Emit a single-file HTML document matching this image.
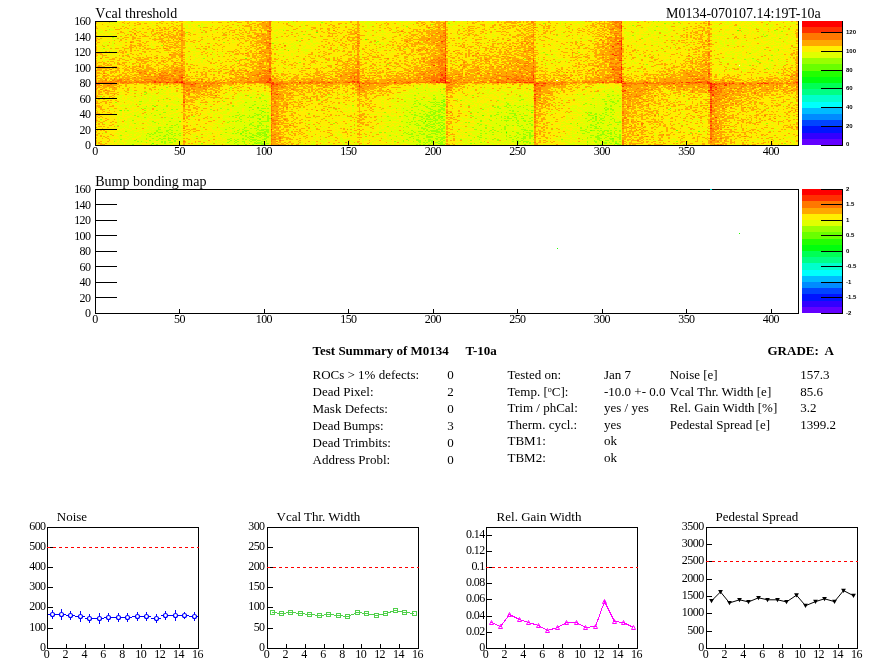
<!DOCTYPE html>
<html><head><meta charset="utf-8"><title>Test Summary of M0134</title>
<style>
html,body{margin:0;padding:0;background:#fff}
svg{display:block}
text{font-family:"Liberation Serif",serif;fill:#000}
.ax{font-size:12px;letter-spacing:-0.55px}
.t14{font-size:14px}
.t13{font-size:13px}
.b{font-weight:bold}
.pl{font-family:"Liberation Sans",sans-serif;font-weight:bold;font-size:6px}
.k{stroke:#000;stroke-width:1;fill:none;shape-rendering:crispEdges}
</style></head><body>
<svg style="will-change:transform" width="896" height="672" viewBox="0 0 896 672">
<rect width="896" height="672" fill="#fff"/>
<g shape-rendering="crispEdges"><rect x="95" y="21" width="703" height="124" fill="#FFEE00"/>
<g transform="translate(95 21) scale(1.68990 1)" fill="none" stroke-width="1">
<path stroke="#22FF00" d="M195 100.5h1M243 111.5h1"/>
<path stroke="#69FF00" d="M380 9.5h1M131 11.5h1M160 18.5h1M114 29.5h1M89 37.5h1M206 80.5h1M205 81.5h1M35 85.5h1M91 86.5h1m4 0h1M301 87.5h1m38 0h1M15 89.5h1M99 90.5h1M258 91.5h1M333 93.5h1M229 94.5h1M205 95.5h1m90 0h1M253 97.5h1M97 98.5h1M50 100.5h1M285 102.5h1M205 104.5h1M298 105.5h1M293 109.5h1m50 0h1M357 110.5h1M86 112.5h1M101 113.5h1M93 116.5h1M306 117.5h1M34 122.5h1m60 0h1m212 0h1"/>
<path stroke="#99FF00" d="M330 0.5h1m2 0h1M114 1.5h1m19 0h1m210 0h1M209 2.5h1m55 0h1m71 0h1m60 0h1M199 3.5h1m51 0h1M61 4.5h1m62 0h1m193 0h1M184 5.5h1m147 0h1M381 7.5h1M8 8.5h1M111 9.5h1m219 0h1m70 0h1M382 10.5h1m23 0h1M54 11.5h1M123 13.5h1m271 0h1M273 14.5h1m44 0h1m78 0h1M396 15.5h1M10 16.5h1M122 17.5h1m200 0h1m81 0h1M121 20.5h1m45 0h1M76 21.5h1m89 0h1m118 0h1M105 22.5h1M39 24.5h1M5 27.5h1M183 28.5h1m152 0h1m59 0h1m7 0h1M404 29.5h1M265 31.5h1m20 0h1M387 32.5h1M19 33.5h1m247 0h1M327 34.5h1m72 0h1M64 37.5h1m324 0h1M254 38.5h1m129 0h1m19 0h1M84 39.5h1m306 0h1m8 0h1M392 40.5h1M121 41.5h1m271 0h1M173 43.5h1m152 0h1M387 44.5h1M397 47.5h1M398 48.5h1M404 51.5h1M369 53.5h1M42 66.5h1m37 0h1M190 67.5h1m15 0h1M39 68.5h1m164 0h1m1 0h1m50 0h1M195 69.5h1M204 70.5h1m70 0h1m19 0h1m5 0h1m4 0h1M29 71.5h2M191 72.5h1M29 73.5h1m68 0h1m39 0h1m14 0h1m51 0h1m79 0h1m12 0h1m4 0h1M90 74.5h1m8 0h1m89 0h1m10 0h1m22 0h1m27 0h1m54 0h1m2 0h1m38 0h1M3 75.5h1m202 0h1m96 0h2M92 76.5h1m4 0h1m103 0h1M97 77.5h1m91 0h1m10 0h1m41 0h1m20 0h1m30 0h1m12 0h1m2 0h1M40 78.5h1m3 0h1m148 0h1m6 0h2m4 0h1m7 0h1m37 0h2m46 0h2m3 0h1M100 79.5h1m31 0h1m57 0h1m14 0h2m9 0h1m21 0h1m12 0h1m52 0h1m4 0h1M26 80.5h2m9 0h1m11 0h1m26 0h1m17 0h1m3 0h1m2 0h1m81 0h1m5 0h1m7 0h1m3 0h1m99 0h2m2 0h2m2 0h1M12 81.5h1m76 0h1m101 0h1m6 0h3m1 0h2m39 0h1m62 0h2M189 82.5h1m2 0h1m8 0h1m4 0h1m37 0h1m45 0h1m11 0h1m5 0h1M26 83.5h1m35 0h1m31 0h1m6 0h1m86 0h1m3 0h1m2 0h1m4 0h1m1 0h2m2 0h2m36 0h1m44 0h1m3 0h1m8 0h1m4 0h1M34 84.5h1m7 0h1m38 0h1m6 0h1m4 0h1m5 0h1m3 0h1m48 0h1m41 0h1m6 0h1m2 0h4m13 0h1m21 0h1m1 0h1m2 0h1m4 0h1m1 0h1m39 0h1m9 0h1M30 85.5h1m11 0h1m38 0h1m19 0h1m87 0h2m4 0h2m2 0h3m1 0h1m2 0h1m28 0h1m2 0h1m3 0h2m7 0h1m6 0h1m46 0h1m4 0h1M92 86.5h1m94 0h1m8 0h1m7 0h2m30 0h1m1 0h1m5 0h1m1 0h1m3 0h1m2 0h1m41 0h1m6 0h1M27 87.5h1m1 0h1m44 0h1m21 0h1m1 0h3m1 0h1m75 0h1m3 0h1m14 0h2m6 0h2m32 0h1m63 0h1m1 0h1M40 88.5h1m4 0h1m2 0h1m19 0h1m9 0h1m14 0h1m97 0h1m6 0h2m3 0h4m22 0h1m25 0h1m46 0h2m1 0h2m32 0h1M14 89.5h1m2 0h1m1 0h1m9 0h1m6 0h1m54 0h1m5 0h2m85 0h1m2 0h1m5 0h1m6 0h2m1 0h2m1 0h1m38 0h1m1 0h1m8 0h1m1 0h2m42 0h1m3 0h1M194 90.5h1m3 0h2m1 0h4m42 0h1m2 0h1M40 91.5h2m42 0h1m13 0h1m1 0h1m1 0h1m68 0h1m14 0h1m2 0h1m7 0h2m1 0h2m1 0h1m1 0h1m16 0h1m3 0h1m11 0h1m1 0h1m2 0h1m46 0h1m1 0h2m8 0h1m2 0h1m1 0h1M33 92.5h1m60 0h1m3 0h1m93 0h1m2 0h1m2 0h1m1 0h2m4 0h1m38 0h4m4 0h1m39 0h1m2 0h1m3 0h1M30 93.5h1m7 0h1m46 0h1m9 0h3m28 0h1m60 0h1m1 0h1m4 0h1m1 0h1m2 0h2m2 0h2m32 0h2m9 0h1m2 0h1m40 0h1m2 0h2m1 0h1m3 0h1m3 0h1M23 94.5h1m11 0h1m47 0h2m2 0h2m2 0h1m2 0h1m1 0h1m1 0h1m1 0h1m1 0h1m80 0h1m5 0h2m5 0h4m1 0h3m18 0h1m11 0h1m1 0h1m11 0h2m4 0h2m32 0h1m3 0h3m4 0h1m3 0h1M25 95.5h1m32 0h1m20 0h1m1 0h1m4 0h1m4 0h1m1 0h1m5 0h1m2 0h1m70 0h1m6 0h1m3 0h1m7 0h2m1 0h3m2 0h2m1 0h2m1 0h1m16 0h1m10 0h1m5 0h1m1 0h1m1 0h1m2 0h1m4 0h1m48 0h1m3 0h1M29 96.5h1m11 0h1m41 0h1m1 0h1m4 0h1m1 0h2m5 0h1m2 0h1m85 0h2m3 0h1m3 0h1m2 0h1m2 0h3m34 0h1m3 0h1m3 0h2m8 0h1m35 0h1m1 0h1m1 0h1m2 0h1M45 97.5h1m39 0h1m10 0h2m4 0h2m84 0h1m5 0h1m1 0h1m1 0h1m1 0h2m1 0h1m1 0h1m19 0h1m11 0h1m4 0h1m1 0h3m2 0h1m2 0h1m4 0h1m32 0h1m3 0h1m1 0h1m2 0h2m5 0h1M3 98.5h1m82 0h1m15 0h1m82 0h1m2 0h1m4 0h1m2 0h4m1 0h2m1 0h1m1 0h1m26 0h1m15 0h1m43 0h1m2 0h1m2 0h1m5 0h1m1 0h1M17 99.5h1m4 0h1m61 0h1m6 0h1m10 0h1m71 0h1m16 0h2m2 0h1m4 0h3m2 0h2m21 0h1m5 0h1m5 0h1m1 0h3m2 0h1m2 0h1m2 0h2m3 0h1m33 0h1m3 0h1m1 0h1m1 0h2m5 0h1M34 100.5h1m9 0h1m34 0h1m1 0h1m1 0h1m2 0h1m9 0h1m1 0h5m78 0h1m5 0h1m1 0h1m3 0h1m3 0h3m1 0h1m26 0h1m14 0h1m6 0h1m3 0h1m1 0h2m33 0h1m2 0h2m11 0h1m2 0h1M35 101.5h1m42 0h1m9 0h1m4 0h1m3 0h1m86 0h1m1 0h1m7 0h1m3 0h1m2 0h1m1 0h3m13 0h1m1 0h1m27 0h1m47 0h1m1 0h1m4 0h1m3 0h3M23 102.5h1m13 0h1m54 0h1m4 0h2m42 0h1m48 0h1m3 0h1m2 0h1m2 0h1m1 0h2m2 0h1m19 0h1m10 0h1m12 0h1m6 0h1m23 0h1m15 0h1m2 0h1m96 0h1M42 103.5h1m5 0h1m42 0h2m5 0h1m87 0h1m2 0h1m1 0h1m4 0h1m1 0h3m3 0h1m1 0h1m21 0h1m14 0h1m11 0h1m2 0h1m34 0h1m2 0h1m7 0h2m3 0h1M13 104.5h1m31 0h1m1 0h1m40 0h1m2 0h1m1 0h1m2 0h2m1 0h1m1 0h1m88 0h3m2 0h3m3 0h1m1 0h1m23 0h1m3 0h1m7 0h1m4 0h1m2 0h1m2 0h1m1 0h1m5 0h1m26 0h1m7 0h2m8 0h1M49 105.5h1m44 0h1m1 0h1m4 0h2m70 0h1m6 0h1m3 0h1m10 0h2m1 0h3m3 0h1m1 0h1m35 0h1m8 0h1m39 0h1m3 0h2M37 106.5h2m2 0h1m2 0h2m3 0h1m29 0h1m2 0h1m5 0h2m6 0h1m1 0h1m2 0h1m80 0h1m2 0h1m5 0h1m1 0h1m3 0h1m1 0h1m1 0h1m2 0h1m1 0h1m16 0h1m7 0h1m3 0h1m6 0h1m10 0h1m2 0h1m30 0h1m3 0h1m1 0h1m2 0h1m10 0h1M37 107.5h1m43 0h1m6 0h1m3 0h1m1 0h2m95 0h1m1 0h3m4 0h1m2 0h1m1 0h2m24 0h1m10 0h1m44 0h1m7 0h3m1 0h1m4 0h1m2 0h2M37 108.5h2m5 0h1m32 0h1m7 0h1m1 0h1m8 0h1m1 0h5m91 0h1m1 0h1m5 0h4m18 0h2m9 0h1m4 0h1m1 0h1m9 0h3m35 0h1M36 109.5h1m5 0h2m1 0h1m2 0h1m35 0h1m3 0h3m4 0h1m1 0h3m1 0h2m79 0h1m4 0h1m8 0h1m1 0h5m2 0h1m22 0h1m5 0h1m1 0h1m17 0h2m1 0h2m28 0h3m4 0h2m1 0h1m1 0h1m1 0h3m1 0h1m2 0h1m1 0h1M18 110.5h1m17 0h1m5 0h1m39 0h1m4 0h1m1 0h1m10 0h3m72 0h1m12 0h1m2 0h3m1 0h1m1 0h1m1 0h5m1 0h2m7 0h1m15 0h1m2 0h1m4 0h1m4 0h1m3 0h1m5 0h1m4 0h1m31 0h1m7 0h1m1 0h2m1 0h1m3 0h1m2 0h1M35 111.5h1m1 0h3m3 0h1m1 0h1m31 0h1m6 0h1m2 0h1m3 0h1m4 0h5m1 0h1m65 0h2m1 0h1m11 0h1m1 0h1m3 0h1m12 0h3m14 0h1m15 0h1m4 0h1m8 0h2m4 0h3m27 0h1m5 0h2m7 0h1m4 0h1m1 0h1M31 112.5h1m1 0h1m1 0h1m8 0h1m2 0h1m2 0h1m30 0h1m1 0h1m5 0h1m1 0h2m2 0h3m1 0h2m81 0h1m1 0h1m2 0h1m4 0h1m1 0h1m4 0h3m2 0h1m1 0h1m21 0h1m2 0h1m11 0h1m6 0h1m2 0h1m3 0h1m30 0h2m7 0h1m2 0h1m2 0h3m1 0h1m44 0h1M32 113.5h1m1 0h1m7 0h1m2 0h1m3 0h1m24 0h1m11 0h1m6 0h1m2 0h3m1 0h1m84 0h3m5 0h2m2 0h2m2 0h2m2 0h1m29 0h1m15 0h1m1 0h2m2 0h1m41 0h3m3 0h1m2 0h1m1 0h1M15 114.5h1m14 0h1m7 0h1m2 0h1m1 0h1m3 0h1m2 0h1m36 0h1m1 0h1m3 0h3m1 0h1m1 0h3m1 0h1m70 0h1m6 0h1m8 0h2m4 0h1m7 0h1m16 0h1m6 0h1m14 0h1m1 0h1m3 0h1m5 0h1m1 0h3m33 0h2m2 0h3m2 0h1m7 0h1M32 115.5h1m3 0h1m3 0h2m4 0h1m13 0h1m28 0h1m1 0h2m2 0h2m1 0h1m1 0h3m57 0h1m17 0h1m8 0h2m7 0h4m2 0h1m3 0h1m19 0h1m16 0h1m4 0h1m4 0h2m2 0h2m37 0h2m5 0h1m1 0h1m1 0h2m1 0h1M43 116.5h1m46 0h1m1 0h1m4 0h1m3 0h2m83 0h1m4 0h1m4 0h4m3 0h5m16 0h1m2 0h2m16 0h2m3 0h1m2 0h2m2 0h1m33 0h1m1 0h1m2 0h3m3 0h1m6 0h2M30 117.5h1m3 0h1m3 0h1m1 0h2m1 0h3m1 0h1m32 0h1m6 0h1m3 0h1m8 0h2m86 0h1m5 0h1m6 0h2m2 0h2m24 0h1m4 0h1m12 0h1m2 0h3m2 0h1m33 0h1m5 0h3m1 0h1m2 0h2m4 0h1M15 118.5h1m8 0h1m5 0h1m6 0h1m1 0h1m3 0h1m2 0h1m1 0h1m29 0h2m2 0h1m1 0h1m2 0h1m1 0h1m2 0h4m3 0h2m74 0h1m8 0h1m5 0h2m5 0h2m3 0h1m1 0h2m10 0h1m10 0h1m7 0h1m2 0h1m4 0h1m3 0h1m5 0h1m5 0h1m16 0h1m11 0h1m8 0h2m6 0h2m3 0h1M23 119.5h1m8 0h1m3 0h1m6 0h2m2 0h1m32 0h1m2 0h1m7 0h1m1 0h2m1 0h2m3 0h1m80 0h1m2 0h1m4 0h3m2 0h1m1 0h3m4 0h1m1 0h1m15 0h1m15 0h1m10 0h2m1 0h1m42 0h1m2 0h2m2 0h2m2 0h1M11 120.5h1m13 0h1m1 0h1m11 0h1m1 0h1m5 0h1m31 0h1m2 0h1m1 0h1m2 0h2m3 0h1m2 0h1m2 0h2m1 0h1m75 0h1m4 0h1m5 0h1m2 0h2m4 0h1m1 0h1m3 0h1m1 0h1m24 0h1m16 0h1m2 0h2m1 0h4m34 0h1m3 0h2m9 0h1m1 0h1m1 0h1m33 0h1M30 121.5h1m8 0h1m1 0h1m2 0h2m32 0h1m4 0h1m4 0h1m5 0h1m1 0h3m93 0h1m1 0h1m1 0h1m2 0h1m1 0h2m1 0h2m22 0h1m21 0h1m2 0h1m1 0h1m1 0h1m1 0h1m31 0h1m4 0h1m3 0h3m1 0h1m3 0h1M41 122.5h1m21 0h1m18 0h1m5 0h1m2 0h1m2 0h1m1 0h4m1 0h2m92 0h1m2 0h1m4 0h3m1 0h1m14 0h1m1 0h1m25 0h1m6 0h1m43 0h2m2 0h1m3 0h1m98 0h1M22 123.5h1m10 0h1m2 0h1m47 0h1m4 0h1m3 0h1m4 0h3m89 0h1m1 0h1m1 0h1m2 0h1m6 0h3m47 0h1m36 0h1m5 0h1m1 0h1m7 0h1m1 0h2"/>
<path stroke="#E0FF00" d="M1 0.5h1m4 0h2m3 0h1m1 0h2m17 0h1m2 0h1m2 0h1m16 0h2m10 0h1m10 0h2m1 0h1m23 0h1m2 0h2m2 0h1m3 0h1m4 0h1m1 0h2m2 0h1m1 0h1m2 0h2m6 0h1m9 0h1m6 0h2m2 0h2m1 0h1m10 0h1m2 0h1m1 0h3m1 0h1m24 0h3m1 0h3m2 0h2m15 0h1m28 0h1m10 0h2m1 0h1m2 0h2m4 0h2m24 0h1m2 0h1m2 0h3m1 0h1m3 0h1m3 0h1m3 0h1m1 0h1m4 0h4m1 0h1m2 0h1m3 0h1m10 0h1m3 0h1m4 0h1m1 0h1m5 0h2m2 0h4m5 0h1m1 0h1m5 0h2m2 0h3M9 1.5h1m2 0h1m1 0h1m13 0h1m1 0h1m9 0h1m5 0h1m2 0h1m4 0h5m1 0h2m17 0h1m11 0h2m13 0h1m3 0h1m4 0h4m9 0h1m6 0h1m21 0h2m1 0h4m1 0h1m1 0h1m1 0h1m11 0h1m1 0h1m5 0h1m19 0h2m2 0h1m1 0h1m8 0h1m7 0h1m2 0h1m39 0h1m1 0h3m5 0h5m2 0h2m19 0h1m3 0h1m5 0h1m5 0h1m2 0h1m1 0h2m2 0h3m1 0h2m27 0h1m1 0h2m4 0h1m2 0h1m2 0h1m2 0h1m1 0h2m4 0h2m1 0h2m1 0h1m8 0h3M7 2.5h1m2 0h1m1 0h1m1 0h1m5 0h1m11 0h2m4 0h1m4 0h1m9 0h1m1 0h1m1 0h1m1 0h1m3 0h1m8 0h1m2 0h1m7 0h2m32 0h1m5 0h1m3 0h1m1 0h2m1 0h1m1 0h1m3 0h1m11 0h1m8 0h3m8 0h1m5 0h1m2 0h1m5 0h3m1 0h1m10 0h1m7 0h1m2 0h1m1 0h1m5 0h1m7 0h1m6 0h2m25 0h1m6 0h1m5 0h2m1 0h1m5 0h2m1 0h1m2 0h1m1 0h1m4 0h1m16 0h1m2 0h1m1 0h1m1 0h1m5 0h2m2 0h1m1 0h1m5 0h3m2 0h1m3 0h1m9 0h1m8 0h4m2 0h1m1 0h3m4 0h1m2 0h1m1 0h1m2 0h1m6 0h1m8 0h2m2 0h2m1 0h3M1 3.5h1m6 0h2m6 0h1m1 0h1m17 0h2m10 0h1m3 0h1m3 0h1m6 0h3m2 0h2m9 0h1m5 0h2m18 0h1m8 0h1m1 0h1m1 0h1m3 0h1m3 0h1m1 0h1m1 0h1m16 0h2m9 0h1m1 0h5m7 0h1m6 0h1m1 0h1m3 0h1m5 0h1m17 0h5m12 0h1m10 0h1m24 0h1m5 0h1m6 0h1m4 0h1m6 0h1m26 0h1m5 0h2m7 0h1m7 0h1m1 0h1m1 0h2m2 0h1m1 0h1m3 0h1m20 0h3m14 0h2m1 0h1m2 0h2m1 0h4m3 0h1m1 0h1m1 0h1m1 0h1m2 0h1M5 4.5h1m1 0h1m2 0h1m1 0h2m2 0h2m4 0h1m4 0h1m6 0h2m4 0h1m3 0h1m7 0h3m1 0h1m2 0h1m3 0h1m4 0h1m1 0h1m1 0h1m8 0h1m1 0h1m23 0h1m10 0h1m1 0h1m1 0h1m22 0h1m5 0h1m6 0h1m2 0h4m4 0h1m13 0h1m6 0h1m19 0h2m4 0h1m1 0h1m2 0h1m6 0h1m32 0h1m11 0h1m3 0h1m3 0h1m2 0h1m3 0h1m11 0h1m15 0h1m2 0h1m9 0h1m1 0h1m3 0h2m3 0h2m1 0h2m21 0h3m1 0h2m5 0h1m2 0h1m3 0h2m1 0h2m2 0h1m3 0h2m2 0h3m4 0h2m2 0h1M11 5.5h1m1 0h1m3 0h1m5 0h1m29 0h2m2 0h1m2 0h6m9 0h1m8 0h2m19 0h1m5 0h1m3 0h1m3 0h1m15 0h1m10 0h1m7 0h1m1 0h2m1 0h1m1 0h1m3 0h1m4 0h1m5 0h1m4 0h2m6 0h1m19 0h1m8 0h1m14 0h1m27 0h1m1 0h1m12 0h2m1 0h1m1 0h1m5 0h1m1 0h1m23 0h1m1 0h2m2 0h1m3 0h1m4 0h1m1 0h1m2 0h2m2 0h1m2 0h1m5 0h1m1 0h3m14 0h2m1 0h1m1 0h1m4 0h2m3 0h2m1 0h1m1 0h2m1 0h1m1 0h4m1 0h3m1 0h2m2 0h1m1 0h1m1 0h1m6 0h1M1 6.5h1m5 0h1m13 0h1m4 0h1m7 0h1m19 0h1m1 0h1m4 0h1m1 0h1m7 0h1m2 0h1m8 0h1m28 0h1m10 0h1m3 0h1m3 0h1m1 0h1m24 0h1m2 0h2m2 0h1m18 0h1m24 0h2m2 0h1m22 0h1m3 0h1m49 0h1m24 0h1m1 0h1m1 0h1m2 0h1m1 0h1m1 0h2m2 0h2m2 0h2m1 0h1m3 0h1m1 0h1m1 0h2m1 0h2m14 0h2m1 0h1m1 0h2m4 0h1m2 0h4m7 0h1m1 0h2m5 0h2m1 0h2m3 0h2m1 0h4M6 7.5h1m2 0h1m1 0h1m1 0h1m7 0h1m4 0h1m4 0h1m1 0h1m19 0h4m1 0h1m19 0h1m15 0h1m10 0h1m6 0h1m2 0h1m6 0h3m1 0h1m12 0h1m10 0h1m2 0h1m5 0h4m5 0h1m30 0h1m11 0h1m2 0h4m15 0h1m3 0h1m24 0h1m14 0h1m5 0h1m1 0h1m7 0h1m18 0h1m7 0h2m1 0h1m3 0h3m1 0h1m4 0h3m8 0h1m5 0h1m15 0h1m13 0h3m4 0h1m1 0h3m4 0h1m1 0h1m6 0h1m2 0h2M3 8.5h1m3 0h1m1 0h2m8 0h1m15 0h1m30 0h1m19 0h2m7 0h1m11 0h1m1 0h3m15 0h1m2 0h2m26 0h2m4 0h1m11 0h1m1 0h1m18 0h1m14 0h1m4 0h1m9 0h1m7 0h1m1 0h1m27 0h1m13 0h1m3 0h1m29 0h4m1 0h1m2 0h1m2 0h1m2 0h2m1 0h2m3 0h1m1 0h2m1 0h2m1 0h1m2 0h1m1 0h2m1 0h1m16 0h1m4 0h3m2 0h2m4 0h3m1 0h1m5 0h2m3 0h1m4 0h1m2 0h1m1 0h1M2 9.5h1m1 0h1m3 0h3m3 0h1m4 0h1m4 0h3m26 0h1m4 0h2m3 0h1m5 0h1m1 0h2m33 0h2m4 0h1m3 0h2m1 0h1m5 0h4m7 0h1m26 0h1m3 0h1m1 0h2m6 0h2m5 0h1m33 0h1m11 0h1m32 0h1m9 0h1m6 0h2m11 0h1m19 0h1m5 0h1m1 0h1m5 0h3m2 0h5m1 0h1m1 0h2m3 0h1m4 0h1m15 0h2m1 0h1m3 0h2m7 0h2m2 0h1m6 0h2m8 0h1m2 0h1m1 0h1m1 0h1M2 10.5h3m1 0h3m49 0h1m4 0h2m5 0h1m19 0h1m10 0h1m4 0h1m1 0h1m5 0h2m1 0h2m2 0h1m3 0h1m1 0h1m37 0h2m2 0h2m6 0h1m11 0h1m19 0h1m5 0h1m11 0h1m5 0h1m2 0h1m26 0h1m8 0h2m2 0h2m36 0h1m5 0h2m2 0h1m1 0h1m1 0h3m3 0h4m1 0h2m1 0h1m22 0h2m3 0h1m1 0h1m7 0h1m3 0h2m3 0h1m1 0h1m2 0h4m2 0h1m1 0h2m1 0h1m2 0h2m1 0h2M1 11.5h1m1 0h2m2 0h1m4 0h1m4 0h1m1 0h1m1 0h1m6 0h1m5 0h1m11 0h1m6 0h1m2 0h1m4 0h1m2 0h1m5 0h1m5 0h1m7 0h1m7 0h1m16 0h2m8 0h1m1 0h2m2 0h1m4 0h1m2 0h1m7 0h1m17 0h1m1 0h2m2 0h1m2 0h1m1 0h2m2 0h1m3 0h1m1 0h1m51 0h1m2 0h1m17 0h1m2 0h1m5 0h1m11 0h1m12 0h1m25 0h4m2 0h1m5 0h3m1 0h2m1 0h2m1 0h5m4 0h1m1 0h1m1 0h1m11 0h1m7 0h2m2 0h1m6 0h1m3 0h1m2 0h1m2 0h1m1 0h3m1 0h2m1 0h1m1 0h1m1 0h2m1 0h1m8 0h1M1 12.5h2m2 0h1m3 0h2m3 0h1m4 0h1m11 0h1m25 0h1m7 0h1m9 0h1m1 0h1m2 0h1m24 0h1m2 0h1m2 0h1m1 0h1m1 0h2m1 0h1m1 0h1m4 0h1m1 0h1m33 0h1m3 0h1m7 0h1m2 0h1m7 0h1m3 0h1m23 0h1m2 0h1m4 0h1m4 0h1m11 0h1m1 0h1m5 0h1m5 0h1m18 0h1m2 0h1m2 0h2m1 0h1m5 0h1m27 0h1m1 0h1m2 0h2m1 0h1m7 0h2m1 0h2m3 0h2m6 0h1m24 0h1m2 0h1m3 0h1m2 0h1m2 0h2m1 0h1m1 0h1m1 0h1m2 0h1m1 0h2m1 0h1m2 0h7m4 0h1M3 13.5h1m4 0h2m1 0h2m4 0h1m14 0h1m3 0h1m16 0h2m8 0h2m1 0h2m18 0h1m3 0h1m15 0h1m4 0h1m9 0h1m2 0h1m3 0h1m18 0h1m13 0h1m1 0h1m5 0h2m4 0h1m3 0h1m3 0h1m16 0h1m13 0h1m7 0h1m6 0h1m1 0h3m1 0h1m31 0h1m8 0h1m4 0h1m1 0h1m4 0h1m25 0h3m2 0h1m1 0h1m1 0h4m1 0h1m3 0h5m2 0h2m2 0h1m21 0h2m1 0h3m1 0h3m1 0h1m6 0h1m1 0h1m2 0h1m3 0h1m1 0h1m2 0h2m2 0h1m1 0h1m3 0h2m1 0h2m1 0h1M2 14.5h1m2 0h1m3 0h1m5 0h2m3 0h1m1 0h1m8 0h1m3 0h1m17 0h1m24 0h1m5 0h1m21 0h2m18 0h1m3 0h2m28 0h1m2 0h1m7 0h1m9 0h1m26 0h1m5 0h1m21 0h1m9 0h1m18 0h1m13 0h1m5 0h2m10 0h1m16 0h2m1 0h1m6 0h1m2 0h2m1 0h3m1 0h1m4 0h1m2 0h2m7 0h1m9 0h1m3 0h7m3 0h1m4 0h1m4 0h1m7 0h3m3 0h1m3 0h1m3 0h1m3 0h1M1 15.5h2m3 0h2m2 0h2m8 0h1m33 0h1m28 0h1m22 0h1m2 0h1m4 0h1m1 0h2m2 0h2m3 0h3m4 0h1m12 0h1m16 0h1m4 0h1m2 0h1m42 0h1m1 0h1m15 0h1m3 0h2m1 0h1m23 0h1m7 0h1m5 0h2m4 0h1m3 0h1m3 0h1m2 0h1m1 0h1m5 0h1m11 0h1m2 0h1m2 0h1m5 0h4m6 0h1m1 0h2m4 0h4m15 0h1m3 0h1m5 0h2m1 0h1m1 0h1m10 0h1m6 0h1m1 0h1m5 0h1m1 0h3m1 0h1m2 0h1M1 16.5h1m2 0h1m6 0h1m1 0h1m23 0h1m23 0h1m13 0h2m7 0h1m20 0h1m2 0h2m1 0h1m3 0h1m1 0h1m1 0h2m3 0h1m2 0h2m6 0h1m22 0h1m1 0h1m3 0h3m1 0h2m2 0h1m1 0h2m1 0h1m31 0h1m6 0h1m3 0h1m4 0h1m6 0h1m12 0h1m5 0h1m13 0h1m5 0h2m1 0h1m4 0h1m2 0h1m7 0h1m24 0h1m3 0h1m3 0h1m1 0h2m5 0h1m1 0h2m4 0h1m2 0h2m20 0h3m1 0h1m4 0h1m1 0h1m5 0h1m11 0h1m2 0h2m1 0h3m3 0h1m1 0h2m3 0h1M4 17.5h1m5 0h1m1 0h1m2 0h1m18 0h1m21 0h1m6 0h1m2 0h1m2 0h1m18 0h1m17 0h3m1 0h1m9 0h2m4 0h2m2 0h1m1 0h1m1 0h1m31 0h1m3 0h1m1 0h1m9 0h1m52 0h1m2 0h1m4 0h1m2 0h1m14 0h1m1 0h1m1 0h1m4 0h1m4 0h2m8 0h2m1 0h1m24 0h4m2 0h1m4 0h1m4 0h2m3 0h1m4 0h2m2 0h1m1 0h3m21 0h1m1 0h2m2 0h1m7 0h1m1 0h1m1 0h1m1 0h1m1 0h2m1 0h2m4 0h1m5 0h1m2 0h1m2 0h1M3 18.5h1m3 0h1m2 0h4m15 0h1m34 0h1m1 0h2m5 0h1m32 0h2m3 0h1m1 0h1m13 0h2m13 0h1m22 0h1m1 0h1m4 0h2m35 0h1m6 0h1m5 0h1m6 0h1m14 0h1m32 0h2m1 0h2m5 0h2m2 0h2m1 0h1m20 0h1m3 0h1m4 0h1m3 0h2m2 0h1m1 0h3m2 0h2m3 0h1m4 0h1m15 0h5m2 0h1m1 0h1m2 0h1m2 0h2m1 0h3m5 0h1m5 0h3m1 0h2m1 0h1m3 0h1m2 0h2m1 0h1M18 19.5h1m41 0h1m5 0h1m3 0h1m10 0h1m2 0h1m35 0h2m2 0h1m2 0h2m1 0h1m11 0h1m15 0h1m1 0h1m2 0h1m2 0h1m7 0h1m39 0h1m1 0h1m5 0h1m9 0h1m3 0h1m24 0h1m6 0h1m15 0h1m1 0h1m1 0h3m3 0h2m21 0h1m2 0h2m3 0h1m3 0h2m4 0h1m1 0h1m2 0h1m3 0h1m11 0h1m12 0h2m2 0h1m1 0h3m1 0h1m10 0h3m2 0h3m2 0h1m1 0h1m4 0h2m1 0h2m2 0h1M7 20.5h2m1 0h2m6 0h1m10 0h1m3 0h1m1 0h1m27 0h1m8 0h1m34 0h1m7 0h1m1 0h1m1 0h1m6 0h3m18 0h1m16 0h1m28 0h1m15 0h1m5 0h1m11 0h1m13 0h1m21 0h1m2 0h1m1 0h1m2 0h1m2 0h2m4 0h2m34 0h1m7 0h2m5 0h2m1 0h2m4 0h2m4 0h1m5 0h1m1 0h1m12 0h1m1 0h3m1 0h1m1 0h1m1 0h3m3 0h2m3 0h1m2 0h1m1 0h1m5 0h1m2 0h4m2 0h1M5 21.5h2m3 0h2m3 0h1m8 0h1m13 0h1m15 0h1m8 0h1m2 0h1m4 0h1m6 0h1m2 0h2m6 0h1m15 0h2m1 0h1m2 0h2m5 0h3m4 0h1m2 0h1m2 0h1m2 0h1m14 0h1m11 0h1m3 0h1m1 0h1m1 0h2m2 0h1m19 0h1m26 0h1m7 0h1m6 0h1m2 0h2m21 0h2m1 0h1m29 0h1m19 0h1m9 0h1m2 0h1m1 0h2m5 0h1m2 0h1m2 0h1m6 0h1m1 0h1m14 0h1m2 0h2m2 0h2m1 0h3m3 0h1m2 0h3m5 0h1m4 0h1m1 0h1m2 0h3m1 0h3m3 0h1M1 22.5h1m3 0h1m1 0h1m2 0h1m22 0h1m1 0h1m1 0h1m16 0h1m1 0h2m2 0h1m4 0h1m3 0h1m37 0h1m2 0h1m1 0h2m2 0h2m1 0h2m4 0h2m2 0h4m26 0h1m3 0h1m1 0h2m1 0h3m1 0h2m37 0h1m2 0h1m16 0h2m24 0h1m12 0h1m9 0h1m37 0h2m3 0h1m8 0h1m4 0h1m4 0h2m21 0h2m3 0h2m1 0h2m2 0h2m3 0h3m2 0h1m6 0h1m2 0h1m1 0h1m2 0h1m3 0h1m2 0h2m1 0h1m1 0h1M4 23.5h1m1 0h2m2 0h1m1 0h1m2 0h1m17 0h1m14 0h1m5 0h1m1 0h1m1 0h1m1 0h1m4 0h1m2 0h1m16 0h1m5 0h1m19 0h1m3 0h2m1 0h1m2 0h1m4 0h1m2 0h1m14 0h1m21 0h2m2 0h1m4 0h1m19 0h1m20 0h1m6 0h1m3 0h1m42 0h1m2 0h1m5 0h1m36 0h1m2 0h1m9 0h4m1 0h1m2 0h1m6 0h2m2 0h1m6 0h1m14 0h2m4 0h4m2 0h3m11 0h3m4 0h1m1 0h1m1 0h1m1 0h1M5 24.5h2m2 0h2m2 0h2m2 0h1m14 0h1m20 0h1m5 0h1m8 0h1m10 0h1m18 0h1m12 0h1m5 0h2m3 0h1m1 0h1m3 0h1m1 0h1m6 0h1m25 0h1m2 0h1m2 0h1m1 0h1m5 0h1m16 0h1m15 0h1m34 0h1m17 0h2m7 0h1m1 0h1m15 0h1m23 0h1m5 0h2m3 0h1m8 0h2m2 0h1m1 0h1m7 0h2m2 0h1m15 0h1m2 0h1m1 0h1m5 0h1m1 0h2m2 0h1m1 0h2m1 0h7m1 0h6m1 0h1m1 0h1m5 0h1M2 25.5h3m1 0h1m3 0h1m6 0h1m15 0h2m22 0h1m2 0h1m28 0h1m15 0h1m1 0h1m1 0h1m4 0h1m1 0h3m4 0h2m4 0h1m6 0h2m6 0h1m1 0h1m12 0h1m8 0h1m44 0h1m12 0h1m9 0h1m24 0h1m6 0h1m4 0h1m2 0h1m2 0h1m7 0h1m1 0h1m23 0h1m6 0h1m4 0h3m2 0h1m1 0h1m6 0h1m2 0h2m18 0h1m4 0h1m2 0h2m1 0h2m1 0h3m3 0h1m2 0h2m4 0h1m1 0h1m1 0h1m4 0h1m10 0h1M9 26.5h1m1 0h1m3 0h1m17 0h2m20 0h1m4 0h1m1 0h1m1 0h1m3 0h1m2 0h1m33 0h1m7 0h1m2 0h1m1 0h2m3 0h1m3 0h1m3 0h1m9 0h1m2 0h1m4 0h1m19 0h1m4 0h1m4 0h1m31 0h1m7 0h1m4 0h1m8 0h2m26 0h1m12 0h1m1 0h1m3 0h1m11 0h1m27 0h1m1 0h2m1 0h1m3 0h1m6 0h2m1 0h1m2 0h1m7 0h2m15 0h1m4 0h1m1 0h1m11 0h1m1 0h2m1 0h2m7 0h1m4 0h2m5 0h1M3 27.5h1m3 0h1m2 0h2m2 0h1m12 0h1m6 0h1m18 0h1m1 0h2m1 0h1m7 0h1m38 0h1m2 0h1m4 0h3m1 0h4m1 0h1m13 0h1m4 0h1m1 0h1m1 0h1m13 0h1m4 0h1m2 0h1m1 0h2m5 0h1m7 0h1m44 0h1m32 0h1m1 0h3m5 0h1m2 0h1m1 0h1m41 0h1m14 0h1m3 0h2m2 0h2m5 0h1m12 0h1m5 0h3m11 0h1m1 0h2m4 0h1m1 0h2m1 0h1m2 0h1m3 0h2m6 0h1m2 0h2M4 28.5h1m1 0h2m11 0h1m33 0h1m2 0h1m1 0h2m4 0h1m2 0h1m1 0h1m6 0h1m33 0h2m4 0h1m1 0h1m4 0h5m1 0h1m14 0h1m1 0h1m21 0h1m2 0h1m1 0h1m50 0h1m3 0h1m22 0h1m10 0h1m1 0h1m1 0h1m2 0h2m2 0h1m15 0h1m30 0h1m5 0h2m2 0h1m2 0h1m23 0h1m10 0h1m3 0h1m2 0h1m1 0h1m1 0h1m3 0h1m4 0h2m2 0h1m4 0h1m4 0h2m2 0h3M3 29.5h2m1 0h1m2 0h1m2 0h1m13 0h1m30 0h3m5 0h2m1 0h1m10 0h1m29 0h3m1 0h1m3 0h1m4 0h4m12 0h1m18 0h1m9 0h2m94 0h1m3 0h1m3 0h1m14 0h1m27 0h1m1 0h1m3 0h1m3 0h1m5 0h1m3 0h3m4 0h1m4 0h1m3 0h1m20 0h1m6 0h1m4 0h1m1 0h1m3 0h4m1 0h1m5 0h3m4 0h1M4 30.5h2m3 0h1m2 0h1m25 0h1m21 0h2m6 0h3m5 0h1m12 0h1m16 0h2m11 0h1m4 0h3m17 0h1m7 0h1m23 0h1m73 0h1m19 0h1m1 0h2m1 0h1m3 0h1m8 0h1m31 0h1m10 0h3m2 0h1m8 0h1m19 0h1m2 0h1m5 0h1m1 0h2m3 0h2m3 0h1m1 0h1m1 0h2m3 0h1m1 0h1m4 0h2m4 0h2M5 31.5h1m5 0h2m15 0h1m12 0h2m7 0h1m4 0h2m1 0h1m8 0h1m5 0h2m3 0h1m1 0h1m26 0h1m2 0h2m7 0h1m3 0h1m7 0h1m7 0h1m3 0h1m3 0h1m9 0h1m16 0h1m89 0h1m4 0h1m18 0h1m32 0h2m6 0h2m4 0h1m1 0h1m5 0h1m1 0h1m4 0h1m2 0h1m19 0h1m2 0h1m2 0h3m4 0h1m1 0h3m1 0h1m1 0h1m3 0h2m2 0h1m7 0h1M11 32.5h1m1 0h1m40 0h1m7 0h1m6 0h2m3 0h2m32 0h4m2 0h1m1 0h1m1 0h1m2 0h1m2 0h2m36 0h1m25 0h1m22 0h1m25 0h1m25 0h2m1 0h1m8 0h1m7 0h1m9 0h1m3 0h1m21 0h1m17 0h3m26 0h1m6 0h1m3 0h2m3 0h1m2 0h1m2 0h1m4 0h2m1 0h1m1 0h1m4 0h1m2 0h1M29 33.5h1m23 0h1m1 0h1m2 0h2m2 0h1m1 0h1m4 0h2m2 0h1m1 0h1m5 0h1m26 0h1m7 0h1m2 0h1m4 0h1m4 0h1m2 0h1m17 0h1m1 0h1m4 0h1m7 0h1m7 0h1m50 0h1m8 0h1m34 0h1m2 0h2m5 0h1m4 0h1m36 0h1m2 0h1m7 0h1m34 0h2m2 0h1m2 0h6m1 0h3m2 0h2m5 0h1m1 0h1m2 0h1m1 0h2m2 0h4M9 34.5h1m1 0h1m1 0h1m23 0h1m15 0h1m4 0h1m2 0h1m1 0h1m7 0h1m3 0h1m35 0h2m3 0h1m17 0h1m29 0h1m19 0h1m82 0h3m1 0h1m17 0h1m24 0h2m4 0h2m1 0h1m10 0h1m2 0h1m6 0h1m8 0h1m18 0h1m1 0h2m1 0h1m3 0h2m2 0h1m2 0h2m2 0h4m3 0h1m2 0h2M2 35.5h1m2 0h1m1 0h1m4 0h1m12 0h1m10 0h1m18 0h1m8 0h2m4 0h1m4 0h1m5 0h1m22 0h1m1 0h1m2 0h2m3 0h1m2 0h1m21 0h1m1 0h1m10 0h1m4 0h1m73 0h1m32 0h1m5 0h3m21 0h1m26 0h1m5 0h1m3 0h1m7 0h1m14 0h1m3 0h1m7 0h1m2 0h1m7 0h1m2 0h1m1 0h2m1 0h1m2 0h1m1 0h1m10 0h1m3 0h1m1 0h1m2 0h1M2 36.5h2m4 0h1m7 0h1m13 0h1m24 0h1m3 0h1m1 0h1m5 0h1m1 0h2m4 0h1m11 0h1m19 0h1m5 0h2m6 0h1m1 0h1m6 0h1m26 0h1m15 0h1m6 0h1m62 0h1m24 0h2m1 0h1m1 0h1m4 0h1m9 0h1m27 0h1m3 0h2m3 0h2m4 0h1m18 0h1m22 0h3m1 0h2m1 0h2m5 0h1m7 0h2m3 0h2m1 0h1m2 0h2m2 0h1M16 37.5h1m4 0h1m32 0h1m4 0h2m2 0h1m4 0h1m3 0h1m39 0h1m3 0h1m10 0h1m3 0h1m10 0h1m23 0h2m10 0h1m3 0h1m1 0h1m24 0h1m15 0h1m35 0h1m2 0h1m1 0h1m9 0h1m14 0h1m24 0h1m5 0h1m29 0h1m13 0h1m2 0h2m2 0h2m1 0h1m3 0h3m1 0h1m1 0h3m1 0h1m1 0h1m2 0h2m3 0h1m1 0h1m2 0h1m5 0h1m2 0h1M2 38.5h1m3 0h2m46 0h1m3 0h2m6 0h1m25 0h1m18 0h2m1 0h1m2 0h1m1 0h1m14 0h2m3 0h1m18 0h1m6 0h1m21 0h1m38 0h1m34 0h1m2 0h1m7 0h6m1 0h1m7 0h1m34 0h1m5 0h1m1 0h1m5 0h1m1 0h2m25 0h1m2 0h1m1 0h4m1 0h3m4 0h1m2 0h3m1 0h2m2 0h3m3 0h2m6 0h1M1 39.5h1m3 0h1m2 0h1m47 0h1m5 0h2m3 0h1m2 0h1m12 0h1m23 0h1m13 0h1m10 0h1m13 0h1m6 0h1m19 0h1m17 0h1m20 0h1m9 0h1m41 0h1m1 0h1m4 0h2m1 0h2m3 0h1m33 0h1m4 0h1m6 0h1m2 0h1m9 0h1m1 0h1m5 0h1m3 0h1m14 0h1m5 0h1m6 0h1m1 0h1m4 0h2m2 0h2m5 0h1m1 0h2m1 0h1m3 0h2m1 0h2m1 0h1M5 40.5h1m12 0h1m1 0h1m1 0h1m12 0h1m19 0h1m2 0h1m4 0h1m2 0h1m4 0h1m2 0h1m32 0h1m2 0h1m4 0h1m2 0h1m4 0h1m13 0h2m1 0h1m19 0h1m48 0h1m51 0h1m4 0h1m3 0h1m3 0h1m4 0h1m1 0h1m30 0h1m3 0h1m1 0h1m17 0h2m16 0h1m9 0h1m3 0h1m1 0h6m2 0h4m4 0h1m2 0h3m6 0h4m2 0h2m1 0h1m3 0h1M7 41.5h1m13 0h1m9 0h1m23 0h1m1 0h1m3 0h1m1 0h1m1 0h1m1 0h1m6 0h1m6 0h1m8 0h1m29 0h1m14 0h1m12 0h1m61 0h1m1 0h1m2 0h1m23 0h1m25 0h1m1 0h1m2 0h3m2 0h1m3 0h1m9 0h2m22 0h2m2 0h1m1 0h1m1 0h1m3 0h1m3 0h1m1 0h1m35 0h1m1 0h1m3 0h2m2 0h3m6 0h3m1 0h1m1 0h1m1 0h1m6 0h2m3 0h1m1 0h2m3 0h1M12 42.5h1m12 0h1m14 0h1m12 0h1m26 0h1m2 0h1m4 0h1m20 0h1m2 0h1m1 0h1m24 0h1m21 0h1m20 0h1m30 0h1m30 0h1m17 0h1m4 0h1m4 0h1m1 0h1m3 0h1m33 0h1m4 0h1m1 0h2m3 0h1m8 0h1m8 0h1m27 0h3m2 0h1m5 0h1m1 0h1m2 0h1m1 0h1m7 0h1m2 0h1m4 0h2m2 0h1m3 0h1m1 0h1M21 43.5h1m19 0h1m13 0h1m8 0h1m4 0h1m2 0h1m5 0h1m27 0h1m1 0h1m20 0h2m32 0h1m4 0h1m1 0h1m19 0h1m72 0h1m1 0h4m4 0h1m41 0h1m1 0h1m7 0h1m3 0h1m45 0h1m4 0h1m2 0h2m2 0h1m2 0h1m1 0h1m2 0h1m1 0h1m1 0h2m1 0h1m3 0h3M19 44.5h1m3 0h1m33 0h1m9 0h1m2 0h2m38 0h1m8 0h1m1 0h1m18 0h1m36 0h2m98 0h2m2 0h1m18 0h1m15 0h1m5 0h1m1 0h1m7 0h1m6 0h1m28 0h2m1 0h2m2 0h2m1 0h1m2 0h1m1 0h1m1 0h2m8 0h2m2 0h1m1 0h1m3 0h2M53 45.5h1m29 0h1m26 0h1m2 0h1m8 0h1m5 0h1m6 0h2m4 0h1m25 0h1m27 0h1m70 0h1m4 0h1m4 0h1m36 0h1m1 0h1m4 0h2m4 0h1m1 0h1m3 0h1m32 0h1m14 0h2m6 0h2m2 0h1m2 0h2m1 0h4m1 0h1m8 0h1m1 0h1M9 46.5h1m51 0h1m9 0h1m16 0h1m16 0h1m6 0h2m10 0h1m12 0h1m24 0h1m3 0h1m2 0h1m7 0h1m85 0h1m3 0h1m2 0h1m12 0h1m30 0h1m3 0h1m5 0h1m1 0h1m1 0h1m1 0h1m3 0h1m39 0h2m5 0h5m4 0h2m5 0h1m1 0h1m4 0h3m1 0h1M29 47.5h1m34 0h1m7 0h2m12 0h1m32 0h2m24 0h1m15 0h1m26 0h1m22 0h1m72 0h1m39 0h1m17 0h1m16 0h1m8 0h1m4 0h2m1 0h1m2 0h1m2 0h1m13 0h1m2 0h2m2 0h1M71 48.5h1m33 0h1m9 0h1m6 0h1m19 0h1m22 0h1m9 0h1m94 0h1m1 0h1m46 0h1m8 0h1m8 0h1m17 0h1m11 0h1m14 0h3m1 0h1m8 0h1m3 0h1M60 49.5h1m12 0h1m2 0h1m31 0h2m67 0h1m90 0h1m3 0h1m21 0h1m22 0h1m1 0h1m2 0h1m26 0h1m16 0h2m1 0h1m1 0h1m3 0h2m1 0h1m4 0h2m6 0h1m3 0h2m5 0h1M59 50.5h1m5 0h1m12 0h1m36 0h1m46 0h2m3 0h1m110 0h1m36 0h1m2 0h1m3 0h2m41 0h1m3 0h1m4 0h2m2 0h2m3 0h2m1 0h1m9 0h1m8 0h1m3 0h1M7 51.5h1m62 0h1m1 0h1m36 0h2m29 0h1m35 0h1m140 0h1m5 0h1m17 0h1m24 0h1m3 0h1m1 0h1m8 0h1m10 0h1m6 0h2m4 0h1M55 52.5h1m14 0h1m34 0h1m14 0h1m102 0h1m52 0h2m4 0h1m51 0h1m5 0h1m28 0h1m31 0h1m3 0h1M61 53.5h1m14 0h1m94 0h1m29 0h1m112 0h1m1 0h1m49 0h1m15 0h1m9 0h2m2 0h1m6 0h1M55 54.5h1m41 0h1m191 0h1m47 0h1m30 0h1m13 0h1M15 55.5h1m94 0h1m27 0h1m22 0h1m64 0h1m59 0h1m35 0h1m16 0h1m39 0h1m10 0h1m22 0h1M3 56.5h1m56 0h1m51 0h1m2 0h1m204 0h1m9 0h1m51 0h1m12 0h1m9 0h2M220 57.5h1m145 0h1M60 58.5h1M70 59.5h1m295 0h2m16 0h1m5 0h2M1 60.5h1M244 62.5h1m52 0h1M25 63.5h1m13 0h1m3 0h1m149 0h1m2 0h1m6 0h1m23 0h1m16 0h1m5 0h1m37 0h1m8 0h1m2 0h1M30 64.5h1m55 0h1m10 0h1m89 0h1m1 0h2m1 0h2m2 0h1m7 0h1m1 0h1m17 0h2m4 0h1m1 0h1m12 0h1m7 0h1m2 0h2m31 0h1m8 0h2m4 0h1m2 0h2M41 65.5h1m1 0h1m46 0h1m7 0h1m1 0h1m44 0h1m33 0h1m9 0h2m2 0h1m2 0h1m1 0h1m1 0h2m1 0h2m1 0h1m12 0h1m7 0h1m2 0h1m3 0h1m1 0h1m4 0h1m6 0h1m3 0h1m4 0h2m34 0h1m2 0h1m2 0h4m6 0h1m25 0h1m71 0h1M21 66.5h1m17 0h1m7 0h2m32 0h1m17 0h1m89 0h1m2 0h2m1 0h2m8 0h1m13 0h1m4 0h1m4 0h1m2 0h1m7 0h1m2 0h1m3 0h2m3 0h1m2 0h2m32 0h1m2 0h1m1 0h1m2 0h4m4 0h1m2 0h2m75 0h1M18 67.5h1m14 0h1m1 0h1m2 0h1m41 0h1m2 0h1m8 0h2m7 0h2m24 0h1m51 0h2m7 0h1m2 0h3m1 0h3m1 0h2m1 0h3m8 0h1m9 0h1m3 0h1m1 0h1m6 0h1m3 0h1m2 0h1m2 0h2m4 0h1m18 0h1m17 0h1m1 0h1m2 0h2m1 0h1m3 0h1m3 0h1m1 0h2m1 0h1M21 68.5h1m5 0h1m2 0h1m11 0h1m1 0h1m2 0h1m2 0h1m28 0h2m5 0h1m2 0h1m1 0h1m1 0h1m3 0h1m72 0h1m5 0h1m5 0h1m1 0h1m1 0h3m1 0h3m1 0h2m1 0h4m1 0h1m2 0h1m17 0h1m3 0h1m1 0h2m1 0h3m1 0h2m1 0h1m1 0h2m1 0h3m3 0h1m3 0h1m29 0h1m10 0h1m5 0h1m1 0h4m1 0h3m51 0h1M21 69.5h1m7 0h1m2 0h1m4 0h2m1 0h2m2 0h1m1 0h1m3 0h1m26 0h1m9 0h1m6 0h1m3 0h1m87 0h2m1 0h1m1 0h4m2 0h1m5 0h1m3 0h1m14 0h1m1 0h1m1 0h1m2 0h1m1 0h3m2 0h1m3 0h1m4 0h2m1 0h3m1 0h1m5 0h1m12 0h1m14 0h1m3 0h1m4 0h1m4 0h4m1 0h2m2 0h2m25 0h1m6 0h1M17 70.5h1m1 0h1m1 0h5m2 0h1m1 0h1m4 0h1m2 0h2m1 0h1m2 0h1m34 0h1m4 0h1m3 0h1m64 0h1m25 0h2m4 0h9m2 0h2m2 0h2m1 0h1m2 0h1m11 0h1m5 0h1m2 0h2m1 0h1m1 0h1m2 0h2m3 0h2m6 0h1m2 0h1m2 0h1m1 0h1m1 0h1m30 0h2m7 0h1m1 0h1m3 0h2m4 0h1m28 0h1m2 0h1M15 71.5h1m7 0h2m10 0h2m1 0h1m1 0h1m5 0h1m1 0h1m1 0h1m27 0h2m6 0h1m4 0h1m1 0h3m3 0h1m1 0h1m40 0h1m6 0h1m17 0h1m13 0h4m1 0h3m1 0h2m2 0h2m1 0h8m1 0h1m8 0h1m2 0h1m1 0h2m7 0h1m1 0h2m1 0h1m3 0h6m1 0h1m1 0h4m1 0h1m1 0h1m1 0h1m1 0h2m26 0h1m1 0h2m3 0h1m1 0h1m1 0h1m1 0h10m1 0h1m26 0h1m76 0h1M21 72.5h1m7 0h1m1 0h2m1 0h1m3 0h4m2 0h4m1 0h1m27 0h1m6 0h3m1 0h2m1 0h1m1 0h1m2 0h2m1 0h1m1 0h2m28 0h2m11 0h1m4 0h1m23 0h1m4 0h1m3 0h1m2 0h1m2 0h1m1 0h1m1 0h8m2 0h3m2 0h1m7 0h1m8 0h2m1 0h2m1 0h1m1 0h4m1 0h1m1 0h1m2 0h1m1 0h2m3 0h1m1 0h1m2 0h5m28 0h1m3 0h1m2 0h1m2 0h1m4 0h1m1 0h3m2 0h1m1 0h1m26 0h1m8 0h1m4 0h1M23 73.5h3m2 0h1m1 0h3m2 0h1m1 0h3m4 0h1m1 0h3m28 0h2m2 0h1m2 0h1m1 0h4m1 0h2m1 0h1m4 0h1m1 0h1m41 0h1m1 0h3m16 0h1m12 0h1m1 0h3m1 0h2m1 0h2m1 0h1m1 0h1m1 0h1m1 0h10m1 0h1m4 0h1m4 0h2m7 0h2m1 0h4m1 0h1m2 0h1m5 0h2m4 0h1m1 0h4m1 0h2m1 0h1m24 0h2m1 0h3m2 0h1m1 0h1m2 0h2m1 0h1m4 0h8m19 0h1m11 0h1m5 0h1m9 0h1M14 74.5h3m3 0h1m2 0h1m1 0h2m4 0h5m1 0h1m2 0h3m2 0h1m1 0h1m3 0h1m24 0h2m2 0h1m3 0h4m5 0h4m1 0h1m1 0h3m19 0h1m6 0h1m7 0h1m9 0h1m2 0h1m27 0h2m1 0h1m1 0h6m1 0h1m1 0h4m1 0h2m2 0h7m13 0h2m4 0h1m4 0h1m3 0h2m2 0h5m2 0h2m3 0h2m2 0h3m14 0h1m2 0h1m1 0h1m3 0h1m3 0h1m1 0h1m1 0h4m1 0h4m3 0h4m1 0h2m1 0h1m31 0h1m18 0h1M13 75.5h1m1 0h1m3 0h1m1 0h2m2 0h1m2 0h1m1 0h2m2 0h5m2 0h1m28 0h1m1 0h1m2 0h1m4 0h1m2 0h3m1 0h1m2 0h1m1 0h3m3 0h6m32 0h1m1 0h1m1 0h1m9 0h1m19 0h1m8 0h2m1 0h1m1 0h4m1 0h2m3 0h2m1 0h5m1 0h3m8 0h1m2 0h3m7 0h2m9 0h1m1 0h2m4 0h2m2 0h1m1 0h1m3 0h1m18 0h1m8 0h2m1 0h6m2 0h6m1 0h1m2 0h7m27 0h1m64 0h1M3 76.5h1m3 0h1m5 0h1m1 0h1m1 0h1m3 0h1m1 0h1m2 0h3m2 0h2m1 0h3m4 0h4m2 0h2m28 0h1m3 0h1m1 0h2m4 0h1m1 0h1m1 0h1m4 0h1m1 0h3m25 0h1m4 0h1m2 0h1m16 0h1m13 0h1m2 0h1m5 0h1m1 0h1m1 0h1m1 0h6m3 0h3m2 0h1m2 0h2m2 0h5m11 0h2m1 0h1m1 0h3m4 0h2m1 0h1m3 0h1m1 0h1m1 0h7m1 0h3m1 0h2m1 0h1m21 0h3m5 0h3m1 0h1m3 0h1m2 0h1m2 0h1m1 0h3m1 0h3m1 0h1m36 0h1m53 0h1M14 77.5h1m2 0h1m1 0h2m1 0h3m3 0h2m1 0h1m1 0h3m1 0h1m2 0h1m2 0h1m2 0h1m1 0h2m21 0h1m3 0h1m3 0h1m4 0h2m1 0h2m3 0h1m2 0h2m1 0h4m22 0h1m14 0h1m1 0h1m20 0h1m8 0h1m5 0h1m2 0h4m3 0h2m3 0h4m3 0h1m1 0h1m1 0h5m4 0h2m3 0h1m1 0h1m2 0h1m2 0h1m1 0h1m1 0h1m3 0h1m6 0h1m3 0h1m2 0h10m1 0h1m19 0h1m2 0h1m1 0h1m1 0h3m1 0h1m2 0h2m1 0h9m1 0h2m1 0h2m26 0h1m20 0h1m5 0h1m38 0h1m9 0h2M6 78.5h1m8 0h1m3 0h1m1 0h1m4 0h6m1 0h7m1 0h2m5 0h4m24 0h2m2 0h2m1 0h2m1 0h5m1 0h4m1 0h1m3 0h3m21 0h1m2 0h1m24 0h2m10 0h1m2 0h1m6 0h4m3 0h4m1 0h1m1 0h1m4 0h4m1 0h1m2 0h4m1 0h1m5 0h1m3 0h2m1 0h2m2 0h2m2 0h1m1 0h1m3 0h2m1 0h2m3 0h1m2 0h3m1 0h3m2 0h1m2 0h1m16 0h2m1 0h1m4 0h1m1 0h1m3 0h4m2 0h2m1 0h1m1 0h1m3 0h2m1 0h2m1 0h3m27 0h2m1 0h1m1 0h2m6 0h1m4 0h1M1 79.5h1m14 0h1m1 0h1m2 0h2m1 0h1m2 0h1m1 0h3m1 0h2m5 0h1m5 0h2m12 0h1m8 0h2m1 0h3m6 0h3m4 0h5m3 0h4m1 0h2m14 0h2m2 0h1m3 0h1m7 0h2m2 0h1m5 0h1m8 0h1m17 0h1m1 0h1m2 0h3m1 0h2m2 0h7m1 0h2m1 0h1m4 0h6m2 0h1m6 0h1m2 0h2m2 0h3m1 0h1m1 0h1m2 0h1m8 0h2m1 0h1m5 0h1m1 0h1m1 0h2m2 0h1m1 0h1m12 0h1m5 0h3m2 0h1m1 0h1m1 0h5m2 0h9m1 0h1m1 0h4m1 0h1m39 0h2M11 80.5h1m3 0h1m6 0h1m1 0h1m3 0h4m1 0h4m2 0h3m3 0h1m1 0h2m2 0h1m9 0h1m4 0h2m9 0h1m3 0h1m4 0h1m2 0h5m1 0h1m1 0h1m2 0h1m1 0h1m66 0h1m4 0h5m1 0h2m3 0h4m1 0h1m1 0h5m1 0h3m1 0h4m1 0h1m5 0h1m4 0h1m3 0h1m2 0h1m6 0h1m1 0h1m4 0h3m1 0h3m1 0h1m3 0h1m1 0h3m1 0h1m1 0h1m17 0h1m4 0h1m2 0h1m2 0h1m2 0h2m1 0h2m1 0h1m1 0h2m2 0h2m2 0h2m1 0h1m31 0h1m7 0h1m58 0h1m1 0h2M16 81.5h1m1 0h1m4 0h1m1 0h3m1 0h2m1 0h1m2 0h1m2 0h1m1 0h2m1 0h8m19 0h1m10 0h1m2 0h3m1 0h1m1 0h13m26 0h1m3 0h1m9 0h1m1 0h1m5 0h1m11 0h1m2 0h1m2 0h2m2 0h1m2 0h1m3 0h11m1 0h5m7 0h1m1 0h1m4 0h1m2 0h2m1 0h1m1 0h2m1 0h3m2 0h1m4 0h1m1 0h2m1 0h1m1 0h4m1 0h1m1 0h1m1 0h4m1 0h1m1 0h2m1 0h1m11 0h1m6 0h1m6 0h1m1 0h2m1 0h3m1 0h10m1 0h2m2 0h4m23 0h1m7 0h1m17 0h2m18 0h1m7 0h1m2 0h1m9 0h1m2 0h1m7 0h2M10 82.5h2m1 0h1m6 0h1m1 0h1m2 0h5m1 0h5m3 0h1m2 0h1m3 0h5m10 0h1m1 0h1m1 0h1m1 0h1m6 0h1m3 0h2m1 0h2m1 0h2m1 0h4m1 0h10m32 0h1m10 0h1m6 0h1m17 0h1m4 0h1m1 0h6m1 0h3m1 0h1m1 0h2m1 0h8m1 0h4m1 0h1m5 0h1m7 0h1m1 0h1m1 0h2m1 0h1m1 0h2m4 0h2m1 0h1m2 0h2m1 0h2m1 0h9m1 0h1m14 0h1m1 0h1m3 0h1m7 0h1m3 0h3m1 0h1m1 0h1m1 0h1m1 0h1m1 0h5m1 0h3m35 0h1m2 0h1m47 0h1m8 0h1m6 0h1M13 83.5h2m1 0h1m2 0h1m2 0h1m4 0h1m7 0h1m1 0h1m2 0h2m1 0h1m4 0h1m18 0h2m5 0h1m2 0h1m1 0h1m5 0h4m1 0h4m1 0h3m1 0h2m1 0h1m35 0h1m7 0h2m1 0h1m7 0h1m11 0h1m2 0h2m5 0h1m3 0h1m1 0h3m1 0h3m1 0h2m1 0h4m1 0h1m2 0h2m7 0h1m4 0h1m1 0h4m2 0h1m2 0h4m2 0h1m1 0h1m4 0h2m1 0h1m2 0h2m3 0h1m1 0h4m12 0h1m3 0h2m10 0h1m2 0h3m1 0h2m1 0h5m1 0h4m1 0h4m20 0h1m10 0h1m6 0h1m6 0h2m47 0h1M12 84.5h1m2 0h5m1 0h5m4 0h1m1 0h1m4 0h2m4 0h1m1 0h1m3 0h1m18 0h2m1 0h1m1 0h1m1 0h4m1 0h1m1 0h1m1 0h4m1 0h4m1 0h5m1 0h3m18 0h1m20 0h1m6 0h2m19 0h1m5 0h2m1 0h2m1 0h7m1 0h4m1 0h5m2 0h2m12 0h2m1 0h2m3 0h1m1 0h1m2 0h1m1 0h1m1 0h2m1 0h1m1 0h1m2 0h2m1 0h1m1 0h2m1 0h4m1 0h1m1 0h4m13 0h1m2 0h1m2 0h1m2 0h3m3 0h2m1 0h1m2 0h1m1 0h3m1 0h5m1 0h6m83 0h1m11 0h2M14 85.5h3m1 0h1m2 0h1m1 0h1m4 0h2m3 0h2m1 0h3m1 0h2m2 0h7m10 0h1m2 0h2m1 0h1m7 0h2m2 0h1m3 0h1m1 0h3m1 0h5m1 0h1m2 0h1m1 0h1m38 0h1m2 0h1m4 0h1m2 0h1m1 0h1m6 0h1m10 0h1m2 0h1m1 0h1m1 0h1m2 0h2m1 0h1m2 0h3m2 0h3m3 0h2m3 0h1m1 0h2m1 0h1m11 0h1m2 0h1m1 0h1m1 0h3m2 0h3m2 0h1m2 0h3m3 0h3m1 0h2m1 0h1m1 0h1m1 0h2m14 0h1m1 0h1m5 0h6m2 0h1m2 0h5m1 0h8m1 0h4m30 0h1m5 0h1m15 0h1m23 0h2m10 0h1m3 0h1m7 0h2M18 86.5h2m1 0h1m4 0h1m1 0h6m2 0h1m1 0h3m1 0h1m2 0h1m1 0h1m1 0h1m4 0h1m8 0h1m6 0h2m1 0h3m2 0h1m1 0h1m1 0h9m2 0h3m1 0h4m1 0h1m25 0h1m7 0h1m5 0h1m5 0h2m2 0h1m1 0h1m15 0h1m2 0h1m2 0h4m1 0h5m2 0h1m1 0h3m1 0h2m1 0h7m2 0h1m4 0h1m3 0h1m1 0h1m1 0h1m3 0h4m1 0h5m6 0h2m2 0h1m1 0h1m1 0h2m2 0h2m1 0h2m2 0h2m17 0h1m4 0h1m1 0h1m1 0h9m1 0h6m1 0h9m16 0h1m20 0h1m1 0h1m26 0h1m16 0h2m11 0h1M9 87.5h1m3 0h1m2 0h2m2 0h1m4 0h2m1 0h1m1 0h4m2 0h3m1 0h2m1 0h1m2 0h1m1 0h3m19 0h1m5 0h1m1 0h1m2 0h6m2 0h3m1 0h3m1 0h1m3 0h1m1 0h1m13 0h1m4 0h1m10 0h1m2 0h1m1 0h1m7 0h1m2 0h1m4 0h1m3 0h1m1 0h1m4 0h2m2 0h1m2 0h5m2 0h1m1 0h1m1 0h2m1 0h11m2 0h6m7 0h1m1 0h1m2 0h1m2 0h2m1 0h2m1 0h2m1 0h2m2 0h1m3 0h2m1 0h1m1 0h8m1 0h7m1 0h1m15 0h1m2 0h1m2 0h4m1 0h3m1 0h11m1 0h1m1 0h1m2 0h4m19 0h1m13 0h1m48 0h1M9 88.5h2m6 0h2m1 0h1m2 0h2m5 0h1m1 0h1m3 0h4m1 0h2m3 0h2m15 0h1m9 0h1m1 0h1m1 0h1m1 0h1m2 0h3m1 0h1m1 0h5m2 0h5m1 0h3m25 0h1m11 0h1m1 0h1m8 0h1m12 0h1m2 0h1m1 0h1m4 0h1m2 0h1m2 0h6m2 0h2m1 0h2m1 0h3m2 0h3m4 0h1m2 0h1m5 0h2m2 0h1m1 0h2m1 0h4m2 0h1m1 0h1m1 0h20m2 0h3m18 0h1m2 0h3m1 0h1m1 0h4m1 0h10m5 0h4m33 0h1m52 0h1m1 0h1m5 0h1M1 89.5h1m4 0h1m11 0h1m2 0h1m1 0h1m2 0h1m3 0h1m1 0h1m2 0h1m3 0h3m2 0h4m21 0h1m1 0h1m5 0h3m1 0h6m1 0h3m1 0h1m1 0h3m3 0h1m2 0h1m12 0h1m5 0h1m9 0h2m5 0h1m2 0h1m1 0h1m2 0h1m2 0h1m1 0h1m25 0h6m1 0h1m2 0h5m1 0h1m2 0h3m2 0h1m2 0h1m1 0h1m15 0h3m1 0h2m4 0h2m1 0h3m1 0h3m1 0h1m1 0h1m1 0h8m1 0h1m12 0h2m1 0h1m7 0h1m1 0h2m3 0h2m1 0h8m1 0h2m1 0h1m1 0h1m1 0h5m21 0h1m56 0h1m6 0h2m5 0h1M15 90.5h1m1 0h1m1 0h2m4 0h1m2 0h1m2 0h1m3 0h1m1 0h2m2 0h3m2 0h2m18 0h1m1 0h1m1 0h1m1 0h1m2 0h4m2 0h1m2 0h3m1 0h11m1 0h1m2 0h1m15 0h1m7 0h1m6 0h1m2 0h1m9 0h3m2 0h2m11 0h1m10 0h1m4 0h3m1 0h7m1 0h1m1 0h3m2 0h1m4 0h3m3 0h1m2 0h1m2 0h3m2 0h7m2 0h1m1 0h9m1 0h2m1 0h1m1 0h2m2 0h6m1 0h1m13 0h1m3 0h1m5 0h3m2 0h16m1 0h6m20 0h1m15 0h2m10 0h1m20 0h1m4 0h1M11 91.5h1m1 0h1m1 0h1m1 0h2m3 0h4m2 0h1m1 0h1m1 0h1m1 0h5m5 0h2m3 0h2m5 0h1m6 0h1m4 0h1m1 0h1m2 0h2m1 0h2m2 0h4m1 0h13m1 0h1m1 0h1m1 0h1m12 0h1m8 0h2m8 0h1m9 0h1m4 0h1m6 0h1m9 0h2m1 0h1m4 0h1m3 0h3m1 0h3m2 0h1m1 0h7m2 0h1m2 0h1m1 0h1m1 0h2m10 0h1m1 0h1m3 0h1m3 0h3m1 0h6m1 0h1m1 0h2m1 0h6m1 0h3m1 0h2m2 0h1m7 0h2m1 0h2m2 0h1m4 0h1m1 0h2m2 0h3m1 0h1m4 0h8m1 0h2m1 0h1m3 0h1m98 0h1M11 92.5h1m2 0h2m4 0h2m1 0h2m1 0h2m1 0h1m1 0h1m2 0h1m1 0h4m2 0h2m3 0h3m3 0h1m12 0h2m3 0h2m1 0h4m2 0h7m1 0h6m1 0h3m1 0h5m11 0h1m12 0h1m15 0h1m4 0h1m12 0h1m9 0h1m2 0h4m2 0h1m1 0h2m1 0h1m1 0h4m1 0h2m1 0h2m1 0h1m2 0h1m2 0h1m1 0h1m2 0h1m9 0h2m1 0h1m3 0h1m1 0h3m3 0h1m1 0h5m2 0h1m4 0h4m2 0h2m1 0h1m10 0h2m4 0h1m3 0h2m2 0h2m1 0h3m1 0h1m1 0h1m1 0h2m1 0h2m2 0h6m1 0h3m13 0h1m14 0h1m3 0h1m3 0h1m15 0h1m23 0h1m1 0h1m8 0h1m6 0h1m7 0h1M7 93.5h1m2 0h1m1 0h1m1 0h2m2 0h4m1 0h1m1 0h2m2 0h1m2 0h2m1 0h1m3 0h1m1 0h1m1 0h1m1 0h4m2 0h1m12 0h1m2 0h1m2 0h2m3 0h1m3 0h4m3 0h3m1 0h5m3 0h5m28 0h1m4 0h1m5 0h1m3 0h1m13 0h1m2 0h4m6 0h1m1 0h2m1 0h1m3 0h5m1 0h1m1 0h4m1 0h1m1 0h2m2 0h2m2 0h3m13 0h1m1 0h1m2 0h1m1 0h1m1 0h2m1 0h3m3 0h1m1 0h2m1 0h3m3 0h1m1 0h5m32 0h3m5 0h1m1 0h3m1 0h3m1 0h1m1 0h2m24 0h1m12 0h1m4 0h2m19 0h1m31 0h1M1 94.5h1m10 0h1m2 0h1m1 0h1m1 0h2m1 0h1m2 0h2m2 0h4m1 0h1m1 0h1m1 0h1m1 0h2m2 0h3m1 0h1m1 0h1m7 0h1m1 0h1m2 0h1m6 0h1m1 0h2m2 0h3m2 0h2m3 0h1m2 0h2m1 0h2m1 0h1m3 0h1m1 0h1m25 0h1m4 0h1m5 0h1m9 0h1m1 0h1m3 0h1m4 0h1m10 0h4m4 0h1m3 0h1m1 0h5m2 0h5m4 0h1m3 0h4m6 0h1m8 0h1m1 0h1m4 0h3m2 0h1m2 0h1m1 0h8m2 0h1m6 0h2m9 0h1m10 0h3m1 0h2m4 0h1m1 0h1m3 0h4m1 0h3m2 0h1m2 0h3m3 0h1m24 0h1m20 0h1m50 0h1M8 95.5h1m4 0h2m2 0h2m7 0h6m2 0h1m1 0h2m1 0h1m2 0h1m3 0h5m6 0h1m9 0h1m2 0h1m2 0h1m2 0h3m1 0h1m2 0h1m1 0h1m1 0h4m1 0h1m1 0h4m2 0h1m2 0h1m17 0h1m8 0h1m9 0h1m3 0h1m22 0h1m2 0h3m1 0h1m2 0h2m2 0h3m1 0h3m1 0h3m2 0h1m4 0h1m2 0h1m4 0h2m4 0h1m7 0h2m2 0h5m5 0h5m3 0h1m1 0h2m1 0h4m1 0h1m1 0h4m2 0h1m10 0h1m6 0h1m6 0h1m1 0h1m1 0h6m1 0h4m1 0h1m1 0h1m1 0h3m1 0h2m9 0h1m26 0h1m6 0h1m39 0h1m4 0h1m2 0h1m3 0h1m3 0h1m1 0h1M13 96.5h1m1 0h1m5 0h3m1 0h3m2 0h2m1 0h6m3 0h5m8 0h1m1 0h1m3 0h1m1 0h2m4 0h3m4 0h7m3 0h4m4 0h3m1 0h1m1 0h2m1 0h1m7 0h1m12 0h1m6 0h1m10 0h1m3 0h4m1 0h1m14 0h1m2 0h1m2 0h7m1 0h1m1 0h5m5 0h1m1 0h3m1 0h2m1 0h2m3 0h2m8 0h2m6 0h7m3 0h4m1 0h1m1 0h3m2 0h2m2 0h1m1 0h6m1 0h1m15 0h1m3 0h2m1 0h1m1 0h10m1 0h1m3 0h2m2 0h6m1 0h1m5 0h1m44 0h1m19 0h1m24 0h1m1 0h1M13 97.5h1m1 0h2m2 0h4m4 0h4m1 0h1m1 0h8m1 0h2m2 0h3m5 0h1m11 0h2m2 0h1m1 0h1m1 0h2m3 0h3m1 0h1m1 0h4m1 0h5m2 0h1m1 0h1m17 0h1m9 0h1m1 0h1m3 0h1m15 0h2m11 0h1m3 0h1m1 0h1m1 0h1m1 0h8m1 0h4m1 0h1m1 0h5m1 0h1m1 0h1m1 0h1m2 0h1m1 0h1m1 0h2m4 0h1m4 0h3m1 0h2m1 0h1m2 0h1m1 0h1m1 0h2m2 0h1m2 0h4m5 0h2m1 0h2m2 0h3m2 0h1m6 0h1m4 0h1m7 0h2m5 0h1m1 0h2m1 0h1m1 0h1m1 0h1m1 0h1m3 0h5m1 0h3m1 0h1m35 0h1m2 0h1m5 0h1m5 0h1m15 0h1m7 0h1m21 0h1m1 0h1m2 0h2M13 98.5h1m5 0h6m2 0h1m1 0h2m4 0h1m3 0h1m1 0h3m3 0h3m1 0h1m4 0h2m4 0h1m5 0h2m1 0h1m4 0h2m2 0h1m1 0h1m2 0h1m1 0h3m1 0h1m1 0h4m1 0h4m1 0h1m19 0h2m10 0h2m1 0h1m28 0h8m1 0h1m1 0h1m2 0h4m1 0h2m1 0h1m2 0h1m1 0h2m4 0h1m2 0h1m1 0h1m1 0h1m7 0h1m2 0h1m1 0h5m1 0h1m1 0h1m2 0h2m1 0h1m1 0h3m1 0h2m1 0h3m1 0h2m1 0h6m1 0h2m11 0h1m6 0h1m1 0h1m1 0h1m1 0h6m1 0h3m1 0h2m2 0h1m1 0h5m3 0h4m25 0h1m1 0h1m14 0h4m16 0h1M3 99.5h1m3 0h1m5 0h1m5 0h1m4 0h1m2 0h1m4 0h3m3 0h2m1 0h1m1 0h4m1 0h3m13 0h2m3 0h1m3 0h6m1 0h4m2 0h3m1 0h1m1 0h10m1 0h1m23 0h1m3 0h1m6 0h1m1 0h2m3 0h2m2 0h1m4 0h1m11 0h1m1 0h1m1 0h1m2 0h1m2 0h4m1 0h10m2 0h2m1 0h4m3 0h2m2 0h1m8 0h1m1 0h1m3 0h1m1 0h4m1 0h1m1 0h1m1 0h1m2 0h4m1 0h1m3 0h1m2 0h1m3 0h1m2 0h3m10 0h1m6 0h1m2 0h1m5 0h1m2 0h5m1 0h3m1 0h1m1 0h1m2 0h5m2 0h2m23 0h1m15 0h1m1 0h1m6 0h1m27 0h1m2 0h1m2 0h1m9 0h1m1 0h1M1 100.5h1m2 0h1m8 0h3m1 0h6m2 0h2m1 0h3m1 0h2m2 0h4m1 0h3m1 0h4m6 0h1m2 0h1m12 0h1m1 0h2m2 0h2m1 0h1m3 0h2m1 0h3m1 0h4m2 0h1m5 0h1m19 0h2m13 0h2m2 0h2m5 0h1m15 0h1m1 0h2m1 0h4m1 0h1m2 0h2m2 0h4m2 0h1m1 0h3m1 0h1m1 0h1m3 0h1m1 0h5m9 0h2m6 0h2m3 0h3m1 0h10m1 0h6m1 0h3m1 0h1m2 0h2m9 0h2m6 0h1m2 0h1m1 0h3m1 0h5m5 0h4m1 0h6m1 0h2m1 0h1m27 0h1m7 0h1m3 0h1m2 0h1m2 0h1m1 0h2m17 0h1m17 0h1M2 101.5h1m2 0h1m4 0h1m2 0h1m4 0h2m2 0h1m1 0h2m2 0h1m2 0h1m1 0h2m1 0h2m1 0h2m1 0h2m1 0h6m11 0h1m5 0h1m3 0h4m1 0h1m1 0h1m3 0h4m2 0h4m1 0h3m1 0h4m1 0h1m12 0h1m9 0h3m4 0h1m18 0h1m1 0h1m12 0h1m7 0h1m4 0h4m1 0h1m1 0h1m1 0h5m1 0h3m1 0h2m1 0h1m3 0h1m5 0h1m2 0h1m2 0h1m6 0h1m1 0h1m4 0h17m1 0h4m1 0h2m1 0h2m5 0h1m10 0h3m4 0h1m1 0h2m2 0h8m1 0h1m1 0h3m3 0h2m3 0h1m34 0h2m5 0h1m6 0h1m18 0h1m9 0h1m4 0h1m5 0h2m3 0h1m7 0h2M5 102.5h2m6 0h3m1 0h1m1 0h2m1 0h1m2 0h1m1 0h1m3 0h2m1 0h2m2 0h2m1 0h9m5 0h1m3 0h1m10 0h2m4 0h6m1 0h5m1 0h3m1 0h1m1 0h2m2 0h5m21 0h3m11 0h1m6 0h1m3 0h1m3 0h1m16 0h4m1 0h4m1 0h9m1 0h3m1 0h2m1 0h2m1 0h1m2 0h2m7 0h2m3 0h1m2 0h3m3 0h4m3 0h3m1 0h12m1 0h6m1 0h1m10 0h1m2 0h3m3 0h3m2 0h1m3 0h5m1 0h4m1 0h2m1 0h3m1 0h3m1 0h3m19 0h1m10 0h1m10 0h1m41 0h1m5 0h1m3 0h2M7 103.5h1m6 0h1m1 0h2m1 0h2m3 0h2m1 0h3m2 0h1m1 0h2m1 0h1m1 0h2m6 0h1m1 0h2m4 0h1m2 0h1m2 0h1m2 0h1m1 0h1m4 0h3m2 0h1m3 0h2m1 0h8m2 0h5m1 0h1m1 0h2m24 0h1m2 0h4m3 0h1m10 0h1m1 0h2m5 0h1m14 0h2m1 0h1m1 0h2m1 0h1m1 0h4m1 0h2m1 0h1m1 0h4m1 0h1m3 0h3m1 0h1m4 0h1m5 0h3m1 0h2m2 0h4m1 0h4m1 0h8m2 0h3m1 0h1m1 0h4m2 0h2m1 0h1m7 0h1m1 0h1m2 0h1m3 0h2m1 0h6m2 0h2m1 0h3m1 0h2m2 0h4m1 0h1m3 0h1m2 0h1m13 0h1m18 0h1m1 0h1m1 0h1m1 0h1m9 0h1m16 0h1m18 0h2M11 104.5h2m2 0h1m1 0h3m3 0h2m1 0h3m1 0h1m3 0h3m3 0h3m1 0h1m1 0h1m1 0h3m16 0h1m2 0h1m2 0h2m1 0h4m1 0h7m1 0h2m1 0h1m1 0h2m2 0h1m1 0h1m1 0h1m22 0h1m2 0h1m1 0h2m8 0h1m1 0h1m1 0h1m1 0h1m2 0h1m4 0h1m10 0h2m1 0h1m1 0h2m2 0h1m2 0h1m2 0h1m1 0h8m3 0h2m3 0h1m1 0h1m5 0h2m3 0h1m7 0h1m1 0h1m2 0h3m1 0h1m1 0h1m1 0h1m2 0h4m2 0h3m1 0h2m1 0h2m1 0h1m1 0h5m6 0h1m3 0h1m7 0h1m1 0h1m3 0h2m2 0h7m2 0h3m1 0h4m2 0h2m1 0h4m14 0h1m4 0h1m16 0h3m2 0h1m1 0h2m1 0h1m30 0h1m10 0h1M12 105.5h1m2 0h5m1 0h1m1 0h3m5 0h3m2 0h7m1 0h3m1 0h1m1 0h2m6 0h1m2 0h1m2 0h3m1 0h1m2 0h1m1 0h1m3 0h2m1 0h11m1 0h2m1 0h1m1 0h4m2 0h1m23 0h1m7 0h1m2 0h2m4 0h1m3 0h1m1 0h1m1 0h2m7 0h1m1 0h1m2 0h1m1 0h2m2 0h1m3 0h1m1 0h2m1 0h3m1 0h1m1 0h5m1 0h2m2 0h1m3 0h3m1 0h1m1 0h1m5 0h2m2 0h1m2 0h3m1 0h3m1 0h1m2 0h10m2 0h5m1 0h2m1 0h8m11 0h1m3 0h1m7 0h5m1 0h2m1 0h3m2 0h1m1 0h3m1 0h3m2 0h2m1 0h1m31 0h1m2 0h1m51 0h1m2 0h1m1 0h1M9 106.5h1m2 0h1m2 0h2m1 0h2m1 0h3m2 0h1m1 0h2m1 0h6m2 0h2m1 0h2m2 0h3m1 0h1m9 0h1m1 0h1m6 0h3m1 0h6m1 0h1m2 0h3m1 0h1m2 0h2m3 0h1m3 0h2m1 0h2m21 0h1m2 0h2m4 0h1m7 0h1m2 0h1m6 0h2m5 0h1m2 0h1m2 0h1m2 0h1m2 0h9m3 0h2m2 0h4m1 0h1m1 0h2m2 0h1m1 0h1m1 0h2m1 0h1m1 0h1m8 0h1m2 0h4m2 0h2m1 0h3m3 0h1m1 0h6m1 0h3m1 0h1m1 0h4m1 0h2m1 0h3m1 0h1m7 0h2m5 0h3m1 0h2m3 0h1m2 0h1m1 0h1m1 0h1m1 0h2m1 0h10m1 0h3m17 0h1m2 0h1m3 0h1m21 0h2m18 0h1m3 0h1m4 0h1m1 0h1m10 0h1M13 107.5h3m1 0h1m1 0h3m1 0h1m3 0h1m4 0h5m1 0h1m1 0h12m10 0h2m1 0h1m3 0h3m2 0h7m1 0h6m1 0h3m1 0h1m2 0h1m1 0h5m17 0h1m9 0h1m1 0h1m3 0h1m3 0h1m3 0h1m4 0h1m1 0h1m4 0h1m8 0h1m2 0h1m2 0h1m2 0h3m1 0h2m1 0h8m1 0h1m1 0h1m3 0h4m1 0h2m1 0h1m2 0h1m3 0h2m1 0h6m4 0h6m3 0h6m1 0h2m1 0h5m1 0h10m15 0h3m1 0h1m3 0h3m3 0h7m3 0h1m1 0h4m1 0h2m2 0h2m22 0h1m16 0h1m5 0h1m2 0h1m1 0h1m9 0h1m3 0h1m1 0h2m3 0h1m19 0h1m1 0h1M14 108.5h1m3 0h1m2 0h1m2 0h3m2 0h5m1 0h2m2 0h5m1 0h6m5 0h1m6 0h1m6 0h1m3 0h3m1 0h5m3 0h1m1 0h2m1 0h5m1 0h1m5 0h1m11 0h1m13 0h2m4 0h1m6 0h1m7 0h1m12 0h1m5 0h4m1 0h8m1 0h11m3 0h5m4 0h2m5 0h1m4 0h1m2 0h1m5 0h4m1 0h2m2 0h2m1 0h1m1 0h1m2 0h4m2 0h2m3 0h1m1 0h3m9 0h1m1 0h2m3 0h1m2 0h1m3 0h7m2 0h5m1 0h14m22 0h1m25 0h1m1 0h2m22 0h1m5 0h2m2 0h1m5 0h2M14 109.5h1m1 0h1m1 0h3m1 0h3m3 0h1m1 0h6m1 0h3m1 0h1m2 0h1m1 0h2m1 0h2m20 0h1m1 0h1m1 0h3m1 0h1m1 0h2m2 0h1m1 0h1m3 0h4m1 0h1m3 0h1m14 0h2m9 0h1m1 0h1m5 0h1m14 0h1m1 0h1m16 0h3m2 0h1m1 0h1m1 0h3m3 0h2m1 0h1m1 0h5m1 0h2m1 0h1m5 0h2m1 0h2m3 0h1m3 0h1m2 0h1m6 0h3m1 0h3m1 0h1m3 0h6m1 0h10m2 0h1m2 0h1m10 0h1m2 0h1m4 0h3m1 0h1m1 0h1m5 0h3m3 0h1m1 0h1m1 0h1m3 0h1m1 0h1m2 0h1m1 0h1m29 0h1m9 0h4m2 0h1m1 0h1m20 0h1m1 0h1m15 0h3m7 0h1m1 0h1M7 110.5h1m5 0h3m3 0h4m3 0h6m1 0h2m2 0h5m1 0h8m12 0h3m1 0h1m8 0h1m1 0h1m2 0h1m1 0h4m1 0h1m2 0h9m3 0h1m36 0h1m3 0h1m1 0h1m5 0h1m7 0h2m1 0h1m3 0h2m7 0h12m1 0h2m3 0h1m1 0h1m1 0h1m5 0h1m2 0h1m7 0h1m1 0h1m2 0h7m1 0h2m1 0h2m1 0h2m1 0h1m1 0h4m1 0h2m2 0h5m1 0h4m1 0h1m5 0h1m12 0h1m2 0h3m1 0h1m1 0h3m1 0h7m1 0h1m4 0h3m2 0h1m1 0h1m24 0h1m6 0h1m5 0h1m1 0h1m2 0h1m4 0h1m1 0h1m35 0h1m2 0h1m1 0h1m5 0h1m1 0h1m1 0h1m1 0h1M5 111.5h1m9 0h3m1 0h7m2 0h1m3 0h3m1 0h1m4 0h2m1 0h1m3 0h4m16 0h2m2 0h1m1 0h3m1 0h5m2 0h2m1 0h3m1 0h4m5 0h1m1 0h1m11 0h1m9 0h1m16 0h1m1 0h1m7 0h3m6 0h1m3 0h2m6 0h2m1 0h2m1 0h2m1 0h1m3 0h3m2 0h11m3 0h3m2 0h2m3 0h2m1 0h1m3 0h8m1 0h4m1 0h2m1 0h1m1 0h2m1 0h3m1 0h1m2 0h4m3 0h1m16 0h1m6 0h2m2 0h5m3 0h6m1 0h4m1 0h1m1 0h4m32 0h1m13 0h1m2 0h1m30 0h1m13 0h1M1 112.5h1m3 0h2m5 0h2m2 0h2m1 0h5m1 0h5m2 0h1m1 0h1m1 0h8m1 0h2m1 0h2m1 0h1m7 0h1m2 0h2m1 0h1m1 0h2m1 0h1m4 0h1m2 0h3m1 0h1m1 0h1m2 0h2m1 0h1m2 0h2m3 0h1m2 0h3m12 0h1m9 0h1m2 0h1m2 0h1m5 0h1m4 0h1m7 0h1m6 0h1m5 0h3m1 0h1m2 0h4m2 0h1m1 0h3m1 0h1m1 0h2m1 0h4m1 0h1m1 0h4m3 0h2m1 0h1m1 0h1m9 0h1m2 0h2m1 0h3m3 0h2m1 0h3m1 0h4m1 0h2m1 0h6m1 0h2m1 0h3m1 0h2m11 0h1m2 0h1m1 0h2m1 0h1m1 0h2m2 0h3m2 0h7m1 0h2m1 0h2m3 0h1m1 0h4m15 0h1m3 0h1m3 0h1m9 0h1m2 0h2m1 0h1m4 0h1m4 0h1m40 0h2m3 0h1M2 113.5h1m5 0h1m2 0h1m1 0h1m1 0h1m1 0h2m1 0h1m1 0h1m1 0h3m1 0h4m1 0h1m1 0h7m1 0h2m1 0h3m1 0h1m2 0h1m3 0h3m6 0h1m1 0h1m3 0h1m2 0h3m2 0h6m2 0h5m1 0h2m3 0h1m2 0h2m10 0h1m11 0h1m11 0h1m2 0h1m1 0h3m2 0h1m9 0h2m1 0h1m2 0h1m8 0h4m3 0h1m1 0h3m3 0h5m2 0h2m2 0h2m2 0h2m1 0h2m8 0h3m2 0h1m1 0h12m1 0h3m1 0h7m1 0h3m1 0h1m2 0h2m1 0h2m8 0h1m10 0h1m2 0h4m2 0h11m3 0h2m2 0h2m1 0h1m1 0h1m4 0h1m14 0h1m1 0h1m55 0h1m19 0h1m1 0h1M9 114.5h1m4 0h1m1 0h1m3 0h3m1 0h2m1 0h2m2 0h7m1 0h2m1 0h1m1 0h3m1 0h2m1 0h1m2 0h1m3 0h1m3 0h4m6 0h1m2 0h5m2 0h5m1 0h1m1 0h3m3 0h1m1 0h1m30 0h1m11 0h1m1 0h3m6 0h1m11 0h1m1 0h1m2 0h1m3 0h1m1 0h6m1 0h3m2 0h3m2 0h4m2 0h6m1 0h3m2 0h1m1 0h1m1 0h2m1 0h1m1 0h1m2 0h1m2 0h3m2 0h2m1 0h3m1 0h6m3 0h3m1 0h5m1 0h1m16 0h1m4 0h15m2 0h2m3 0h2m1 0h7m1 0h1m19 0h1m27 0h1m41 0h1M9 115.5h1m3 0h3m2 0h3m1 0h3m2 0h5m1 0h3m1 0h3m2 0h4m1 0h4m5 0h1m2 0h1m3 0h1m1 0h1m5 0h2m1 0h1m1 0h6m1 0h2m1 0h3m1 0h1m2 0h2m2 0h1m1 0h1m3 0h1m10 0h1m6 0h1m12 0h1m2 0h1m1 0h1m3 0h1m2 0h1m4 0h1m2 0h1m3 0h1m7 0h5m1 0h4m1 0h1m5 0h4m2 0h7m4 0h2m1 0h3m1 0h1m5 0h1m1 0h1m1 0h1m1 0h1m1 0h4m2 0h6m1 0h1m1 0h6m2 0h1m1 0h2m1 0h4m3 0h1m15 0h1m1 0h1m1 0h1m3 0h1m1 0h2m1 0h1m1 0h1m1 0h2m1 0h4m2 0h5m1 0h1m1 0h1m2 0h1m29 0h1m4 0h1m14 0h2m26 0h1m5 0h1m1 0h1m1 0h1m2 0h1m4 0h1m1 0h1m2 0h1m2 0h1M4 116.5h1m3 0h1m2 0h1m2 0h2m3 0h1m1 0h3m2 0h8m1 0h3m1 0h1m1 0h1m2 0h3m2 0h3m2 0h1m2 0h2m2 0h2m4 0h1m1 0h1m5 0h2m1 0h2m1 0h2m1 0h6m1 0h1m2 0h3m1 0h3m2 0h1m19 0h1m5 0h2m1 0h1m2 0h1m9 0h1m18 0h2m3 0h1m3 0h1m2 0h1m1 0h3m1 0h4m1 0h4m1 0h4m4 0h3m6 0h2m2 0h1m6 0h1m2 0h1m2 0h1m2 0h4m1 0h2m1 0h1m1 0h6m2 0h2m2 0h2m2 0h2m1 0h2m8 0h1m5 0h2m1 0h4m1 0h3m1 0h4m2 0h1m1 0h2m3 0h3m2 0h5m2 0h1m9 0h1m12 0h1m61 0h1m7 0h1m3 0h3m1 0h1M14 117.5h5m1 0h2m3 0h5m1 0h1m1 0h1m1 0h1m1 0h1m1 0h1m2 0h1m3 0h1m1 0h2m1 0h1m9 0h2m5 0h1m1 0h1m2 0h1m1 0h1m1 0h3m2 0h5m1 0h3m1 0h8m2 0h2m26 0h1m2 0h1m1 0h1m3 0h2m4 0h2m2 0h2m7 0h1m11 0h1m2 0h1m2 0h5m1 0h6m1 0h4m2 0h6m2 0h2m2 0h1m2 0h1m2 0h4m1 0h4m1 0h2m1 0h4m2 0h3m3 0h1m1 0h9m1 0h2m3 0h2m1 0h2m11 0h3m2 0h1m4 0h1m2 0h1m2 0h1m2 0h1m1 0h5m3 0h1m1 0h2m3 0h3m1 0h1m30 0h1m43 0h1m5 0h1m9 0h1m6 0h1m4 0h1M9 118.5h5m2 0h2m1 0h3m4 0h4m1 0h1m2 0h3m1 0h1m1 0h3m1 0h2m1 0h1m1 0h2m7 0h1m2 0h1m6 0h1m6 0h1m4 0h2m1 0h1m1 0h2m1 0h1m1 0h2m4 0h3m2 0h3m25 0h1m5 0h3m3 0h1m1 0h1m1 0h6m7 0h1m1 0h2m1 0h1m2 0h2m1 0h3m2 0h1m2 0h2m1 0h2m1 0h1m1 0h5m2 0h5m2 0h3m1 0h1m2 0h2m6 0h1m2 0h7m1 0h2m1 0h1m1 0h3m1 0h1m1 0h2m1 0h4m1 0h3m1 0h5m1 0h5m7 0h1m6 0h2m2 0h4m1 0h3m1 0h2m1 0h6m1 0h1m2 0h2m1 0h3m2 0h3m1 0h1m29 0h3m3 0h1m29 0h1m12 0h1m1 0h1m3 0h1m1 0h2m1 0h1m4 0h1m4 0h1M4 119.5h1m6 0h2m2 0h1m1 0h6m1 0h5m4 0h3m1 0h6m3 0h1m3 0h2m4 0h1m5 0h1m1 0h2m5 0h1m1 0h2m2 0h2m2 0h1m3 0h6m1 0h1m2 0h1m2 0h3m1 0h2m27 0h1m2 0h1m1 0h1m1 0h1m2 0h1m3 0h2m1 0h1m2 0h1m1 0h1m4 0h1m1 0h1m4 0h1m4 0h1m1 0h3m4 0h3m4 0h3m4 0h2m1 0h1m3 0h4m1 0h1m1 0h1m6 0h1m2 0h4m3 0h5m2 0h1m1 0h1m1 0h1m1 0h1m2 0h2m1 0h6m2 0h1m1 0h7m4 0h1m3 0h1m3 0h1m1 0h1m1 0h1m1 0h1m1 0h1m4 0h1m5 0h4m1 0h2m2 0h2m2 0h2m2 0h4m15 0h1m1 0h1m1 0h2m3 0h2m9 0h1m3 0h1m10 0h1m39 0h1m3 0h1m4 0h2M1 120.5h1m10 0h1m1 0h2m1 0h7m2 0h1m1 0h2m2 0h3m3 0h1m1 0h1m1 0h1m1 0h3m1 0h4m3 0h2m7 0h1m1 0h1m2 0h1m1 0h2m2 0h2m1 0h1m1 0h2m1 0h1m1 0h2m3 0h2m1 0h2m1 0h2m2 0h1m1 0h2m17 0h1m6 0h2m2 0h5m8 0h4m1 0h3m5 0h1m5 0h1m2 0h1m3 0h1m1 0h3m2 0h2m1 0h1m1 0h3m3 0h1m3 0h4m1 0h1m2 0h2m1 0h1m1 0h2m9 0h3m1 0h1m2 0h3m1 0h1m4 0h2m1 0h2m1 0h2m1 0h3m1 0h1m1 0h2m7 0h1m8 0h1m9 0h4m2 0h1m2 0h1m2 0h3m1 0h3m2 0h9m1 0h1m1 0h1m1 0h1m4 0h1m18 0h1m6 0h1m3 0h1m6 0h1m4 0h1m24 0h1m3 0h1m1 0h2m2 0h1m2 0h1m5 0h2m1 0h1m1 0h1m4 0h2M1 121.5h1m3 0h1m8 0h3m2 0h11m1 0h8m3 0h2m3 0h1m1 0h2m4 0h1m5 0h1m4 0h1m2 0h3m1 0h2m1 0h2m1 0h4m1 0h4m1 0h2m1 0h2m1 0h1m3 0h5m18 0h1m4 0h1m1 0h2m4 0h1m1 0h1m8 0h2m4 0h1m1 0h1m1 0h1m6 0h1m13 0h2m1 0h12m1 0h1m1 0h1m1 0h1m5 0h1m2 0h2m7 0h2m1 0h3m1 0h3m1 0h2m1 0h3m2 0h2m1 0h13m1 0h2m1 0h1m1 0h1m1 0h1m8 0h2m9 0h3m2 0h1m1 0h3m4 0h2m3 0h2m4 0h1m1 0h3m1 0h3m28 0h1m2 0h1m4 0h1m64 0h1M4 122.5h1m3 0h2m1 0h1m1 0h1m1 0h2m1 0h7m1 0h1m3 0h1m2 0h1m4 0h3m1 0h4m1 0h3m3 0h1m4 0h2m1 0h1m6 0h1m2 0h1m3 0h1m1 0h5m1 0h5m4 0h2m6 0h1m2 0h1m11 0h1m3 0h1m1 0h1m6 0h2m5 0h1m3 0h2m2 0h2m2 0h4m3 0h2m2 0h1m4 0h1m4 0h1m4 0h3m1 0h1m2 0h2m2 0h11m1 0h2m1 0h4m3 0h1m6 0h2m2 0h1m1 0h3m1 0h1m1 0h2m2 0h9m2 0h3m1 0h2m2 0h2m1 0h3m1 0h1m2 0h2m6 0h1m5 0h1m7 0h21m2 0h2m1 0h2m2 0h2m22 0h1m8 0h1m3 0h1m1 0h1m34 0h1m20 0h1m7 0h1M13 123.5h1m2 0h1m1 0h4m2 0h4m4 0h1m1 0h2m1 0h8m1 0h2m2 0h1m10 0h1m1 0h1m2 0h5m1 0h1m1 0h1m2 0h1m1 0h5m1 0h4m1 0h1m1 0h1m1 0h4m3 0h2m19 0h1m2 0h1m2 0h3m3 0h1m1 0h1m2 0h1m7 0h1m3 0h1m1 0h2m3 0h1m1 0h1m2 0h1m1 0h1m1 0h1m1 0h1m1 0h2m1 0h1m2 0h1m2 0h1m4 0h5m1 0h1m1 0h1m1 0h2m1 0h6m7 0h1m2 0h1m3 0h2m1 0h2m2 0h8m2 0h3m1 0h2m1 0h3m1 0h1m1 0h6m1 0h5m5 0h1m12 0h6m2 0h4m2 0h5m1 0h1m1 0h7m1 0h1m2 0h1m28 0h2m2 0h1m35 0h1m6 0h1m9 0h1m7 0h1m3 0h1m2 0h1"/>
<path stroke="#FFA700" d="M0 0.5h1m4 0h1m11 0h1m21 0h2m4 0h2m3 0h2m5 0h1m22 0h1m1 0h2m5 0h2m1 0h1m2 0h4m1 0h3m1 0h1m12 0h1m1 0h1m19 0h1m11 0h1m3 0h1m35 0h2m5 0h2m2 0h2m4 0h1m3 0h1m7 0h1m5 0h2m1 0h1m8 0h1m4 0h4m1 0h2m1 0h1m1 0h1m1 0h2m2 0h2m7 0h1m21 0h1m1 0h2m4 0h2m1 0h1m1 0h3m1 0h1m17 0h1m35 0h1m37 0h1m12 0h1m2 0h1M0 1.5h1m7 0h1m7 0h1m3 0h1m4 0h1m12 0h1m9 0h1m20 0h1m3 0h2m3 0h1m5 0h3m3 0h1m9 0h1m1 0h1m5 0h1m42 0h1m3 0h1m16 0h1m17 0h1m2 0h2m4 0h2m1 0h5m16 0h1m1 0h1m12 0h1m1 0h1m1 0h7m1 0h2m1 0h1m1 0h1m12 0h1m27 0h1m1 0h1m2 0h1m2 0h3m3 0h1m10 0h1m5 0h1m32 0h1m2 0h1m30 0h1m12 0h1M0 2.5h1m16 0h1m1 0h1m3 0h1m2 0h1m2 0h2m5 0h1m2 0h1m2 0h1m2 0h1m5 0h1m38 0h1m2 0h2m2 0h6m8 0h1m1 0h1m22 0h1m7 0h2m2 0h1m6 0h1m10 0h1m4 0h1m1 0h1m3 0h1m12 0h2m1 0h1m1 0h1m5 0h4m15 0h1m2 0h2m17 0h1m3 0h4m6 0h5m5 0h1m2 0h1m3 0h1m4 0h1m15 0h1m2 0h8m1 0h2m1 0h1m32 0h1m3 0h1m4 0h1m3 0h1m2 0h1m1 0h2m8 0h1M4 3.5h1m20 0h2m19 0h1m4 0h1m29 0h1m9 0h2m3 0h7m10 0h1m19 0h1m5 0h1m4 0h1m7 0h1m1 0h3m12 0h1m3 0h1m14 0h1m9 0h1m1 0h2m1 0h1m1 0h2m21 0h3m5 0h1m2 0h2m2 0h1m8 0h1m2 0h3m2 0h1m2 0h1m2 0h1m14 0h1m12 0h1m1 0h1m1 0h1m1 0h2m1 0h3m2 0h2m1 0h1m52 0h1m4 0h1m9 0h1m17 0h1m5 0h1m11 0h1M20 4.5h1m2 0h1m12 0h1m6 0h1m4 0h1m1 0h2m23 0h1m2 0h1m5 0h1m2 0h1m1 0h3m2 0h1m1 0h1m1 0h3m1 0h1m11 0h2m9 0h1m7 0h1m4 0h1m1 0h2m11 0h1m1 0h2m11 0h1m3 0h1m9 0h1m8 0h1m1 0h1m2 0h1m1 0h1m2 0h1m1 0h4m8 0h1m13 0h2m4 0h2m2 0h1m5 0h4m1 0h1m1 0h1m1 0h1m3 0h3m3 0h1m1 0h1m1 0h2m2 0h1m5 0h1m12 0h1m1 0h3m3 0h1m1 0h1m1 0h3m1 0h1m1 0h1m11 0h2m34 0h1m3 0h1m1 0h1m14 0h2M0 5.5h1m6 0h1m8 0h1m14 0h1m5 0h1m7 0h2m2 0h1m1 0h1m17 0h1m7 0h1m10 0h5m3 0h1m2 0h2m2 0h1m12 0h1m4 0h1m19 0h1m6 0h1m6 0h1m2 0h1m5 0h1m27 0h1m3 0h1m3 0h5m12 0h1m3 0h4m5 0h1m4 0h1m4 0h3m1 0h1m2 0h2m4 0h1m2 0h2m1 0h1m5 0h1m1 0h2m11 0h1m9 0h1m3 0h3m2 0h2m2 0h5m4 0h1m7 0h1m20 0h2m9 0h1m2 0h1m2 0h1m49 0h1m2 0h1M0 6.5h1m10 0h1m6 0h1m19 0h1m1 0h2m2 0h1m2 0h1m3 0h1m10 0h1m1 0h3m6 0h1m5 0h2m4 0h1m6 0h1m1 0h2m1 0h1m1 0h4m1 0h1m23 0h3m9 0h1m1 0h1m1 0h1m3 0h1m3 0h1m2 0h1m12 0h1m4 0h1m4 0h2m5 0h1m10 0h1m1 0h2m1 0h2m2 0h2m1 0h1m12 0h1m4 0h2m6 0h2m5 0h1m3 0h1m1 0h1m7 0h2m1 0h2m1 0h1m3 0h1m2 0h1m2 0h1m7 0h1m11 0h1m1 0h1m2 0h1m5 0h2m1 0h4m14 0h1m26 0h1m6 0h4m1 0h2m41 0h1M0 7.5h2m13 0h1m1 0h1m1 0h1m3 0h1m4 0h1m3 0h1m3 0h1m1 0h1m2 0h1m1 0h1m2 0h3m2 0h2m15 0h1m3 0h1m3 0h1m10 0h1m4 0h1m5 0h5m16 0h1m9 0h2m2 0h2m2 0h2m2 0h1m12 0h3m14 0h1m2 0h1m3 0h1m7 0h1m10 0h1m2 0h1m2 0h2m1 0h1m11 0h1m1 0h1m1 0h2m1 0h1m4 0h1m8 0h1m2 0h1m1 0h2m3 0h1m2 0h1m1 0h1m1 0h2m7 0h1m1 0h2m11 0h1m5 0h1m1 0h1m6 0h1m2 0h3m2 0h3m2 0h2m3 0h1m34 0h1m5 0h2m4 0h1m1 0h3m26 0h1m15 0h1m2 0h1M12 8.5h3m7 0h1m8 0h1m2 0h1m4 0h1m1 0h3m2 0h1m1 0h1m2 0h1m10 0h1m8 0h2m2 0h1m2 0h1m4 0h1m1 0h1m2 0h1m3 0h1m1 0h1m2 0h1m2 0h2m1 0h2m12 0h2m9 0h1m4 0h1m3 0h2m4 0h1m6 0h2m1 0h1m1 0h1m19 0h1m6 0h1m5 0h3m1 0h1m1 0h1m3 0h2m2 0h3m3 0h1m6 0h1m5 0h1m7 0h2m2 0h1m2 0h1m4 0h1m1 0h1m5 0h2m2 0h3m2 0h1m1 0h1m11 0h1m9 0h1m2 0h1m3 0h1m2 0h1m4 0h1m2 0h1m1 0h1m5 0h3m39 0h1m9 0h1m3 0h1m5 0h1m20 0h2m5 0h1m4 0h1m6 0h1m4 0h1M6 9.5h1m16 0h1m10 0h1m1 0h1m1 0h2m6 0h1m2 0h2m13 0h1m3 0h1m11 0h3m2 0h2m1 0h1m3 0h4m1 0h2m1 0h2m1 0h2m8 0h2m16 0h1m6 0h1m8 0h1m4 0h2m1 0h2m2 0h1m4 0h1m3 0h1m5 0h1m4 0h1m1 0h1m6 0h1m1 0h1m3 0h1m1 0h2m1 0h7m2 0h1m6 0h1m3 0h1m1 0h3m7 0h1m18 0h2m2 0h1m1 0h3m2 0h1m3 0h1m1 0h1m3 0h1m10 0h1m3 0h2m3 0h1m3 0h1m1 0h2m1 0h3m2 0h2m2 0h2m31 0h1m5 0h1m4 0h1m3 0h4m1 0h2m17 0h1m33 0h1M15 10.5h1m4 0h2m2 0h1m1 0h1m6 0h2m6 0h1m1 0h2m1 0h1m2 0h4m12 0h1m13 0h1m2 0h1m6 0h1m1 0h1m30 0h1m1 0h1m6 0h1m2 0h1m2 0h1m4 0h1m6 0h1m1 0h1m1 0h3m4 0h1m17 0h1m1 0h1m1 0h1m4 0h2m1 0h3m1 0h13m7 0h1m3 0h1m2 0h1m2 0h1m3 0h2m4 0h1m2 0h3m1 0h2m5 0h1m2 0h1m3 0h2m2 0h1m2 0h1m3 0h2m1 0h2m7 0h1m1 0h1m7 0h2m2 0h1m1 0h1m4 0h1m1 0h1m1 0h1m1 0h3m1 0h1m7 0h1m35 0h1m1 0h2m4 0h3m5 0h1m22 0h1m5 0h1m15 0h1M0 11.5h1m14 0h2m5 0h1m2 0h1m3 0h2m2 0h1m2 0h4m3 0h1m1 0h1m2 0h2m1 0h2m2 0h1m7 0h1m1 0h1m6 0h1m2 0h1m1 0h1m1 0h1m1 0h2m2 0h1m1 0h1m1 0h1m1 0h1m1 0h2m3 0h1m3 0h2m12 0h1m18 0h1m2 0h1m5 0h1m1 0h1m2 0h3m1 0h4m9 0h1m9 0h2m1 0h1m3 0h1m1 0h2m5 0h2m2 0h2m1 0h3m2 0h2m8 0h1m5 0h1m2 0h1m5 0h1m4 0h1m5 0h1m2 0h2m7 0h1m4 0h4m4 0h2m2 0h1m7 0h1m3 0h1m3 0h2m6 0h1m3 0h2m1 0h1m3 0h1m1 0h6m6 0h1m15 0h1m15 0h1m1 0h1m1 0h3m4 0h3m51 0h1M0 12.5h1m12 0h1m3 0h1m9 0h1m5 0h1m1 0h2m1 0h1m2 0h1m1 0h2m3 0h1m1 0h4m2 0h1m19 0h1m9 0h1m3 0h2m2 0h7m1 0h1m9 0h1m6 0h1m18 0h5m2 0h1m5 0h3m28 0h1m3 0h1m4 0h1m1 0h1m2 0h6m1 0h3m2 0h1m1 0h1m3 0h1m1 0h2m3 0h2m5 0h1m2 0h1m20 0h2m1 0h2m2 0h1m5 0h2m2 0h1m21 0h1m2 0h1m1 0h1m2 0h1m1 0h2m2 0h2m3 0h1m23 0h1m9 0h1m7 0h1m2 0h2m4 0h1m1 0h2m49 0h2M19 13.5h1m1 0h1m1 0h1m4 0h1m5 0h2m1 0h1m1 0h1m1 0h3m1 0h2m1 0h1m1 0h1m1 0h1m2 0h1m2 0h2m9 0h1m6 0h2m1 0h1m3 0h2m2 0h1m6 0h3m1 0h1m1 0h3m13 0h1m9 0h2m12 0h1m9 0h4m2 0h1m23 0h1m6 0h4m2 0h1m3 0h3m1 0h6m1 0h1m6 0h1m3 0h1m1 0h1m1 0h1m1 0h1m14 0h2m1 0h1m1 0h1m4 0h2m1 0h2m1 0h1m1 0h1m1 0h1m1 0h1m1 0h1m6 0h1m1 0h1m11 0h1m6 0h1m2 0h1m1 0h2m1 0h2m3 0h1m2 0h3m16 0h1m20 0h1m1 0h1m3 0h1m2 0h3m4 0h1m12 0h1m31 0h1m5 0h1M0 14.5h1m17 0h1m2 0h1m7 0h1m4 0h1m5 0h1m2 0h2m1 0h3m1 0h1m1 0h1m3 0h1m18 0h3m3 0h1m3 0h1m4 0h3m4 0h7m10 0h1m5 0h1m12 0h1m4 0h1m1 0h1m2 0h1m4 0h1m6 0h5m4 0h1m15 0h1m3 0h1m2 0h3m2 0h1m1 0h1m1 0h2m2 0h3m2 0h1m12 0h1m1 0h2m2 0h3m15 0h1m2 0h1m3 0h4m1 0h1m2 0h2m21 0h1m1 0h1m5 0h1m9 0h2m1 0h1m4 0h2m1 0h1m27 0h1m8 0h2m2 0h1m1 0h1m2 0h2m1 0h2m2 0h2m20 0h1m30 0h1M5 15.5h1m9 0h1m6 0h1m3 0h1m1 0h4m1 0h1m1 0h1m1 0h2m1 0h1m1 0h1m1 0h4m1 0h1m1 0h2m13 0h1m2 0h1m16 0h2m2 0h3m3 0h5m1 0h1m7 0h1m2 0h1m4 0h1m9 0h1m4 0h2m2 0h4m1 0h1m4 0h1m2 0h1m3 0h3m20 0h2m4 0h1m2 0h1m1 0h1m1 0h1m2 0h2m2 0h1m1 0h5m2 0h1m1 0h1m15 0h1m5 0h1m16 0h2m1 0h1m2 0h1m1 0h3m5 0h1m1 0h2m12 0h1m14 0h1m1 0h5m3 0h2m4 0h1m30 0h1m5 0h1m2 0h1m1 0h1m5 0h1m1 0h1m2 0h2m14 0h1m14 0h1m20 0h1M0 16.5h1m16 0h3m2 0h2m14 0h1m2 0h2m1 0h4m1 0h3m11 0h1m7 0h1m1 0h1m3 0h1m5 0h1m4 0h1m3 0h4m1 0h1m1 0h3m1 0h1m3 0h1m21 0h2m16 0h1m1 0h6m1 0h1m13 0h1m5 0h1m7 0h1m2 0h1m5 0h4m1 0h4m1 0h1m1 0h1m2 0h1m6 0h1m3 0h1m7 0h2m9 0h1m8 0h2m3 0h1m1 0h7m1 0h1m3 0h2m32 0h1m1 0h2m2 0h2m2 0h1m1 0h1m20 0h1m12 0h1m1 0h1m1 0h1m1 0h1m1 0h1m1 0h1m1 0h2m3 0h1m14 0h2m4 0h1m7 0h1m22 0h1M0 17.5h2m1 0h1m9 0h1m2 0h1m5 0h2m1 0h2m5 0h1m2 0h1m2 0h3m2 0h1m1 0h1m1 0h6m17 0h1m5 0h1m2 0h1m1 0h1m2 0h1m1 0h2m2 0h1m2 0h4m1 0h5m1 0h1m36 0h1m1 0h1m2 0h1m5 0h2m1 0h1m15 0h1m9 0h1m3 0h3m4 0h5m1 0h3m1 0h2m1 0h2m1 0h1m1 0h1m1 0h1m2 0h1m1 0h2m4 0h1m6 0h2m9 0h1m2 0h1m4 0h1m4 0h2m1 0h1m1 0h1m8 0h1m13 0h1m4 0h1m8 0h2m6 0h4m4 0h1m41 0h2m1 0h2m3 0h2m10 0h1m3 0h1m1 0h1m9 0h1M0 18.5h1m1 0h1m12 0h1m2 0h1m3 0h1m11 0h6m3 0h1m4 0h1m2 0h1m3 0h1m7 0h1m6 0h1m4 0h1m6 0h1m1 0h1m3 0h1m2 0h1m3 0h1m2 0h2m1 0h2m23 0h1m8 0h3m7 0h1m3 0h2m1 0h1m2 0h1m1 0h1m3 0h1m8 0h1m5 0h1m6 0h2m1 0h1m1 0h9m1 0h9m10 0h1m7 0h4m6 0h1m2 0h1m2 0h1m3 0h1m4 0h1m1 0h1m1 0h3m1 0h3m2 0h1m6 0h1m24 0h1m6 0h5m2 0h2m1 0h1m9 0h1m27 0h1m4 0h1m1 0h3m2 0h2M11 19.5h1m3 0h1m8 0h3m8 0h1m3 0h2m1 0h3m1 0h1m2 0h1m2 0h2m4 0h2m2 0h1m10 0h1m4 0h1m6 0h1m3 0h2m2 0h1m2 0h6m1 0h1m15 0h1m2 0h1m18 0h1m1 0h1m1 0h1m4 0h7m8 0h1m15 0h1m1 0h5m4 0h3m2 0h1m1 0h4m1 0h2m2 0h1m2 0h2m6 0h1m5 0h1m11 0h1m7 0h1m4 0h1m3 0h1m1 0h2m1 0h2m3 0h2m26 0h2m5 0h3m1 0h1m2 0h2m30 0h1m2 0h2m2 0h1m1 0h2m4 0h1m5 0h1m4 0h1m20 0h1m29 0h1M0 20.5h1m13 0h1m6 0h2m3 0h1m3 0h2m6 0h4m1 0h1m3 0h6m1 0h1m1 0h2m3 0h1m27 0h1m2 0h1m1 0h6m2 0h2m30 0h1m1 0h1m5 0h1m5 0h1m2 0h1m4 0h1m6 0h1m1 0h1m8 0h2m1 0h1m5 0h1m2 0h1m1 0h1m5 0h3m1 0h4m2 0h1m30 0h2m12 0h2m1 0h2m1 0h1m1 0h1m1 0h1m13 0h1m10 0h1m2 0h1m5 0h1m1 0h2m3 0h2m1 0h3m2 0h1m11 0h1m24 0h1m11 0h3m1 0h2m44 0h1m7 0h1M1 21.5h2m5 0h1m9 0h1m3 0h1m5 0h1m1 0h1m6 0h1m1 0h1m1 0h1m1 0h4m1 0h2m1 0h2m5 0h1m27 0h1m5 0h1m2 0h3m1 0h1m3 0h1m34 0h1m5 0h1m1 0h1m7 0h3m5 0h2m12 0h1m1 0h1m5 0h2m3 0h2m1 0h1m1 0h4m1 0h1m3 0h2m1 0h1m2 0h1m8 0h1m4 0h1m1 0h3m4 0h1m7 0h1m1 0h2m3 0h1m3 0h2m2 0h1m1 0h2m20 0h1m1 0h2m1 0h1m12 0h1m5 0h2m1 0h5m26 0h1m3 0h1m5 0h2m1 0h1m1 0h1m1 0h1m3 0h3m1 0h1m4 0h1M0 22.5h1m10 0h1m13 0h2m2 0h1m10 0h1m1 0h1m4 0h2m2 0h2m13 0h2m3 0h1m7 0h1m5 0h1m1 0h1m4 0h1m1 0h3m1 0h3m1 0h1m1 0h1m6 0h1m26 0h1m1 0h1m5 0h2m4 0h2m24 0h1m1 0h1m2 0h1m2 0h2m1 0h5m1 0h7m1 0h2m1 0h1m1 0h1m4 0h1m1 0h1m1 0h1m8 0h1m1 0h1m1 0h1m4 0h2m1 0h3m1 0h1m2 0h1m1 0h4m2 0h1m2 0h1m4 0h1m14 0h1m5 0h1m1 0h1m2 0h1m6 0h1m1 0h2m2 0h3m1 0h4m36 0h1m4 0h1m6 0h2m2 0h1m3 0h1m27 0h1m22 0h1M0 23.5h1m20 0h1m4 0h2m12 0h1m3 0h2m1 0h1m1 0h1m1 0h2m9 0h1m9 0h1m1 0h1m9 0h1m8 0h1m1 0h1m1 0h1m1 0h4m6 0h1m26 0h1m3 0h1m4 0h1m2 0h1m1 0h1m2 0h1m1 0h1m9 0h1m2 0h1m4 0h1m2 0h1m5 0h1m1 0h1m2 0h4m1 0h3m2 0h4m1 0h4m11 0h2m1 0h1m4 0h1m9 0h1m2 0h1m2 0h1m1 0h1m1 0h1m3 0h1m2 0h1m1 0h2m1 0h3m5 0h1m2 0h1m8 0h1m6 0h1m3 0h2m5 0h6m1 0h1m2 0h2m5 0h1m12 0h1m16 0h1m8 0h1m2 0h1m5 0h3m1 0h2M4 24.5h1m2 0h1m10 0h1m2 0h3m1 0h3m1 0h1m1 0h1m9 0h2m3 0h3m1 0h3m17 0h1m2 0h1m10 0h1m7 0h2m1 0h3m2 0h2m4 0h1m14 0h1m12 0h1m4 0h1m1 0h1m3 0h2m1 0h1m3 0h1m1 0h1m1 0h1m3 0h1m1 0h1m9 0h1m1 0h1m1 0h1m2 0h1m1 0h1m2 0h1m2 0h1m1 0h1m5 0h1m1 0h1m1 0h1m1 0h1m2 0h3m1 0h1m2 0h1m1 0h1m2 0h1m1 0h1m7 0h1m1 0h1m3 0h1m2 0h1m8 0h1m2 0h1m3 0h2m1 0h1m1 0h1m1 0h2m9 0h1m11 0h1m3 0h1m1 0h2m3 0h1m2 0h1m1 0h1m2 0h3m1 0h1m1 0h2m1 0h1m5 0h1m1 0h1m11 0h1m13 0h1m6 0h1m8 0h1m2 0h2m10 0h1m37 0h1M0 25.5h1m4 0h1m14 0h2m1 0h1m2 0h1m1 0h1m7 0h2m2 0h1m1 0h4m2 0h2m1 0h1m7 0h1m3 0h1m1 0h1m1 0h1m8 0h1m9 0h1m1 0h1m1 0h1m2 0h3m3 0h1m1 0h2m5 0h1m3 0h1m19 0h1m2 0h1m11 0h1m4 0h1m1 0h3m9 0h1m3 0h1m8 0h2m1 0h4m1 0h3m1 0h1m2 0h1m3 0h1m2 0h6m1 0h1m6 0h2m1 0h1m2 0h3m3 0h1m6 0h2m5 0h1m1 0h1m2 0h1m3 0h1m1 0h3m1 0h1m2 0h2m4 0h1m9 0h1m10 0h1m10 0h3m1 0h1m1 0h3m1 0h4m1 0h1m2 0h1m17 0h1m4 0h1m9 0h1m6 0h1m2 0h1m2 0h1m1 0h2m15 0h1m2 0h1m28 0h1M0 26.5h1m15 0h1m3 0h3m1 0h1m4 0h1m10 0h1m3 0h10m13 0h1m7 0h1m16 0h1m2 0h1m2 0h2m1 0h1m1 0h1m2 0h1m3 0h1m24 0h1m1 0h1m1 0h1m3 0h1m4 0h1m3 0h1m1 0h2m4 0h1m7 0h1m3 0h1m3 0h1m3 0h1m2 0h1m1 0h1m6 0h4m1 0h2m1 0h1m1 0h3m13 0h1m1 0h1m1 0h1m4 0h1m1 0h3m3 0h4m2 0h2m3 0h1m3 0h5m1 0h5m25 0h1m3 0h2m3 0h9m1 0h1m1 0h3m7 0h1m22 0h1m2 0h1m1 0h1m6 0h1m3 0h3m1 0h1m17 0h1m18 0h2m14 0h3M0 27.5h1m8 0h1m2 0h2m3 0h3m1 0h1m2 0h1m1 0h1m2 0h1m1 0h2m3 0h1m1 0h1m1 0h1m1 0h1m1 0h1m2 0h1m3 0h2m7 0h2m2 0h2m3 0h1m16 0h1m2 0h1m1 0h1m2 0h1m1 0h3m5 0h1m34 0h1m7 0h1m1 0h1m2 0h2m4 0h1m7 0h1m8 0h1m3 0h2m1 0h1m3 0h1m1 0h1m2 0h1m1 0h4m1 0h1m1 0h6m2 0h1m10 0h1m4 0h2m1 0h1m3 0h2m1 0h1m2 0h1m2 0h1m3 0h3m1 0h4m2 0h4m20 0h2m3 0h1m1 0h2m2 0h2m1 0h1m2 0h1m1 0h2m1 0h1m2 0h1m1 0h2m5 0h1m22 0h1m4 0h1m4 0h2m6 0h1m1 0h1m1 0h1m2 0h1m2 0h1m47 0h1M0 28.5h1m16 0h1m3 0h1m6 0h1m1 0h2m1 0h3m6 0h2m6 0h2m10 0h1m2 0h1m4 0h1m1 0h1m2 0h1m7 0h1m6 0h1m4 0h2m1 0h6m1 0h1m1 0h1m4 0h1m7 0h1m9 0h1m1 0h1m5 0h2m2 0h2m8 0h1m1 0h2m2 0h2m2 0h1m1 0h1m12 0h1m2 0h1m1 0h1m4 0h2m1 0h2m1 0h2m2 0h1m1 0h2m2 0h1m1 0h2m14 0h1m9 0h1m2 0h2m3 0h1m2 0h2m1 0h2m2 0h1m3 0h2m1 0h3m15 0h1m6 0h1m11 0h2m1 0h1m2 0h1m1 0h5m2 0h2m2 0h1m1 0h1m4 0h1m24 0h1m4 0h1m1 0h1m1 0h4m4 0h3m51 0h1M0 29.5h1m13 0h2m1 0h1m3 0h1m1 0h1m1 0h1m15 0h4m2 0h1m3 0h1m30 0h1m1 0h1m4 0h1m2 0h1m2 0h1m2 0h5m38 0h1m2 0h1m2 0h1m5 0h1m1 0h2m6 0h1m2 0h1m4 0h2m1 0h1m3 0h1m1 0h2m5 0h2m1 0h1m1 0h2m2 0h1m1 0h6m2 0h1m2 0h1m3 0h3m3 0h1m1 0h2m3 0h2m3 0h1m1 0h1m5 0h1m4 0h1m3 0h4m2 0h2m2 0h4m7 0h1m12 0h1m12 0h2m1 0h9m1 0h1m3 0h1m5 0h2m1 0h1m4 0h1m5 0h1m18 0h1m5 0h1m6 0h1m1 0h1m32 0h1m13 0h1M6 30.5h1m1 0h1m5 0h1m1 0h1m1 0h1m2 0h1m6 0h2m2 0h1m3 0h2m10 0h1m1 0h2m3 0h1m8 0h1m7 0h1m2 0h1m2 0h4m1 0h1m1 0h1m5 0h2m1 0h1m3 0h1m1 0h5m15 0h1m12 0h1m1 0h1m5 0h1m1 0h1m2 0h2m2 0h2m1 0h1m1 0h2m2 0h1m4 0h1m17 0h2m3 0h2m2 0h2m3 0h1m1 0h2m1 0h4m1 0h1m14 0h1m3 0h1m4 0h1m2 0h2m1 0h1m2 0h2m1 0h1m1 0h1m2 0h2m2 0h3m1 0h2m1 0h1m10 0h1m6 0h1m8 0h1m6 0h1m1 0h1m1 0h1m2 0h3m1 0h1m2 0h2m4 0h1m5 0h1m5 0h1m4 0h1m7 0h1m17 0h1m1 0h1m1 0h5m51 0h1M0 31.5h1m12 0h1m1 0h2m1 0h1m10 0h1m8 0h1m4 0h1m1 0h3m1 0h1m2 0h1m10 0h1m2 0h1m2 0h1m11 0h1m3 0h1m4 0h1m1 0h1m2 0h1m1 0h1m3 0h2m1 0h1m23 0h1m3 0h1m3 0h1m13 0h2m1 0h1m1 0h1m4 0h1m4 0h1m1 0h1m15 0h1m3 0h1m2 0h1m5 0h3m1 0h2m1 0h4m1 0h1m5 0h2m1 0h1m3 0h1m1 0h1m2 0h1m7 0h2m2 0h3m1 0h1m1 0h3m3 0h1m2 0h6m1 0h2m15 0h3m3 0h1m11 0h2m2 0h9m1 0h1m2 0h1m1 0h1m1 0h1m3 0h1m4 0h1m20 0h1m7 0h2m3 0h1m1 0h2m22 0h1m27 0h1m1 0h1M0 32.5h4m12 0h1m4 0h1m4 0h2m18 0h3m1 0h2m13 0h1m11 0h1m1 0h1m3 0h2m1 0h2m2 0h1m2 0h4m1 0h5m3 0h1m21 0h1m6 0h1m2 0h2m9 0h1m5 0h1m5 0h1m1 0h1m8 0h1m6 0h1m1 0h3m2 0h1m5 0h6m1 0h2m1 0h1m1 0h2m2 0h1m1 0h1m2 0h1m1 0h2m2 0h1m1 0h2m2 0h1m3 0h2m1 0h1m6 0h1m2 0h2m1 0h1m2 0h2m1 0h3m1 0h1m2 0h2m2 0h1m19 0h1m1 0h2m5 0h1m3 0h2m1 0h3m1 0h4m1 0h1m1 0h1m14 0h1m19 0h1m6 0h1m8 0h3m7 0h1m41 0h2m1 0h1M0 33.5h1m2 0h2m17 0h1m1 0h1m2 0h1m5 0h1m11 0h8m10 0h1m4 0h1m3 0h1m9 0h3m2 0h1m2 0h1m2 0h1m1 0h1m2 0h3m2 0h2m1 0h1m19 0h3m7 0h1m1 0h1m9 0h2m1 0h1m6 0h1m3 0h1m3 0h1m2 0h1m11 0h1m2 0h3m1 0h2m1 0h4m2 0h1m1 0h2m2 0h2m9 0h1m1 0h2m1 0h1m1 0h1m3 0h1m1 0h1m3 0h1m4 0h1m2 0h1m1 0h6m1 0h3m1 0h2m1 0h3m1 0h3m4 0h1m3 0h1m4 0h1m6 0h1m4 0h2m1 0h1m5 0h4m1 0h4m2 0h2m7 0h2m4 0h1m5 0h1m4 0h1m7 0h2m3 0h1m7 0h2m1 0h1m1 0h2m1 0h1m5 0h1m39 0h1m2 0h2m1 0h2M0 34.5h2m2 0h3m7 0h1m1 0h1m1 0h2m5 0h1m4 0h1m5 0h1m7 0h4m1 0h2m1 0h1m13 0h1m13 0h1m8 0h3m1 0h3m1 0h1m1 0h2m1 0h1m5 0h1m21 0h1m1 0h1m2 0h1m11 0h1m2 0h2m1 0h3m6 0h2m3 0h1m1 0h2m6 0h3m5 0h1m1 0h1m5 0h1m1 0h1m2 0h3m1 0h4m2 0h1m1 0h1m3 0h1m4 0h1m1 0h1m2 0h2m1 0h7m1 0h1m1 0h2m4 0h1m2 0h2m2 0h6m3 0h2m16 0h1m2 0h1m1 0h1m3 0h1m4 0h2m2 0h12m5 0h1m4 0h1m7 0h1m4 0h1m2 0h1m13 0h1m11 0h4m1 0h1m1 0h1m29 0h1m15 0h1M0 35.5h1m3 0h1m11 0h1m2 0h2m9 0h1m4 0h1m3 0h1m5 0h3m2 0h1m5 0h1m9 0h1m6 0h1m2 0h1m2 0h1m10 0h2m1 0h2m1 0h1m1 0h3m1 0h2m7 0h1m7 0h2m3 0h1m1 0h1m3 0h1m1 0h1m1 0h1m10 0h1m7 0h1m1 0h2m4 0h1m2 0h2m1 0h1m9 0h2m4 0h2m3 0h1m6 0h1m1 0h10m2 0h1m3 0h1m5 0h1m1 0h1m1 0h1m1 0h2m3 0h1m2 0h6m1 0h1m1 0h3m3 0h1m3 0h4m1 0h1m2 0h1m21 0h1m1 0h2m3 0h3m3 0h2m3 0h1m1 0h1m1 0h6m2 0h1m1 0h1m10 0h1m3 0h1m10 0h1m9 0h3m4 0h1m1 0h2m1 0h3m29 0h1m20 0h1M4 36.5h1m1 0h2m4 0h1m7 0h1m1 0h1m2 0h2m1 0h1m2 0h3m6 0h1m1 0h1m2 0h3m2 0h3m29 0h1m10 0h2m1 0h4m1 0h2m1 0h1m22 0h1m5 0h1m1 0h1m5 0h1m1 0h1m8 0h2m1 0h2m1 0h3m3 0h5m10 0h1m3 0h2m8 0h6m1 0h3m1 0h1m1 0h1m3 0h3m2 0h1m1 0h1m1 0h1m6 0h1m1 0h1m1 0h2m1 0h2m2 0h3m2 0h1m1 0h1m1 0h3m5 0h4m1 0h1m2 0h1m2 0h1m11 0h1m3 0h4m1 0h2m2 0h3m3 0h1m1 0h2m1 0h6m1 0h1m9 0h2m8 0h3m14 0h1m7 0h1m1 0h1m1 0h2m1 0h2m9 0h1m39 0h1m1 0h1m1 0h1M0 37.5h1m9 0h2m2 0h2m7 0h2m1 0h1m2 0h3m1 0h1m1 0h2m2 0h1m1 0h1m1 0h3m2 0h1m2 0h1m17 0h1m13 0h1m8 0h1m1 0h2m2 0h1m1 0h3m1 0h1m1 0h1m1 0h1m8 0h1m5 0h1m4 0h2m6 0h1m1 0h1m2 0h1m1 0h1m1 0h1m4 0h2m1 0h3m3 0h1m1 0h1m9 0h2m3 0h1m6 0h1m4 0h1m1 0h1m2 0h1m2 0h1m1 0h1m1 0h3m1 0h2m2 0h1m2 0h2m2 0h1m10 0h3m1 0h5m5 0h6m1 0h4m4 0h2m1 0h1m1 0h1m24 0h1m6 0h1m4 0h4m1 0h1m1 0h1m2 0h2m4 0h1m4 0h1m10 0h1m3 0h1m16 0h2m1 0h2m1 0h1m2 0h1m1 0h3m3 0h2m8 0h1m20 0h1m14 0h1m1 0h1M8 38.5h4m2 0h1m1 0h2m3 0h1m2 0h8m11 0h2m4 0h1m1 0h2m3 0h1m12 0h1m8 0h1m2 0h1m4 0h6m3 0h1m1 0h5m2 0h1m1 0h2m5 0h1m9 0h1m12 0h3m2 0h1m1 0h2m5 0h2m2 0h4m1 0h3m2 0h1m3 0h2m3 0h1m4 0h1m5 0h1m3 0h2m1 0h1m1 0h4m1 0h2m1 0h1m1 0h1m4 0h1m7 0h2m4 0h2m1 0h1m2 0h1m1 0h1m1 0h2m1 0h4m1 0h2m1 0h2m2 0h6m2 0h1m1 0h2m3 0h1m2 0h1m5 0h1m12 0h1m6 0h1m5 0h2m1 0h3m1 0h1m4 0h1m7 0h1m5 0h1m7 0h2m7 0h1m8 0h1m1 0h1m1 0h1m2 0h3m1 0h2m1 0h2m4 0h1m22 0h1m5 0h1m10 0h1m4 0h2M0 39.5h1m12 0h2m3 0h2m5 0h4m3 0h2m2 0h1m2 0h3m1 0h1m1 0h1m2 0h1m17 0h1m6 0h1m8 0h1m2 0h2m3 0h1m1 0h1m2 0h1m1 0h5m1 0h2m5 0h1m13 0h1m2 0h1m1 0h2m6 0h2m2 0h2m1 0h2m4 0h3m1 0h2m6 0h1m9 0h1m3 0h1m3 0h1m2 0h1m3 0h1m1 0h1m2 0h1m1 0h1m2 0h2m1 0h1m1 0h1m3 0h1m1 0h1m1 0h1m2 0h1m1 0h1m1 0h2m6 0h2m1 0h2m1 0h2m2 0h1m2 0h1m1 0h1m3 0h6m1 0h3m2 0h2m2 0h1m6 0h1m1 0h1m11 0h1m1 0h1m1 0h1m1 0h1m2 0h1m2 0h2m1 0h1m3 0h10m2 0h1m10 0h1m7 0h1m3 0h1m7 0h1m4 0h1m3 0h2m1 0h1m3 0h1m1 0h1m1 0h1m50 0h2M0 40.5h1m3 0h1m2 0h1m1 0h2m13 0h1m2 0h5m2 0h1m4 0h1m2 0h1m2 0h2m4 0h2m14 0h1m9 0h1m1 0h2m2 0h1m1 0h1m6 0h3m1 0h3m1 0h2m3 0h2m5 0h1m1 0h1m13 0h2m1 0h1m11 0h4m1 0h1m1 0h1m2 0h2m1 0h1m6 0h1m7 0h1m8 0h1m2 0h2m7 0h2m2 0h2m1 0h4m5 0h1m1 0h1m1 0h1m5 0h2m3 0h3m2 0h1m1 0h3m3 0h3m2 0h8m1 0h5m1 0h2m2 0h1m3 0h1m7 0h1m2 0h1m2 0h1m10 0h1m1 0h1m3 0h1m1 0h2m2 0h1m1 0h1m1 0h6m17 0h2m4 0h1m8 0h1m5 0h5m1 0h1m1 0h2m2 0h1m7 0h1m39 0h1m5 0h1M0 41.5h1m1 0h2m1 0h1m5 0h1m1 0h1m2 0h3m1 0h1m3 0h2m1 0h1m1 0h2m2 0h1m1 0h1m1 0h2m1 0h2m6 0h3m1 0h1m15 0h1m2 0h1m3 0h1m9 0h1m2 0h1m3 0h6m1 0h1m1 0h2m1 0h1m5 0h1m1 0h1m5 0h1m9 0h2m4 0h1m1 0h1m6 0h1m2 0h2m1 0h1m1 0h1m1 0h1m2 0h2m2 0h1m5 0h1m1 0h1m2 0h1m2 0h2m1 0h2m6 0h1m1 0h2m1 0h1m1 0h1m1 0h5m2 0h1m2 0h1m3 0h1m4 0h1m5 0h1m3 0h2m1 0h2m3 0h1m1 0h1m1 0h3m2 0h3m2 0h1m1 0h2m2 0h5m2 0h1m1 0h2m12 0h1m5 0h1m5 0h1m8 0h3m2 0h5m1 0h3m21 0h1m12 0h1m5 0h1m2 0h1m2 0h2m1 0h1m4 0h2m5 0h1m43 0h2M0 42.5h2m3 0h2m1 0h1m2 0h1m1 0h2m1 0h2m4 0h2m2 0h1m1 0h2m7 0h2m7 0h2m2 0h3m1 0h1m13 0h1m1 0h1m3 0h1m9 0h2m3 0h2m2 0h1m2 0h1m2 0h1m1 0h1m2 0h2m5 0h1m5 0h1m1 0h1m3 0h1m3 0h1m2 0h1m12 0h1m3 0h4m1 0h1m3 0h1m2 0h2m3 0h1m8 0h2m2 0h3m1 0h1m1 0h1m3 0h1m1 0h1m2 0h1m2 0h8m1 0h1m1 0h1m1 0h1m1 0h1m7 0h1m1 0h1m2 0h3m2 0h2m1 0h3m2 0h3m3 0h2m3 0h1m4 0h2m2 0h1m1 0h1m1 0h2m4 0h1m3 0h1m13 0h1m1 0h1m5 0h3m1 0h1m1 0h4m2 0h1m2 0h1m2 0h1m2 0h1m8 0h1m12 0h1m1 0h1m3 0h1m4 0h1m1 0h1m1 0h1m1 0h4m1 0h2m1 0h3m1 0h1m9 0h1m18 0h1M0 43.5h1m4 0h1m1 0h1m1 0h1m3 0h1m1 0h1m1 0h1m4 0h1m3 0h1m4 0h1m1 0h1m2 0h1m2 0h2m1 0h1m3 0h3m2 0h2m1 0h1m1 0h2m24 0h1m3 0h1m1 0h2m1 0h3m2 0h4m1 0h1m10 0h1m2 0h2m6 0h1m2 0h1m6 0h1m9 0h1m2 0h4m1 0h4m1 0h3m5 0h2m6 0h1m5 0h2m3 0h2m3 0h2m3 0h2m2 0h2m1 0h1m1 0h1m1 0h1m1 0h1m4 0h2m3 0h7m1 0h1m2 0h2m1 0h1m2 0h2m1 0h1m2 0h2m2 0h4m1 0h3m2 0h2m2 0h4m3 0h1m21 0h2m1 0h1m2 0h1m1 0h1m3 0h5m2 0h3m1 0h2m1 0h1m11 0h1m7 0h4m1 0h2m1 0h1m6 0h1m1 0h1m3 0h1m1 0h1m1 0h4m1 0h1m2 0h1m3 0h2m3 0h1m4 0h1m29 0h1m4 0h1M0 44.5h1m1 0h2m2 0h4m6 0h1m1 0h1m5 0h1m1 0h1m1 0h1m1 0h3m3 0h2m3 0h1m1 0h1m1 0h2m2 0h2m7 0h1m1 0h1m13 0h1m2 0h1m3 0h1m3 0h5m2 0h1m1 0h2m1 0h6m5 0h1m5 0h1m1 0h1m1 0h1m8 0h1m9 0h3m4 0h3m1 0h3m2 0h5m5 0h1m1 0h1m2 0h1m3 0h1m1 0h2m4 0h1m3 0h3m3 0h2m1 0h1m2 0h4m1 0h1m1 0h1m2 0h1m1 0h1m2 0h1m1 0h2m3 0h4m1 0h2m1 0h1m7 0h1m2 0h2m1 0h1m1 0h3m2 0h2m1 0h4m2 0h5m5 0h1m5 0h1m9 0h1m1 0h1m5 0h1m1 0h8m1 0h2m1 0h7m20 0h1m5 0h1m4 0h1m4 0h1m1 0h1m1 0h2m3 0h1m1 0h7m24 0h1m12 0h1m5 0h1m3 0h1m2 0h1M0 45.5h2m1 0h3m4 0h3m5 0h1m3 0h4m2 0h1m1 0h2m3 0h1m5 0h3m1 0h1m2 0h1m2 0h2m2 0h2m15 0h1m3 0h1m3 0h1m3 0h1m4 0h2m2 0h4m1 0h5m20 0h1m14 0h2m3 0h1m3 0h2m1 0h1m1 0h1m1 0h3m5 0h2m2 0h1m4 0h2m3 0h2m1 0h2m4 0h2m1 0h3m2 0h2m4 0h2m4 0h2m1 0h1m6 0h1m3 0h1m3 0h4m1 0h2m1 0h1m1 0h2m3 0h1m1 0h1m1 0h7m2 0h3m1 0h1m1 0h2m1 0h3m20 0h2m1 0h1m1 0h1m1 0h1m4 0h2m2 0h1m1 0h2m6 0h1m8 0h1m4 0h1m5 0h2m11 0h1m1 0h2m2 0h2m2 0h2m1 0h6m1 0h1m9 0h1m18 0h1m15 0h1m7 0h1M0 46.5h1m3 0h5m3 0h2m3 0h1m1 0h2m1 0h2m2 0h3m1 0h4m3 0h1m2 0h1m1 0h1m1 0h9m3 0h1m7 0h2m9 0h1m1 0h1m2 0h1m1 0h1m8 0h3m1 0h4m3 0h3m1 0h1m4 0h1m6 0h1m8 0h1m6 0h1m1 0h1m2 0h1m2 0h1m5 0h2m1 0h2m3 0h1m3 0h1m3 0h1m13 0h1m2 0h1m5 0h1m1 0h5m1 0h2m2 0h2m1 0h1m1 0h1m5 0h2m3 0h1m1 0h3m2 0h2m1 0h1m2 0h1m2 0h5m1 0h4m3 0h3m1 0h4m1 0h6m2 0h1m2 0h1m11 0h1m3 0h1m5 0h1m2 0h1m7 0h1m1 0h6m2 0h1m2 0h1m1 0h2m2 0h1m6 0h1m13 0h1m3 0h4m2 0h2m2 0h3m1 0h1m2 0h2m1 0h3m9 0h1m33 0h1m3 0h2m1 0h2M1 47.5h8m1 0h1m1 0h3m1 0h1m1 0h1m2 0h2m1 0h2m2 0h1m1 0h5m2 0h1m1 0h3m1 0h3m1 0h1m1 0h4m2 0h1m1 0h2m2 0h1m4 0h1m2 0h1m4 0h1m6 0h1m3 0h1m1 0h2m4 0h1m1 0h3m3 0h2m1 0h3m5 0h1m3 0h1m5 0h1m1 0h2m3 0h1m1 0h1m1 0h1m1 0h1m6 0h2m2 0h3m1 0h1m1 0h2m4 0h2m3 0h2m1 0h1m1 0h2m2 0h1m4 0h1m4 0h2m2 0h1m2 0h4m1 0h1m1 0h8m6 0h1m2 0h1m3 0h2m1 0h1m3 0h4m1 0h1m1 0h1m1 0h3m1 0h2m1 0h5m1 0h4m1 0h2m1 0h4m2 0h1m2 0h1m2 0h2m5 0h1m2 0h1m5 0h1m2 0h1m9 0h1m2 0h1m2 0h1m1 0h2m3 0h1m3 0h1m2 0h2m4 0h2m2 0h1m9 0h1m1 0h1m1 0h1m1 0h1m12 0h1m1 0h2m2 0h2m1 0h2m12 0h2m1 0h1m8 0h1m11 0h1m6 0h1m1 0h2m3 0h1M1 48.5h3m2 0h1m1 0h1m4 0h1m3 0h3m2 0h3m1 0h2m1 0h7m1 0h2m1 0h1m1 0h2m1 0h6m1 0h1m2 0h1m8 0h1m3 0h1m1 0h1m2 0h1m2 0h3m2 0h1m3 0h2m2 0h1m3 0h3m1 0h4m1 0h1m1 0h1m15 0h1m9 0h2m9 0h1m1 0h3m2 0h7m2 0h2m1 0h1m1 0h1m4 0h1m5 0h2m8 0h3m1 0h1m1 0h2m1 0h3m1 0h6m1 0h1m4 0h1m1 0h3m3 0h1m4 0h8m1 0h1m2 0h10m1 0h1m2 0h3m2 0h2m1 0h4m1 0h1m13 0h1m1 0h1m2 0h1m9 0h1m1 0h1m1 0h3m2 0h8m18 0h2m12 0h2m2 0h1m3 0h2m2 0h1m2 0h2m2 0h2m1 0h2m2 0h1m8 0h1m1 0h1m2 0h3m7 0h1m1 0h1m5 0h1m7 0h1m1 0h1m1 0h1m2 0h1m3 0h1M1 49.5h3m1 0h3m4 0h3m2 0h4m1 0h1m1 0h1m1 0h6m1 0h2m4 0h8m2 0h3m3 0h1m11 0h1m6 0h1m5 0h1m1 0h1m1 0h5m2 0h1m2 0h5m7 0h1m15 0h3m6 0h1m1 0h1m6 0h1m3 0h2m1 0h2m1 0h5m1 0h1m1 0h1m3 0h1m1 0h3m3 0h1m1 0h1m10 0h4m1 0h5m2 0h3m2 0h1m1 0h2m1 0h1m2 0h1m1 0h1m1 0h3m1 0h2m1 0h7m1 0h1m1 0h1m1 0h3m1 0h3m1 0h3m2 0h8m1 0h2m1 0h3m1 0h2m1 0h2m1 0h1m6 0h1m1 0h1m4 0h1m2 0h1m1 0h4m4 0h1m1 0h1m2 0h9m8 0h1m14 0h1m2 0h1m2 0h1m2 0h3m4 0h2m2 0h5m3 0h3m1 0h1m9 0h1m34 0h1m1 0h1m2 0h1M0 50.5h1m3 0h2m3 0h4m1 0h1m2 0h1m2 0h1m1 0h2m1 0h4m1 0h2m2 0h1m2 0h7m1 0h2m1 0h2m2 0h2m6 0h1m3 0h1m2 0h2m1 0h2m1 0h2m4 0h4m1 0h1m3 0h2m3 0h7m1 0h1m2 0h1m1 0h1m4 0h1m2 0h1m6 0h1m5 0h1m3 0h2m1 0h1m3 0h7m1 0h2m2 0h1m1 0h3m1 0h3m7 0h1m1 0h1m1 0h1m3 0h4m2 0h2m3 0h1m3 0h2m1 0h1m1 0h2m1 0h1m1 0h4m1 0h1m3 0h1m2 0h7m2 0h6m1 0h2m1 0h13m1 0h3m2 0h2m1 0h3m2 0h1m3 0h1m2 0h2m1 0h1m5 0h2m1 0h1m6 0h1m1 0h1m4 0h1m1 0h1m1 0h1m1 0h2m2 0h2m1 0h4m1 0h3m8 0h1m1 0h1m2 0h1m1 0h1m5 0h1m1 0h4m1 0h2m1 0h1m2 0h1m2 0h3m3 0h3m1 0h2m2 0h1m1 0h1m7 0h1m9 0h1m10 0h1m13 0h1m2 0h1m2 0h3M0 51.5h3m2 0h1m3 0h2m1 0h1m1 0h1m1 0h1m2 0h1m1 0h2m1 0h2m2 0h3m1 0h3m1 0h1m3 0h1m1 0h2m1 0h5m1 0h2m5 0h1m1 0h1m1 0h2m1 0h1m7 0h1m3 0h2m1 0h1m1 0h3m1 0h2m2 0h1m2 0h4m1 0h3m1 0h1m1 0h1m17 0h1m7 0h3m1 0h1m2 0h1m4 0h1m2 0h6m1 0h1m3 0h1m1 0h1m1 0h1m1 0h4m1 0h4m1 0h3m4 0h1m3 0h3m1 0h2m3 0h3m3 0h2m1 0h3m4 0h3m1 0h4m1 0h1m1 0h2m1 0h3m1 0h3m2 0h2m2 0h3m1 0h4m1 0h4m1 0h2m1 0h5m3 0h1m5 0h1m3 0h3m1 0h1m2 0h1m3 0h1m1 0h1m2 0h2m3 0h1m2 0h1m3 0h4m1 0h1m3 0h1m2 0h1m23 0h1m2 0h1m2 0h1m1 0h1m2 0h12m3 0h3m19 0h1m3 0h2m1 0h1m6 0h2m3 0h1m1 0h1m3 0h2m2 0h1m1 0h3M0 52.5h4m2 0h1m2 0h1m1 0h1m4 0h3m1 0h1m6 0h2m1 0h1m1 0h3m2 0h1m1 0h1m1 0h1m2 0h2m2 0h5m10 0h1m1 0h1m7 0h1m2 0h2m1 0h2m1 0h2m2 0h1m2 0h8m1 0h1m2 0h1m2 0h1m1 0h2m2 0h2m3 0h1m8 0h2m1 0h1m1 0h4m2 0h2m1 0h1m1 0h1m1 0h3m1 0h6m2 0h1m3 0h1m2 0h1m1 0h1m1 0h1m1 0h2m3 0h1m2 0h2m1 0h4m2 0h5m1 0h2m1 0h1m1 0h4m1 0h3m5 0h1m1 0h7m2 0h2m3 0h2m3 0h2m3 0h3m1 0h1m2 0h2m1 0h5m1 0h2m1 0h2m1 0h1m9 0h1m2 0h1m3 0h1m11 0h1m4 0h5m1 0h1m1 0h4m2 0h1m1 0h2m2 0h1m1 0h1m4 0h1m7 0h2m8 0h1m2 0h2m2 0h1m1 0h1m1 0h4m1 0h8m1 0h2m2 0h1m27 0h1m11 0h1m1 0h2m4 0h1m1 0h1M0 53.5h1m3 0h1m2 0h1m6 0h2m2 0h1m2 0h1m1 0h7m1 0h1m3 0h3m1 0h5m1 0h1m1 0h4m1 0h1m1 0h1m5 0h1m2 0h3m2 0h1m1 0h1m8 0h2m2 0h1m2 0h2m1 0h6m3 0h1m1 0h1m1 0h3m3 0h1m1 0h4m3 0h2m1 0h1m1 0h1m2 0h2m3 0h2m1 0h3m3 0h2m2 0h3m1 0h1m1 0h5m2 0h1m2 0h1m6 0h1m5 0h2m4 0h1m1 0h2m1 0h1m1 0h1m2 0h5m2 0h4m9 0h5m1 0h1m1 0h2m3 0h3m1 0h4m1 0h4m1 0h1m1 0h10m1 0h1m1 0h3m3 0h2m2 0h2m1 0h5m3 0h1m2 0h1m2 0h2m2 0h1m4 0h3m2 0h1m2 0h1m1 0h2m1 0h7m2 0h1m3 0h1m2 0h1m1 0h1m7 0h2m1 0h6m1 0h3m2 0h4m1 0h2m1 0h3m1 0h2m1 0h8m4 0h1m4 0h1m1 0h1m5 0h1m3 0h1m3 0h1m10 0h1m7 0h1m1 0h1m2 0h3M0 54.5h3m3 0h3m1 0h1m2 0h3m1 0h3m2 0h3m1 0h3m2 0h2m2 0h2m7 0h1m3 0h1m5 0h1m4 0h1m3 0h1m1 0h1m4 0h1m2 0h1m1 0h1m3 0h1m2 0h2m1 0h1m1 0h1m2 0h3m2 0h1m2 0h1m6 0h1m1 0h1m2 0h1m1 0h1m6 0h2m5 0h2m1 0h1m1 0h1m1 0h1m1 0h4m3 0h2m2 0h4m1 0h1m1 0h2m1 0h2m1 0h1m1 0h4m2 0h2m2 0h1m1 0h5m1 0h1m1 0h4m1 0h1m1 0h2m1 0h6m1 0h2m1 0h1m7 0h4m2 0h3m1 0h2m1 0h2m1 0h1m3 0h5m1 0h3m2 0h3m1 0h4m2 0h2m1 0h1m2 0h2m2 0h1m2 0h1m1 0h1m2 0h2m1 0h9m1 0h1m2 0h1m1 0h1m3 0h1m3 0h1m3 0h3m1 0h1m1 0h2m2 0h2m4 0h1m4 0h2m2 0h1m1 0h1m1 0h2m1 0h1m1 0h1m1 0h3m2 0h1m1 0h6m1 0h5m1 0h2m4 0h2m2 0h1m2 0h1m6 0h2m2 0h1m2 0h1m6 0h1m13 0h1m3 0h1m1 0h2m2 0h1m1 0h1M1 55.5h1m2 0h3m2 0h6m1 0h2m1 0h3m2 0h2m1 0h2m1 0h1m1 0h1m1 0h1m1 0h1m1 0h1m2 0h4m2 0h3m3 0h3m1 0h1m1 0h2m1 0h1m2 0h1m9 0h2m6 0h5m2 0h3m1 0h2m1 0h1m1 0h1m4 0h1m2 0h2m2 0h1m2 0h2m2 0h2m3 0h3m1 0h3m3 0h3m3 0h1m3 0h2m1 0h4m2 0h1m3 0h2m1 0h1m2 0h1m3 0h4m1 0h1m1 0h3m1 0h6m1 0h1m2 0h2m1 0h3m2 0h4m2 0h1m1 0h1m4 0h2m3 0h2m2 0h1m1 0h5m1 0h1m2 0h1m1 0h7m1 0h2m6 0h3m2 0h1m2 0h5m1 0h1m1 0h1m1 0h3m2 0h1m5 0h2m1 0h1m2 0h1m6 0h1m1 0h1m1 0h1m2 0h2m1 0h1m1 0h5m1 0h1m5 0h2m2 0h1m3 0h2m2 0h1m5 0h2m1 0h1m2 0h1m1 0h1m1 0h4m2 0h5m5 0h7m1 0h1m1 0h2m4 0h2m1 0h1m1 0h2m1 0h1m18 0h2m13 0h1M0 56.5h1m3 0h2m1 0h1m4 0h1m1 0h1m1 0h5m1 0h1m2 0h12m3 0h1m2 0h7m3 0h1m2 0h1m7 0h3m3 0h2m3 0h1m3 0h2m2 0h4m1 0h2m2 0h6m7 0h2m2 0h1m3 0h1m3 0h4m8 0h1m1 0h6m2 0h2m3 0h6m2 0h1m1 0h1m1 0h3m1 0h1m1 0h1m1 0h2m2 0h2m2 0h1m1 0h1m1 0h1m1 0h3m1 0h2m1 0h6m2 0h2m3 0h1m4 0h2m4 0h1m1 0h7m1 0h1m1 0h3m1 0h10m1 0h1m1 0h1m1 0h3m1 0h2m1 0h1m3 0h1m2 0h1m1 0h1m1 0h1m1 0h1m2 0h1m1 0h3m1 0h1m1 0h1m1 0h1m5 0h1m7 0h1m2 0h4m1 0h2m1 0h1m1 0h2m4 0h1m1 0h2m2 0h4m1 0h1m1 0h1m3 0h1m2 0h3m2 0h1m1 0h2m1 0h1m1 0h2m1 0h1m1 0h8m1 0h1m1 0h1m1 0h4m1 0h2m3 0h2m3 0h2m1 0h3m3 0h1m7 0h1m2 0h1m1 0h2m2 0h1m4 0h2m4 0h1m2 0h5M0 57.5h4m1 0h3m1 0h1m2 0h1m1 0h3m1 0h9m1 0h8m1 0h1m4 0h2m1 0h1m2 0h2m2 0h1m1 0h2m1 0h2m1 0h4m3 0h1m2 0h1m1 0h1m4 0h1m3 0h4m1 0h3m2 0h6m7 0h1m2 0h2m2 0h1m1 0h1m2 0h5m1 0h2m1 0h3m1 0h6m1 0h2m2 0h4m1 0h5m2 0h1m1 0h1m3 0h2m1 0h4m4 0h1m2 0h2m1 0h9m1 0h1m2 0h3m1 0h1m3 0h1m13 0h1m2 0h3m1 0h1m1 0h1m1 0h6m1 0h2m2 0h2m1 0h1m1 0h2m1 0h4m1 0h2m3 0h1m1 0h3m7 0h2m1 0h2m1 0h1m2 0h1m2 0h2m2 0h3m2 0h1m1 0h1m1 0h2m1 0h1m2 0h5m1 0h4m1 0h3m5 0h1m2 0h3m3 0h1m4 0h5m1 0h1m1 0h11m1 0h7m1 0h1m1 0h1m1 0h1m2 0h4m6 0h1m1 0h2m1 0h4m6 0h1m1 0h1m2 0h1m1 0h1m1 0h1m1 0h8m1 0h1m1 0h2m1 0h5M0 58.5h1m2 0h2m4 0h2m1 0h2m2 0h1m1 0h1m1 0h1m1 0h4m1 0h2m5 0h2m1 0h2m1 0h1m4 0h1m7 0h3m5 0h1m2 0h1m2 0h1m1 0h2m3 0h1m2 0h3m1 0h3m1 0h4m2 0h4m1 0h1m2 0h1m1 0h1m3 0h3m1 0h2m1 0h1m3 0h2m1 0h1m2 0h11m2 0h1m1 0h1m2 0h4m1 0h3m1 0h4m3 0h2m3 0h2m1 0h1m1 0h8m1 0h8m1 0h5m1 0h1m1 0h2m1 0h1m1 0h2m10 0h1m1 0h4m1 0h8m1 0h1m1 0h6m1 0h3m3 0h3m11 0h2m1 0h1m2 0h1m3 0h1m1 0h2m2 0h2m3 0h4m6 0h1m4 0h2m1 0h8m1 0h4m2 0h1m8 0h2m4 0h1m2 0h2m3 0h2m1 0h3m1 0h12m1 0h2m1 0h1m6 0h2m1 0h1m1 0h3m1 0h3m4 0h1m1 0h4m4 0h1m1 0h1m4 0h2m2 0h3m3 0h2m1 0h2m1 0h2m1 0h2M2 59.5h4m2 0h1m2 0h2m3 0h1m1 0h4m2 0h4m2 0h3m3 0h1m1 0h1m2 0h3m1 0h2m3 0h1m1 0h2m2 0h1m6 0h1m2 0h2m1 0h1m1 0h4m3 0h1m1 0h2m1 0h3m1 0h10m8 0h4m1 0h1m3 0h8m1 0h2m1 0h2m1 0h6m1 0h2m2 0h3m1 0h2m1 0h5m1 0h2m1 0h1m1 0h3m1 0h5m1 0h5m1 0h3m1 0h2m1 0h9m1 0h4m1 0h3m10 0h1m1 0h1m2 0h3m2 0h2m1 0h6m1 0h4m2 0h1m1 0h1m4 0h1m1 0h2m1 0h1m12 0h1m4 0h2m2 0h3m1 0h3m1 0h1m2 0h4m1 0h2m1 0h8m1 0h1m2 0h2m1 0h4m5 0h1m2 0h2m1 0h1m1 0h1m1 0h4m1 0h2m2 0h2m1 0h9m1 0h2m1 0h7m1 0h2m1 0h3m1 0h4m4 0h1m1 0h1m1 0h1m1 0h1m2 0h3m1 0h1m2 0h1m1 0h1m3 0h3m1 0h5m1 0h1m2 0h2m1 0h3m2 0h3M2 60.5h2m1 0h4m1 0h2m2 0h1m1 0h1m2 0h1m1 0h3m2 0h1m2 0h1m3 0h1m8 0h1m1 0h2m7 0h6m1 0h3m4 0h2m1 0h1m1 0h2m1 0h1m2 0h2m1 0h1m1 0h7m15 0h5m1 0h3m1 0h2m1 0h1m1 0h8m2 0h1m1 0h2m2 0h6m2 0h4m2 0h1m6 0h1m1 0h1m1 0h6m1 0h5m2 0h1m1 0h1m1 0h2m1 0h2m1 0h1m1 0h2m1 0h1m1 0h4m5 0h1m7 0h1m1 0h1m1 0h1m1 0h8m1 0h1m1 0h2m2 0h2m1 0h1m1 0h2m2 0h1m4 0h2m2 0h1m1 0h1m2 0h1m1 0h1m6 0h1m1 0h2m1 0h3m3 0h1m1 0h1m1 0h3m2 0h5m2 0h1m1 0h1m1 0h1m1 0h1m2 0h2m1 0h1m11 0h3m1 0h2m2 0h4m1 0h3m1 0h3m1 0h3m1 0h4m1 0h3m1 0h6m1 0h2m8 0h9m1 0h1m1 0h1m1 0h1m5 0h2m3 0h4m1 0h1m2 0h3m1 0h3m2 0h2m1 0h1m2 0h2M1 61.5h1m10 0h3m4 0h1m2 0h1m7 0h1m1 0h1m20 0h1m3 0h1m1 0h6m1 0h1m1 0h1m2 0h3m1 0h1m1 0h4m1 0h1m1 0h1m1 0h2m18 0h1m1 0h1m2 0h5m1 0h1m4 0h1m2 0h1m3 0h2m5 0h1m4 0h1m1 0h1m1 0h2m11 0h2m3 0h2m2 0h6m1 0h3m2 0h3m7 0h1m1 0h1m5 0h1m13 0h2m2 0h1m1 0h1m3 0h1m5 0h2m4 0h1m28 0h1m4 0h1m2 0h1m1 0h2m1 0h1m3 0h4m2 0h4m4 0h1m1 0h1m5 0h1m10 0h1m1 0h2m2 0h6m3 0h1m1 0h1m5 0h1m1 0h1m4 0h1m1 0h1m1 0h1m1 0h1m16 0h1m2 0h3m3 0h1m1 0h1m1 0h5m2 0h1m1 0h8m2 0h1m1 0h1m2 0h5m1 0h1m2 0h2M3 62.5h1m3 0h1m3 0h1m1 0h1m1 0h1m1 0h2m1 0h3m1 0h1m1 0h6m1 0h6m1 0h2m2 0h2m1 0h4m6 0h1m4 0h2m1 0h1m1 0h1m3 0h1m2 0h7m2 0h1m2 0h2m2 0h5m2 0h3m1 0h2m11 0h2m1 0h4m1 0h1m1 0h1m2 0h1m1 0h1m4 0h1m2 0h2m2 0h10m3 0h1m2 0h1m2 0h1m7 0h1m3 0h1m1 0h3m1 0h1m1 0h1m2 0h1m1 0h1m4 0h2m3 0h1m1 0h1m1 0h3m1 0h1m2 0h1m3 0h2m1 0h1m1 0h6m2 0h6m1 0h1m1 0h2m1 0h4m2 0h2m2 0h1m1 0h3m2 0h1m1 0h6m8 0h1m3 0h1m1 0h1m2 0h3m2 0h3m1 0h1m1 0h2m1 0h6m1 0h1m1 0h1m1 0h2m4 0h2m1 0h1m8 0h1m4 0h1m8 0h1m5 0h1m2 0h2m1 0h5m6 0h2m20 0h2m3 0h3m2 0h3m3 0h1m3 0h1m2 0h1m1 0h1m2 0h2m3 0h1m1 0h1M5 63.5h4m1 0h4m4 0h1m4 0h2m4 0h2m2 0h1m1 0h2m1 0h1m1 0h3m1 0h1m1 0h2m1 0h1m1 0h1m8 0h8m1 0h3m2 0h1m1 0h1m1 0h4m1 0h1m1 0h1m1 0h1m2 0h1m3 0h1m5 0h4m6 0h1m1 0h1m1 0h2m4 0h4m2 0h1m2 0h3m2 0h9m1 0h1m1 0h5m1 0h2m1 0h1m1 0h3m1 0h1m1 0h2m1 0h10m1 0h2m1 0h2m3 0h1m6 0h1m7 0h2m6 0h2m2 0h1m1 0h3m1 0h1m6 0h1m3 0h1m5 0h1m2 0h1m4 0h1m7 0h2m3 0h1m2 0h1m3 0h2m2 0h1m1 0h2m1 0h1m2 0h1m1 0h1m1 0h2m1 0h1m1 0h1m2 0h1m4 0h2m21 0h2m1 0h1m2 0h4m1 0h7m1 0h1m3 0h1m1 0h4m1 0h2m1 0h1m3 0h1m1 0h3m1 0h2m1 0h2m11 0h1m2 0h2m1 0h1m1 0h1m2 0h2m2 0h1m1 0h1m2 0h4m1 0h4m1 0h4m1 0h6M1 64.5h2m2 0h2m2 0h4m1 0h2m2 0h1m12 0h1m6 0h1m1 0h1m7 0h1m2 0h1m1 0h3m3 0h3m4 0h1m1 0h1m1 0h3m1 0h1m4 0h2m1 0h1m9 0h1m5 0h1m1 0h1m1 0h2m4 0h1m1 0h3m1 0h4m1 0h1m2 0h1m1 0h2m2 0h1m2 0h1m1 0h2m2 0h4m2 0h1m2 0h1m1 0h2m1 0h1m1 0h3m1 0h2m1 0h1m2 0h8m1 0h2m5 0h1m3 0h1m2 0h1m1 0h1m19 0h1m1 0h4m1 0h1m5 0h1m29 0h1m15 0h4m1 0h3m1 0h3m4 0h1m2 0h1m7 0h1m16 0h1m5 0h8m3 0h3m1 0h3m1 0h3m2 0h1m2 0h3m3 0h12m5 0h1m2 0h2m2 0h1m1 0h8m3 0h2m1 0h3m1 0h1m1 0h5m1 0h2m2 0h1m4 0h5M2 65.5h1m1 0h7m2 0h2m3 0h1m16 0h1m8 0h1m2 0h1m3 0h1m1 0h3m4 0h2m1 0h1m4 0h8m8 0h2m1 0h1m7 0h1m1 0h1m5 0h1m4 0h2m1 0h1m1 0h1m1 0h5m1 0h3m1 0h4m2 0h7m1 0h2m1 0h3m1 0h1m1 0h1m5 0h1m3 0h3m1 0h5m2 0h2m1 0h1m15 0h1m20 0h8m1 0h1m4 0h1m16 0h1m10 0h1m10 0h2m2 0h6m1 0h6m1 0h2m3 0h1m4 0h3m20 0h1m1 0h1m1 0h9m1 0h1m1 0h4m3 0h2m3 0h1m2 0h1m3 0h7m1 0h1m1 0h2m1 0h2m5 0h1m2 0h4m1 0h6m2 0h7m1 0h1m1 0h1m1 0h1m2 0h2m4 0h2m5 0h2M0 66.5h4m1 0h2m1 0h3m1 0h1m1 0h1m5 0h1m2 0h1m5 0h1m4 0h2m17 0h1m1 0h6m2 0h5m1 0h3m1 0h1m8 0h2m2 0h1m3 0h2m8 0h1m2 0h1m2 0h2m1 0h1m2 0h4m1 0h4m2 0h2m1 0h3m7 0h3m3 0h3m4 0h1m2 0h1m1 0h2m2 0h8m1 0h1m1 0h3m3 0h6m30 0h1m1 0h2m2 0h2m1 0h1m7 0h1m1 0h1m13 0h2m13 0h1m1 0h1m2 0h6m1 0h8m3 0h1m1 0h3m3 0h1m2 0h1m18 0h5m1 0h5m1 0h2m1 0h5m1 0h1m1 0h1m1 0h3m1 0h1m2 0h10m2 0h2m2 0h3m5 0h1m1 0h2m1 0h7m1 0h1m1 0h2m1 0h2m1 0h1m1 0h2m1 0h16m2 0h1M1 67.5h1m2 0h2m2 0h1m1 0h3m3 0h1m2 0h1m9 0h1m2 0h1m15 0h2m2 0h4m2 0h6m1 0h2m1 0h2m1 0h3m5 0h1m1 0h1m2 0h1m15 0h1m7 0h6m1 0h4m4 0h3m2 0h1m1 0h1m1 0h3m4 0h1m2 0h1m4 0h1m3 0h1m1 0h1m1 0h1m1 0h1m1 0h8m1 0h2m37 0h5m4 0h1m3 0h1m14 0h1m3 0h1m10 0h2m3 0h1m8 0h6m4 0h1m1 0h1m2 0h1m1 0h1m3 0h1m26 0h2m2 0h1m1 0h3m1 0h6m1 0h3m1 0h2m3 0h5m1 0h3m1 0h3m2 0h5m1 0h5m9 0h1m1 0h1m1 0h1m2 0h1m3 0h2m1 0h2m1 0h1m3 0h4m1 0h2m4 0h1m2 0h4m1 0h3M4 68.5h1m1 0h1m3 0h3m6 0h1m12 0h2m1 0h1m1 0h1m13 0h1m1 0h2m1 0h2m1 0h6m2 0h4m2 0h1m1 0h1m1 0h1m14 0h1m13 0h1m1 0h3m2 0h2m3 0h5m3 0h1m1 0h2m1 0h2m1 0h1m1 0h1m3 0h1m3 0h1m4 0h1m2 0h1m1 0h1m2 0h5m1 0h2m3 0h2m8 0h1m31 0h1m1 0h1m2 0h1m1 0h1m7 0h1m38 0h4m2 0h1m1 0h1m3 0h1m3 0h2m6 0h2m23 0h1m1 0h5m1 0h4m2 0h2m2 0h4m1 0h1m2 0h1m1 0h1m2 0h4m2 0h2m1 0h3m2 0h2m1 0h1m1 0h1m1 0h2m1 0h2m1 0h1m1 0h4m1 0h1m2 0h9m1 0h1m2 0h3m2 0h3m3 0h2m1 0h2m2 0h3M0 69.5h1m1 0h1m2 0h1m1 0h2m2 0h1m5 0h1m1 0h1m3 0h2m8 0h1m14 0h1m3 0h2m2 0h1m1 0h1m1 0h4m1 0h1m4 0h3m1 0h1m4 0h1m1 0h1m2 0h1m1 0h1m1 0h1m1 0h1m9 0h1m5 0h2m3 0h3m1 0h1m1 0h4m1 0h2m2 0h1m1 0h1m1 0h2m3 0h2m1 0h3m2 0h1m3 0h1m1 0h1m4 0h2m1 0h1m1 0h1m1 0h2m2 0h1m1 0h4m1 0h1m1 0h1m7 0h2m25 0h1m5 0h1m9 0h1m12 0h1m20 0h1m1 0h2m2 0h4m3 0h1m3 0h2m5 0h1m4 0h1m8 0h1m13 0h1m2 0h9m1 0h2m2 0h3m2 0h2m6 0h2m1 0h2m2 0h3m1 0h1m1 0h7m1 0h1m3 0h2m1 0h1m1 0h5m1 0h1m1 0h4m1 0h2m1 0h2m1 0h3m1 0h5m1 0h5m3 0h1m1 0h2m1 0h3M0 70.5h1m1 0h2m1 0h1m1 0h5m6 0h1m10 0h1m18 0h1m3 0h1m2 0h1m1 0h1m1 0h3m1 0h3m2 0h1m2 0h1m1 0h1m11 0h1m10 0h1m6 0h1m1 0h2m2 0h4m1 0h1m4 0h1m1 0h2m1 0h1m1 0h1m1 0h1m1 0h1m1 0h2m2 0h2m2 0h1m7 0h2m5 0h4m1 0h1m2 0h2m2 0h2m1 0h5m32 0h2m2 0h1m1 0h1m3 0h1m28 0h1m12 0h1m2 0h1m1 0h8m1 0h1m3 0h1m3 0h2m10 0h1m2 0h2m16 0h2m1 0h1m2 0h2m1 0h5m3 0h1m2 0h2m4 0h1m4 0h2m5 0h1m1 0h1m2 0h5m5 0h1m3 0h4m1 0h1m1 0h2m1 0h1m1 0h6m1 0h2m1 0h8m1 0h2m2 0h1m1 0h4m1 0h1m1 0h1M0 71.5h1m1 0h2m2 0h2m5 0h1m5 0h1m17 0h1m13 0h1m3 0h8m2 0h4m4 0h1m3 0h1m4 0h1m22 0h1m1 0h1m1 0h5m1 0h3m2 0h1m1 0h1m2 0h3m1 0h1m2 0h3m2 0h2m1 0h2m1 0h1m4 0h1m3 0h1m1 0h2m1 0h4m1 0h1m1 0h1m4 0h1m2 0h1m1 0h2m3 0h2m27 0h4m5 0h1m9 0h1m18 0h1m13 0h11m2 0h1m3 0h1m34 0h3m2 0h3m1 0h3m1 0h1m1 0h2m1 0h1m3 0h1m7 0h5m4 0h2m1 0h1m2 0h4m8 0h1m1 0h1m1 0h1m2 0h3m1 0h2m2 0h2m2 0h2m2 0h2m3 0h1m1 0h1m7 0h3m2 0h1m2 0h1M0 72.5h1m1 0h1m3 0h2m1 0h4m10 0h1m3 0h1m2 0h1m5 0h1m15 0h3m3 0h1m1 0h3m1 0h1m1 0h1m1 0h1m1 0h1m5 0h1m6 0h1m23 0h1m1 0h2m1 0h3m1 0h1m4 0h1m1 0h1m5 0h2m2 0h1m1 0h1m1 0h2m4 0h1m2 0h1m5 0h2m1 0h1m4 0h2m1 0h3m2 0h2m1 0h1m4 0h1m31 0h1m2 0h2m5 0h1m7 0h1m2 0h1m30 0h1m1 0h3m1 0h2m1 0h2m3 0h1m37 0h1m1 0h2m1 0h7m1 0h6m1 0h1m2 0h3m2 0h1m1 0h2m2 0h1m1 0h1m6 0h2m5 0h1m5 0h1m1 0h4m1 0h1m2 0h4m4 0h1m1 0h2m1 0h2m1 0h1m1 0h4m3 0h1m3 0h1m1 0h2m1 0h1m2 0h1M0 73.5h1m1 0h3m2 0h1m5 0h1m4 0h1m33 0h3m4 0h1m1 0h1m2 0h1m1 0h4m2 0h1m9 0h1m13 0h1m8 0h1m2 0h1m1 0h2m1 0h3m1 0h1m3 0h3m5 0h1m3 0h1m1 0h2m2 0h1m4 0h1m4 0h1m1 0h1m3 0h2m2 0h2m2 0h1m6 0h1m2 0h1m34 0h1m11 0h1m23 0h1m4 0h1m12 0h1m1 0h2m3 0h2m8 0h1m2 0h1m6 0h1m24 0h1m1 0h1m1 0h2m1 0h5m1 0h2m4 0h1m1 0h2m1 0h1m1 0h1m4 0h2m3 0h1m1 0h1m4 0h2m4 0h1m2 0h1m3 0h3m1 0h11m1 0h1m1 0h1m1 0h1m1 0h1m1 0h1m1 0h1m3 0h2m1 0h1m1 0h1m2 0h1m6 0h1M0 74.5h2m8 0h1m16 0h1m26 0h2m4 0h1m1 0h1m1 0h3m1 0h3m2 0h1m15 0h1m15 0h6m2 0h8m2 0h1m7 0h1m2 0h1m1 0h1m3 0h1m2 0h1m11 0h2m1 0h3m5 0h3m1 0h1m2 0h1m36 0h1m8 0h1m42 0h1m2 0h1m1 0h4m42 0h1m1 0h5m1 0h1m1 0h1m2 0h2m1 0h1m2 0h1m3 0h2m1 0h1m3 0h1m7 0h1m2 0h1m2 0h1m9 0h4m2 0h2m1 0h2m1 0h2m2 0h2m1 0h1m2 0h1m1 0h4m1 0h3m1 0h3m7 0h1m3 0h1M1 75.5h2m2 0h1m2 0h2m1 0h1m11 0h1m29 0h1m1 0h4m1 0h2m1 0h1m3 0h1m3 0h1m9 0h1m24 0h2m1 0h3m1 0h1m2 0h1m7 0h2m2 0h4m1 0h3m11 0h1m1 0h1m2 0h1m3 0h2m1 0h2m4 0h2m43 0h2m14 0h1m24 0h1m7 0h1m2 0h2m2 0h1m4 0h1m40 0h2m1 0h1m1 0h2m3 0h1m1 0h1m1 0h4m1 0h1m1 0h1m1 0h1m1 0h1m7 0h1m2 0h1m5 0h1m4 0h1m2 0h2m1 0h1m3 0h4m1 0h3m1 0h1m5 0h4m5 0h2m10 0h3m3 0h1m3 0h1M4 76.5h1m3 0h1m1 0h1m44 0h7m2 0h1m1 0h1m1 0h6m1 0h1m19 0h1m9 0h1m1 0h1m1 0h3m1 0h5m4 0h2m1 0h1m1 0h1m1 0h1m1 0h1m2 0h1m3 0h2m3 0h1m4 0h1m1 0h1m5 0h1m3 0h1m1 0h1m2 0h1m28 0h1m13 0h4m11 0h1m37 0h1m3 0h3m2 0h1m2 0h1m41 0h9m2 0h1m2 0h2m2 0h1m5 0h1m12 0h5m1 0h1m8 0h5m3 0h5m1 0h3m2 0h1m1 0h4m2 0h1m4 0h1m3 0h3m7 0h1m1 0h1M0 77.5h1m3 0h2m3 0h2m31 0h1m9 0h2m4 0h2m2 0h1m7 0h1m3 0h1m2 0h2m2 0h1m24 0h1m1 0h2m1 0h2m2 0h1m7 0h1m1 0h2m4 0h1m5 0h1m4 0h3m2 0h1m1 0h1m5 0h1m4 0h2m2 0h1m9 0h1m1 0h1m2 0h1m79 0h1m1 0h2m1 0h5m2 0h1m3 0h1m37 0h2m1 0h2m1 0h1m3 0h1m3 0h2m1 0h1m4 0h1m8 0h1m6 0h1m13 0h2m1 0h1m1 0h1m3 0h1m1 0h6m3 0h4m1 0h1m4 0h1m4 0h2m12 0h1M2 78.5h1m2 0h1m47 0h2m1 0h2m1 0h2m3 0h1m41 0h5m2 0h5m2 0h1m1 0h1m1 0h1m2 0h1m3 0h2m3 0h2m17 0h3m3 0h1m11 0h1m7 0h1m79 0h3m1 0h1m1 0h3m1 0h1m11 0h1m28 0h10m1 0h1m1 0h3m1 0h2m2 0h1m1 0h4m12 0h1m1 0h1m1 0h1m4 0h4m1 0h3m4 0h4m1 0h2m3 0h1m1 0h2m1 0h1m3 0h1m1 0h1m13 0h1m1 0h2m4 0h1M0 79.5h1m6 0h1m1 0h1m2 0h1m24 0h1m16 0h5m4 0h1m11 0h1m29 0h2m1 0h1m1 0h2m1 0h2m5 0h1m6 0h2m2 0h1m3 0h2m11 0h1m1 0h1m2 0h1m1 0h2m3 0h1m2 0h1m45 0h1m2 0h2m20 0h1m26 0h2m2 0h1m3 0h2m5 0h1m3 0h1m2 0h1m31 0h1m2 0h4m2 0h2m1 0h4m2 0h2m1 0h1m1 0h1m4 0h1m17 0h1m4 0h1m1 0h3m1 0h1m1 0h1m2 0h1m1 0h3m3 0h2m2 0h1m10 0h3m1 0h1m2 0h1m7 0h1M0 80.5h2m2 0h3m6 0h1m39 0h5m7 0h1m4 0h1m1 0h2m30 0h2m1 0h4m1 0h1m4 0h2m2 0h2m2 0h3m6 0h1m2 0h1m1 0h1m12 0h1m3 0h3m3 0h2m15 0h1m28 0h1m5 0h1m22 0h1m23 0h1m2 0h4m44 0h2m1 0h5m1 0h1m1 0h3m1 0h1m1 0h1m1 0h1m1 0h1m4 0h1m1 0h1m4 0h2m2 0h1m3 0h1m4 0h1m3 0h2m2 0h1m1 0h1m2 0h5m1 0h5m1 0h2m2 0h2m1 0h2m15 0h2m6 0h1M0 81.5h2m1 0h1m2 0h1m1 0h2m7 0h1m36 0h1m2 0h2m3 0h5m5 0h1m7 0h1m26 0h2m2 0h3m1 0h2m1 0h2m1 0h1m12 0h1m1 0h1m4 0h1m2 0h1m2 0h1m8 0h1m2 0h1m48 0h2m51 0h1m1 0h1m1 0h3m3 0h1m2 0h1m4 0h2m31 0h2m1 0h2m1 0h1m2 0h1m1 0h1m6 0h2m2 0h1m2 0h1m1 0h1m2 0h1m1 0h1m1 0h1m6 0h1m4 0h1m4 0h1m1 0h1m1 0h6m1 0h1m1 0h1m2 0h2m1 0h2m3 0h2m1 0h2m1 0h3m4 0h1m5 0h2m3 0h2M1 82.5h2m3 0h1m45 0h1m27 0h1m24 0h1m1 0h3m1 0h3m1 0h1m4 0h1m3 0h1m3 0h1m3 0h2m6 0h1m3 0h1m11 0h2m2 0h2m1 0h1m44 0h1m52 0h1m3 0h2m1 0h2m2 0h1m3 0h1m35 0h2m1 0h2m1 0h5m1 0h1m2 0h2m2 0h4m5 0h2m11 0h1m2 0h1m1 0h2m1 0h3m3 0h6m3 0h1m4 0h2m3 0h2m2 0h1m2 0h2m6 0h1m1 0h1m7 0h1M8 83.5h1m15 0h1m26 0h4m1 0h2m7 0h1m4 0h1m7 0h1m26 0h5m1 0h2m1 0h1m1 0h2m2 0h2m4 0h1m5 0h1m1 0h1m13 0h1m6 0h2m1 0h1m1 0h1m1 0h1m2 0h1m42 0h1m7 0h1m44 0h2m1 0h2m1 0h2m1 0h1m42 0h1m1 0h2m1 0h2m1 0h3m2 0h1m2 0h1m3 0h2m4 0h1m2 0h1m2 0h4m7 0h1m8 0h4m1 0h1m1 0h3m1 0h2m1 0h4m1 0h2m2 0h1m1 0h1m3 0h1m1 0h1m7 0h2m4 0h1m3 0h2M0 84.5h3m1 0h1m5 0h1m25 0h1m18 0h1m2 0h1m45 0h2m1 0h7m3 0h1m2 0h1m1 0h1m2 0h1m12 0h1m16 0h2m1 0h1m2 0h2m45 0h1m1 0h1m24 0h1m24 0h3m1 0h1m1 0h3m1 0h1m1 0h1m1 0h1m2 0h1m34 0h1m1 0h3m1 0h1m2 0h1m1 0h4m3 0h2m4 0h1m1 0h2m2 0h2m1 0h1m6 0h1m2 0h2m1 0h4m3 0h2m1 0h1m1 0h1m1 0h6m2 0h1m1 0h2m2 0h1m4 0h1m5 0h1m2 0h1m1 0h4m4 0h1m2 0h1m1 0h1M0 85.5h4m4 0h3m14 0h1m29 0h1m4 0h1m7 0h1m37 0h1m1 0h1m1 0h4m3 0h5m1 0h1m6 0h1m4 0h2m18 0h1m2 0h1m3 0h1m1 0h2m8 0h1m36 0h1m4 0h1m4 0h1m37 0h1m2 0h3m3 0h1m2 0h1m41 0h1m3 0h3m2 0h3m1 0h2m6 0h3m4 0h3m5 0h1m1 0h2m5 0h1m6 0h2m1 0h4m1 0h2m4 0h2m1 0h1m5 0h1m1 0h2m4 0h1m3 0h1m2 0h1m3 0h1m1 0h1M0 86.5h1m1 0h2m48 0h1m2 0h1m2 0h2m1 0h1m43 0h4m6 0h1m1 0h1m3 0h1m1 0h1m6 0h1m7 0h2m1 0h1m14 0h1m4 0h1m1 0h1m4 0h1m39 0h1m12 0h1m39 0h1m2 0h3m5 0h1m39 0h1m5 0h2m1 0h3m3 0h1m5 0h1m4 0h1m11 0h1m1 0h1m1 0h3m3 0h1m1 0h2m4 0h4m10 0h2m2 0h2m1 0h1m1 0h1m6 0h1m11 0h1m1 0h1m2 0h1M0 87.5h1m2 0h1m3 0h1m3 0h2m5 0h1m15 0h1m17 0h1m5 0h3m3 0h2m39 0h3m1 0h3m1 0h1m5 0h1m15 0h1m5 0h2m1 0h1m11 0h1m6 0h1m6 0h1m40 0h1m16 0h1m31 0h2m1 0h2m2 0h2m3 0h1m1 0h1m1 0h1m3 0h1m31 0h8m2 0h1m1 0h1m1 0h3m2 0h1m6 0h1m10 0h2m1 0h1m7 0h2m3 0h5m6 0h3m3 0h2m3 0h1m1 0h1m2 0h1m4 0h2m2 0h1m7 0h1m2 0h2M3 88.5h3m22 0h1m5 0h1m17 0h5m3 0h1m11 0h1m32 0h5m1 0h1m1 0h1m2 0h1m8 0h1m2 0h1m5 0h1m7 0h1m13 0h1m5 0h1m1 0h1m4 0h1m38 0h1m51 0h4m4 0h1m1 0h1m2 0h1m38 0h2m1 0h1m1 0h2m4 0h2m3 0h1m4 0h1m2 0h1m6 0h1m1 0h1m1 0h1m1 0h3m3 0h1m3 0h1m1 0h1m1 0h1m1 0h1m1 0h3m1 0h3m5 0h1m2 0h2m1 0h1m2 0h4m1 0h1m2 0h1m7 0h1m2 0h1m6 0h2M0 89.5h1m3 0h1m3 0h1m43 0h1m2 0h2m6 0h1m6 0h1m1 0h1m33 0h3m1 0h2m8 0h1m13 0h2m20 0h1m2 0h2m2 0h1m44 0h1m6 0h1m47 0h1m10 0h1m37 0h3m2 0h1m1 0h1m1 0h2m2 0h2m3 0h3m7 0h1m2 0h1m1 0h1m7 0h3m11 0h1m1 0h4m2 0h1m6 0h2m4 0h2m5 0h2m15 0h1M1 90.5h1m3 0h1m5 0h1m40 0h2m6 0h1m44 0h2m2 0h5m1 0h2m21 0h1m4 0h1m1 0h1m9 0h3m6 0h1m43 0h3m4 0h1m5 0h1m38 0h1m6 0h1m1 0h1m9 0h1m1 0h1m31 0h3m1 0h1m1 0h2m2 0h1m1 0h6m1 0h2m2 0h1m5 0h2m10 0h1m2 0h2m2 0h1m5 0h3m1 0h3m2 0h3m4 0h2m1 0h1m4 0h2m1 0h2m2 0h1m1 0h1m2 0h1m6 0h1m3 0h2M0 91.5h2m2 0h1m2 0h2m20 0h1m21 0h1m3 0h1m1 0h1m1 0h1m44 0h5m1 0h3m4 0h2m27 0h1m9 0h1m21 0h1m3 0h1m78 0h2m2 0h1m12 0h1m1 0h1m32 0h4m1 0h3m6 0h3m2 0h1m5 0h1m7 0h1m9 0h1m2 0h1m3 0h1m1 0h2m1 0h3m1 0h1m1 0h2m5 0h1m3 0h1m5 0h1m2 0h1m6 0h1m6 0h1m1 0h1m2 0h1M0 92.5h3m6 0h1m18 0h1m23 0h1m7 0h1m1 0h1m42 0h1m2 0h1m1 0h1m5 0h1m1 0h1m7 0h1m8 0h1m17 0h1m4 0h2m48 0h2m1 0h1m3 0h2m5 0h1m37 0h1m1 0h3m2 0h1m4 0h1m18 0h1m21 0h1m1 0h2m1 0h3m2 0h1m2 0h1m2 0h2m1 0h2m6 0h1m5 0h1m4 0h1m6 0h1m6 0h5m1 0h2m7 0h1m12 0h1m15 0h1M0 93.5h1m4 0h2m1 0h1m43 0h2m3 0h1m1 0h1m2 0h1m43 0h4m6 0h1m3 0h1m16 0h1m1 0h1m7 0h1m5 0h1m2 0h4m1 0h1m49 0h1m49 0h6m3 0h1m41 0h2m1 0h1m1 0h1m2 0h1m1 0h2m1 0h4m2 0h1m4 0h1m2 0h1m5 0h1m4 0h1m12 0h1m2 0h8m3 0h1m2 0h1m2 0h1m7 0h2m3 0h2m1 0h2m1 0h1m6 0h1m5 0h1M0 94.5h1m1 0h1m49 0h2m1 0h1m1 0h1m3 0h1m44 0h3m1 0h3m2 0h3m3 0h1m2 0h1m4 0h1m9 0h1m2 0h1m1 0h1m4 0h1m1 0h1m3 0h4m51 0h2m3 0h1m3 0h1m41 0h3m2 0h1m2 0h1m43 0h1m1 0h2m1 0h2m1 0h1m1 0h3m1 0h1m1 0h1m3 0h1m3 0h2m13 0h1m3 0h2m3 0h1m1 0h1m3 0h2m1 0h1m1 0h2m1 0h3m1 0h1m5 0h1m1 0h1m2 0h3m1 0h1m9 0h1m5 0h1m2 0h1M0 95.5h2m1 0h1m48 0h1m1 0h2m10 0h1m37 0h1m1 0h1m2 0h2m1 0h1m4 0h1m6 0h1m4 0h1m1 0h2m3 0h1m1 0h1m10 0h3m5 0h1m1 0h2m1 0h1m2 0h2m2 0h1m45 0h1m46 0h2m13 0h1m35 0h1m1 0h4m1 0h1m1 0h2m4 0h1m2 0h1m1 0h1m1 0h1m7 0h2m5 0h1m2 0h2m3 0h3m2 0h1m2 0h7m1 0h2m1 0h1m10 0h1m2 0h1m4 0h1m2 0h1m2 0h1m2 0h1m2 0h1m6 0h1M0 96.5h1m1 0h1m1 0h1m34 0h1m9 0h1m2 0h1m1 0h1m10 0h1m2 0h1m4 0h1m30 0h4m2 0h1m5 0h1m2 0h1m5 0h3m2 0h1m21 0h1m1 0h1m2 0h1m1 0h2m2 0h1m1 0h1m42 0h3m1 0h1m9 0h1m39 0h1m2 0h1m5 0h1m4 0h1m35 0h1m4 0h2m2 0h1m1 0h1m2 0h1m8 0h1m5 0h1m4 0h1m2 0h1m4 0h1m2 0h2m5 0h3m1 0h1m1 0h1m3 0h4m1 0h2m4 0h1m1 0h1m2 0h2m3 0h1m5 0h1m8 0h1M0 97.5h1m5 0h1m47 0h1m9 0h1m1 0h1m38 0h3m1 0h1m1 0h3m3 0h1m1 0h1m15 0h1m4 0h1m14 0h2m1 0h1m49 0h1m1 0h2m48 0h3m1 0h2m16 0h1m29 0h1m1 0h1m8 0h1m2 0h2m2 0h1m5 0h1m3 0h2m6 0h2m2 0h1m5 0h1m7 0h4m2 0h6m2 0h1m1 0h1m5 0h1m2 0h1m1 0h1m5 0h1M0 98.5h1m6 0h1m3 0h1m40 0h1m2 0h1m3 0h1m1 0h1m44 0h2m3 0h1m1 0h1m4 0h1m3 0h1m11 0h1m18 0h1m2 0h4m6 0h1m42 0h1m2 0h2m50 0h3m6 0h1m40 0h1m2 0h2m1 0h1m2 0h3m3 0h3m1 0h1m1 0h1m7 0h1m9 0h1m8 0h2m2 0h2m1 0h1m1 0h3m4 0h1m3 0h3m1 0h1m1 0h1m4 0h1m4 0h2m9 0h1m3 0h1m1 0h1M1 99.5h1m4 0h1m46 0h1m7 0h1m8 0h1m37 0h3m1 0h3m2 0h1m3 0h1m2 0h1m1 0h1m9 0h1m14 0h1m3 0h3m7 0h1m48 0h2m44 0h2m2 0h1m48 0h3m1 0h2m1 0h1m10 0h1m1 0h1m9 0h1m4 0h1m9 0h1m4 0h1m2 0h1m1 0h6m1 0h1m2 0h1m1 0h2m1 0h1m1 0h1m2 0h1m2 0h1m2 0h1m1 0h1m3 0h1m6 0h1m2 0h2M0 100.5h1m1 0h1m2 0h1m4 0h1m5 0h1m35 0h1m14 0h2m7 0h1m27 0h1m1 0h1m1 0h2m1 0h1m1 0h1m2 0h1m16 0h1m13 0h1m5 0h1m1 0h2m5 0h1m6 0h1m38 0h3m3 0h1m46 0h1m1 0h2m7 0h2m40 0h2m2 0h2m2 0h1m3 0h4m1 0h2m1 0h2m4 0h2m8 0h1m5 0h1m6 0h1m1 0h2m3 0h1m1 0h4m6 0h2m3 0h1m5 0h1m7 0h2m1 0h3m3 0h1M0 101.5h1m2 0h2m4 0h1m2 0h1m41 0h1m50 0h7m6 0h1m2 0h2m8 0h1m6 0h1m3 0h1m12 0h5m1 0h1m1 0h1m44 0h1m1 0h1m2 0h1m47 0h2m4 0h2m43 0h4m1 0h4m2 0h1m3 0h2m1 0h4m1 0h1m16 0h1m5 0h1m4 0h1m1 0h3m2 0h2m4 0h1m3 0h1m2 0h1m1 0h4m3 0h2m10 0h1m2 0h1m7 0h1M2 102.5h1m1 0h1m23 0h1m36 0h1m9 0h1m28 0h1m2 0h1m2 0h5m1 0h2m1 0h1m1 0h1m2 0h1m7 0h1m10 0h1m4 0h1m8 0h2m8 0h1m40 0h3m49 0h2m1 0h1m1 0h1m1 0h1m45 0h3m2 0h1m2 0h1m7 0h1m4 0h1m1 0h1m3 0h1m4 0h1m9 0h2m2 0h1m3 0h1m2 0h1m1 0h4m1 0h1m1 0h1m4 0h1m4 0h1m1 0h1m1 0h2m13 0h1m10 0h1M0 103.5h1m1 0h1m1 0h2m4 0h1m49 0h1m44 0h1m1 0h1m1 0h2m4 0h1m1 0h1m8 0h1m2 0h1m9 0h2m12 0h1m2 0h1m1 0h1m1 0h2m4 0h1m42 0h1m50 0h1m4 0h1m4 0h1m41 0h3m1 0h1m2 0h1m1 0h1m6 0h1m1 0h1m1 0h1m1 0h1m2 0h1m2 0h1m1 0h1m7 0h1m14 0h1m1 0h4m8 0h1m2 0h1m7 0h1m1 0h1m11 0h1m6 0h1m1 0h1m1 0h1M8 104.5h2m42 0h1m1 0h1m1 0h1m48 0h2m4 0h3m2 0h2m6 0h1m28 0h1m1 0h1m4 0h2m46 0h1m51 0h2m4 0h2m51 0h1m3 0h1m10 0h1m1 0h2m3 0h1m5 0h1m17 0h3m2 0h6m2 0h1m3 0h1m2 0h1m11 0h1m10 0h2m1 0h1M2 105.5h2m1 0h1m5 0h1m1 0h1m38 0h3m7 0h1m42 0h3m1 0h1m2 0h3m2 0h3m5 0h1m4 0h1m2 0h1m17 0h1m3 0h3m6 0h1m43 0h1m2 0h1m7 0h1m41 0h3m1 0h1m46 0h3m2 0h1m1 0h2m2 0h1m1 0h1m5 0h1m1 0h1m2 0h2m9 0h1m9 0h1m1 0h1m3 0h1m1 0h1m2 0h3m5 0h2m1 0h1m2 0h1m24 0h1m2 0h1m1 0h1m1 0h2M7 106.5h1m44 0h1m11 0h1m7 0h1m32 0h1m1 0h3m2 0h2m1 0h1m2 0h1m7 0h1m11 0h1m24 0h1m44 0h1m2 0h1m52 0h2m1 0h1m44 0h3m2 0h3m1 0h2m2 0h1m3 0h2m1 0h1m5 0h1m2 0h1m9 0h1m10 0h1m2 0h3m2 0h3m5 0h1m3 0h1m8 0h1m4 0h2m9 0h1m1 0h4M4 107.5h1m19 0h1m3 0h1m29 0h2m44 0h4m3 0h1m10 0h2m2 0h1m4 0h1m13 0h1m1 0h1m5 0h1m10 0h1m43 0h2m50 0h1m3 0h1m2 0h1m2 0h1m2 0h1m39 0h2m1 0h4m3 0h1m5 0h1m8 0h1m1 0h3m3 0h1m5 0h2m9 0h1m2 0h2m1 0h2m12 0h1m1 0h1m8 0h1m5 0h2m10 0h1m2 0h1M1 108.5h1m3 0h1m1 0h1m46 0h2m1 0h3m5 0h1m39 0h1m1 0h2m1 0h2m1 0h2m2 0h1m1 0h1m1 0h1m9 0h2m14 0h1m3 0h1m3 0h1m2 0h1m49 0h1m1 0h2m3 0h1m44 0h1m1 0h1m2 0h1m4 0h1m3 0h1m37 0h1m1 0h1m2 0h1m6 0h1m6 0h1m6 0h1m3 0h2m8 0h1m1 0h1m13 0h1m3 0h5m1 0h2m3 0h1m4 0h3m4 0h1m10 0h1m1 0h1m4 0h1m1 0h1M1 109.5h1m1 0h1m1 0h1m46 0h2m2 0h1m3 0h2m44 0h4m3 0h2m6 0h1m3 0h1m11 0h3m13 0h2m2 0h1m22 0h1m79 0h1m1 0h2m1 0h1m46 0h1m1 0h1m1 0h2m1 0h3m1 0h4m11 0h1m23 0h1m4 0h1m1 0h1m6 0h1m6 0h1m3 0h1m1 0h1m2 0h1M0 110.5h1m5 0h1m48 0h1m2 0h2m45 0h2m2 0h1m2 0h2m2 0h1m1 0h2m1 0h1m5 0h1m5 0h1m1 0h1m12 0h1m7 0h1m51 0h1m51 0h2m1 0h2m12 0h1m34 0h1m1 0h6m3 0h1m1 0h1m3 0h1m5 0h1m2 0h1m7 0h1m13 0h1m2 0h1m4 0h5m2 0h4m6 0h2m6 0h1m5 0h1m1 0h1m2 0h2M0 111.5h1m5 0h1m45 0h1m1 0h1m50 0h7m2 0h1m1 0h1m3 0h1m1 0h1m14 0h2m7 0h3m2 0h1m4 0h1m6 0h1m44 0h2m50 0h1m2 0h1m1 0h2m1 0h2m4 0h1m37 0h3m1 0h1m1 0h1m3 0h3m2 0h1m2 0h1m3 0h1m6 0h1m3 0h2m1 0h1m3 0h1m12 0h9m1 0h2m1 0h3m1 0h3m2 0h2m1 0h1m7 0h2M2 112.5h1m1 0h1m48 0h1m1 0h1m13 0h1m34 0h4m1 0h1m1 0h1m2 0h1m2 0h2m2 0h1m1 0h1m15 0h1m9 0h1m3 0h1m1 0h2m2 0h1m48 0h1m2 0h1m49 0h1m1 0h1m4 0h1m9 0h1m33 0h1m2 0h2m1 0h1m1 0h1m2 0h1m4 0h2m10 0h1m12 0h1m1 0h1m6 0h1m2 0h3m2 0h1m13 0h1m3 0h1m2 0h1m18 0h1M0 113.5h2m7 0h1m42 0h1m3 0h1m6 0h1m41 0h1m1 0h4m1 0h1m2 0h1m2 0h1m1 0h1m1 0h1m7 0h1m9 0h1m8 0h1m5 0h3m2 0h1m5 0h2m42 0h3m47 0h2m1 0h1m1 0h1m47 0h1m1 0h1m1 0h2m2 0h1m1 0h3m8 0h2m2 0h2m2 0h1m8 0h1m1 0h1m3 0h2m3 0h2m2 0h2m1 0h4m1 0h1m2 0h1m3 0h1m2 0h1m9 0h2m1 0h1m15 0h1M0 114.5h2m1 0h1m6 0h1m41 0h1m53 0h3m2 0h1m4 0h1m1 0h1m6 0h1m13 0h2m10 0h1m4 0h1m5 0h1m46 0h1m55 0h1m3 0h1m1 0h1m41 0h1m1 0h1m2 0h3m9 0h1m2 0h4m1 0h2m8 0h1m4 0h1m11 0h1m1 0h4m1 0h1m4 0h1m2 0h2m3 0h1m5 0h1m2 0h1m1 0h1m5 0h1m5 0h1m6 0h1M3 115.5h1m1 0h1m1 0h1m62 0h1m34 0h7m11 0h2m3 0h1m4 0h1m4 0h1m10 0h1m14 0h1m43 0h1m3 0h1m47 0h2m2 0h2m7 0h1m1 0h1m37 0h5m5 0h1m1 0h1m1 0h1m1 0h1m5 0h1m11 0h1m8 0h2m8 0h5m2 0h4m1 0h1m1 0h1m1 0h2m1 0h2m1 0h1m25 0h1M0 116.5h1m5 0h1m56 0h1m40 0h2m2 0h1m1 0h5m2 0h1m7 0h1m10 0h1m5 0h1m12 0h3m50 0h1m57 0h2m44 0h3m1 0h1m2 0h2m1 0h3m4 0h2m2 0h1m1 0h1m3 0h1m5 0h1m2 0h1m5 0h1m1 0h1m2 0h2m1 0h1m2 0h3m2 0h5m6 0h1m5 0h2m3 0h1m6 0h2m2 0h1M0 117.5h1m3 0h1m2 0h1m44 0h1m1 0h1m5 0h1m44 0h4m1 0h1m2 0h3m5 0h1m2 0h1m18 0h1m25 0h1m42 0h1m47 0h1m1 0h2m3 0h1m1 0h1m16 0h1m25 0h2m3 0h1m4 0h2m10 0h1m4 0h1m7 0h1m5 0h2m1 0h1m4 0h1m1 0h1m1 0h2m1 0h2m1 0h1m1 0h2m4 0h1m4 0h1m9 0h1m2 0h2m8 0h1M8 118.5h1m46 0h1m14 0h1m36 0h3m3 0h1m1 0h2m2 0h1m13 0h1m22 0h1m51 0h1m3 0h1m47 0h1m51 0h2m1 0h2m1 0h1m2 0h2m1 0h1m1 0h1m1 0h1m1 0h1m3 0h1m11 0h1m9 0h1m5 0h1m2 0h1m1 0h1m1 0h2m2 0h1m2 0h1m1 0h1m21 0h1m4 0h1M0 119.5h1m7 0h1m43 0h1m14 0h1m37 0h2m3 0h2m9 0h1m20 0h1m7 0h1m11 0h1m5 0h1m39 0h1m1 0h1m1 0h1m3 0h1m22 0h1m20 0h1m2 0h1m1 0h2m48 0h1m1 0h4m2 0h1m9 0h3m10 0h1m9 0h1m6 0h2m2 0h4m2 0h1m2 0h1m5 0h1m1 0h1m1 0h1m8 0h1m5 0h1m13 0h1M0 120.5h1m2 0h1m3 0h1m45 0h1m5 0h1m1 0h2m42 0h2m2 0h1m5 0h1m4 0h1m5 0h1m4 0h1m23 0h2m51 0h1m51 0h1m2 0h1m3 0h1m1 0h1m1 0h1m14 0h1m26 0h1m3 0h1m3 0h2m1 0h1m1 0h2m2 0h2m7 0h1m7 0h2m1 0h1m4 0h2m2 0h1m3 0h1m1 0h3m2 0h1m1 0h3m1 0h1m1 0h1m19 0h1m1 0h1m8 0h1m5 0h1M0 121.5h1m1 0h1m49 0h2m5 0h1m4 0h1m39 0h3m1 0h2m2 0h1m1 0h2m5 0h1m16 0h1m5 0h1m8 0h1m1 0h1m6 0h1m9 0h1m6 0h1m52 0h1m29 0h2m1 0h2m3 0h1m43 0h1m1 0h2m5 0h2m1 0h1m2 0h1m4 0h1m1 0h1m9 0h2m15 0h1m1 0h5m1 0h2m3 0h3m4 0h1m1 0h1m3 0h1m5 0h2m1 0h1m12 0h1M0 122.5h1m1 0h2m2 0h1m45 0h1m2 0h1m1 0h1m12 0h1m34 0h3m2 0h2m1 0h1m2 0h2m2 0h1m3 0h1m8 0h1m7 0h1m14 0h2m3 0h1m46 0h1m2 0h1m48 0h2m51 0h1m2 0h8m7 0h1m4 0h2m4 0h1m1 0h1m1 0h1m5 0h2m5 0h2m2 0h4m4 0h3m2 0h1m1 0h1m4 0h1m8 0h1m1 0h2m4 0h1m5 0h1M3 123.5h3m46 0h1m22 0h1m29 0h3m1 0h4m1 0h1m1 0h1m2 0h2m10 0h1m24 0h1m51 0h2m2 0h1m47 0h2m11 0h1m40 0h1m1 0h1m1 0h2m7 0h2m2 0h5m12 0h1m2 0h1m7 0h2m3 0h2m1 0h1m1 0h1m1 0h1m1 0h1m9 0h2m1 0h1m2 0h2m9 0h1m3 0h1"/>
<path stroke="#FF7700" d="M103 0.5h1m103 0h1m50 0h1m47 0h1m1 0h4m51 0h1M99 1.5h1m3 0h1m103 0h1m50 0h2m47 0h3M103 2.5h1m102 0h2m100 0h1m1 0h2m51 0h1M103 3.5h1m90 0h1m12 0h1m51 0h1m46 0h2m2 0h1m52 0h1M101 4.5h1m1 0h1m103 0h1m100 0h1m1 0h1M101 5.5h2m103 0h2m43 0h1m49 0h1m6 0h3M103 6.5h1m93 0h1m5 0h1m3 0h1m52 0h1m40 0h1m7 0h2M103 7.5h1m103 0h1m51 0h1m46 0h2m2 0h1M207 8.5h1m96 0h3m4 0h1M47 9.5h1m3 0h1m50 0h1m38 0h1m64 0h2m51 0h1M98 10.5h1m3 0h1m78 0h1m25 0h1m100 0h1m1 0h2m47 0h1M203 11.5h1m2 0h2m97 0h1M23 12.5h1m79 0h1m50 0h1m47 0h1m3 0h2m99 0h3m1 0h1m47 0h1M51 13.5h1m47 0h1m3 0h1m51 0h1m51 0h1m51 0h1m43 0h1m3 0h1m3 0h1m51 0h1M24 14.5h1m14 0h1m11 0h1m44 0h1m102 0h1m4 0h1m1 0h1m52 0h1m48 0h1m1 0h2M95 15.5h1m7 0h1m100 0h2m1 0h1m50 0h2m42 0h1m5 0h1m2 0h1M102 16.5h1m52 0h1m35 0h1m12 0h1m1 0h2m96 0h2m2 0h2m1 0h1M103 17.5h1m45 0h1m6 0h1m40 0h1m3 0h1m2 0h1m2 0h1m95 0h1m4 0h3M46 18.5h1m3 0h1m49 0h1m2 0h1m93 0h1m101 0h1m7 0h2m2 0h1M0 19.5h1m50 0h1m144 0h1m6 0h1m2 0h2m25 0h1m10 0h1m53 0h1m6 0h1m2 0h1m1 0h1m50 0h1m1 0h1M101 20.5h1m53 0h1m28 0h1m6 0h1m10 0h1m3 0h2m46 0h1m51 0h2m1 0h1m53 0h1M21 21.5h1m76 0h1m1 0h3m88 0h1m8 0h1m4 0h1m1 0h1m48 0h1m2 0h1m40 0h1M101 22.5h1m53 0h2m45 0h1m2 0h1m1 0h1m44 0h1m2 0h1m2 0h2m43 0h1m4 0h1m1 0h1m52 0h1M103 23.5h1m102 0h2m95 0h1m3 0h4m48 0h1m3 0h1M102 24.5h2m8 0h1m42 0h1m46 0h2m3 0h1m97 0h1m2 0h1m1 0h1M103 25.5h1m103 0h1m37 0h1m2 0h1m8 0h1m42 0h1m10 0h1m48 0h1M97 26.5h1m4 0h1m102 0h3m9 0h1m88 0h1m3 0h1M41 27.5h1m59 0h3m51 0h1m102 0h2m42 0h1m4 0h4M192 28.5h1m3 0h1m7 0h1m32 0h1m21 0h1m46 0h2m2 0h1M49 29.5h1m53 0h1m87 0h1m3 0h1m8 0h2m1 0h1m35 0h1m12 0h2m49 0h1m1 0h3M97 30.5h1m1 0h1m105 0h1m1 0h2m3 0h1m41 0h1m4 0h1m44 0h2m2 0h4m52 0h1M51 31.5h1m46 0h1m1 0h1m2 0h1m103 0h1m51 0h1m22 0h1m25 0h1m1 0h2m51 0h1M89 32.5h1m7 0h1m5 0h2m96 0h1m4 0h2m18 0h1m79 0h1m1 0h1m1 0h1m52 0h1M44 33.5h1m110 0h1m49 0h3m92 0h1m4 0h1m3 0h2m52 0h1M51 34.5h1m49 0h1m1 0h1m97 0h1m4 0h1m16 0h1m34 0h1m50 0h3m39 0h1m11 0h1M51 35.5h1m49 0h1m139 0h1m14 0h1m2 0h1m50 0h2M36 36.5h1m66 0h1m99 0h1m1 0h1m1 0h1m37 0h1m54 0h1m6 0h1m1 0h3m51 0h1M3 37.5h1m99 0h1m69 0h1m17 0h1m2 0h1m8 0h1m2 0h2m45 0h1m3 0h1m1 0h1m45 0h2m2 0h2M102 38.5h2m96 0h1m1 0h1m1 0h3m24 0h1m24 0h1m2 0h1m43 0h1m1 0h3m2 0h2M51 39.5h1m50 0h1m96 0h1m1 0h1m1 0h3m1 0h1m42 0h1m109 0h1m1 0h1M40 40.5h1m58 0h1m2 0h2m45 0h1m5 0h1m38 0h1m3 0h1m4 0h5m25 0h1m15 0h1m5 0h1m3 0h1m42 0h1m8 0h1m47 0h1M47 41.5h1m55 0h1m51 0h1m43 0h2m1 0h2m1 0h3m10 0h1m31 0h1m5 0h1m2 0h1m45 0h1m3 0h3m41 0h1m7 0h1M97 42.5h2m4 0h1m51 0h1m47 0h1m1 0h1m1 0h1m37 0h1m3 0h1m1 0h1m2 0h2m1 0h1m1 0h1m45 0h2m1 0h2m1 0h1m51 0h1m51 0h1M14 43.5h1m88 0h1m38 0h1m12 0h1m43 0h1m3 0h1m1 0h1m1 0h1m33 0h1m14 0h1m47 0h1m3 0h1m52 0h1m1 0h1M51 44.5h1m51 0h1m91 0h1m8 0h2m10 0h1m29 0h1m2 0h1m4 0h2m55 0h1M2 45.5h1m17 0h1m5 0h1m19 0h1m50 0h1m5 0h1m98 0h3m2 0h1m10 0h1m16 0h1m3 0h1m10 0h1m3 0h1m1 0h1m40 0h1m6 0h5m1 0h1m52 0h1M99 46.5h2m45 0h1m7 0h2m41 0h1m3 0h1m1 0h1m1 0h2m19 0h1m15 0h1m9 0h1m6 0h2m44 0h2m1 0h2M48 47.5h1m49 0h1m4 0h1m22 0h1m29 0h1m16 0h1m30 0h3m1 0h1m44 0h1m4 0h2m34 0h1m11 0h2m1 0h2m42 0h1M9 48.5h1m41 0h1m103 0h1m46 0h1m1 0h3m10 0h1m33 0h1m2 0h1m4 0h1m47 0h4m1 0h1m43 0h1m2 0h1m2 0h2M0 49.5h1m24 0h1m11 0h1m9 0h2m3 0h1m28 0h1m7 0h1m9 0h5m51 0h1m42 0h2m1 0h1m2 0h1m1 0h1m19 0h1m28 0h1m3 0h1m32 0h1m4 0h1m9 0h5m36 0h1m14 0h1m51 0h1M29 50.5h1m5 0h1m11 0h1m2 0h2m38 0h1m9 0h1m1 0h1m52 0h1m30 0h1m1 0h1m2 0h1m1 0h1m2 0h1m1 0h1m4 0h1m1 0h3m39 0h2m2 0h1m4 0h1m1 0h3m46 0h1m44 0h1m7 0h2m1 0h1M26 51.5h2m11 0h1m1 0h1m8 0h1m5 0h1m28 0h1m6 0h1m4 0h1m3 0h1m1 0h1m47 0h1m1 0h3m39 0h1m1 0h1m2 0h1m4 0h3m30 0h1m4 0h1m7 0h1m5 0h3m19 0h1m16 0h1m8 0h2m1 0h2m1 0h1m45 0h1m1 0h1m3 0h1M5 52.5h1m20 0h1m2 0h1m5 0h1m2 0h1m1 0h1m1 0h1m3 0h2m49 0h1m1 0h2m1 0h2m48 0h2m1 0h2m25 0h1m9 0h1m1 0h1m4 0h1m3 0h4m10 0h1m3 0h1m4 0h2m4 0h2m6 0h1m2 0h1m8 0h1m2 0h1m2 0h2m48 0h2m40 0h1m64 0h1M30 53.5h1m1 0h1m5 0h1m5 0h1m6 0h1m29 0h1m2 0h1m10 0h3m3 0h1m46 0h1m6 0h1m37 0h2m5 0h1m1 0h3m1 0h2m5 0h1m1 0h1m3 0h1m16 0h1m10 0h1m1 0h1m5 0h1m2 0h2m46 0h2m1 0h1m1 0h1m26 0h1m12 0h1m11 0h2m50 0h1M5 54.5h1m32 0h6m1 0h2m2 0h4m40 0h2m1 0h1m2 0h5m28 0h1m12 0h1m6 0h1m2 0h1m2 0h1m6 0h1m12 0h1m6 0h1m4 0h1m6 0h1m2 0h1m1 0h3m1 0h1m1 0h1m15 0h1m3 0h1m9 0h2m3 0h1m4 0h2m2 0h1m1 0h1m3 0h1m23 0h1m14 0h1m5 0h1m2 0h2m2 0h1m42 0h1m2 0h1m1 0h2m3 0h1m46 0h1m2 0h1m1 0h1M0 55.5h1m28 0h1m1 0h1m1 0h1m1 0h1m1 0h1m1 0h2m4 0h2m3 0h2m44 0h1m1 0h1m1 0h4m1 0h1m36 0h1m2 0h1m4 0h2m1 0h3m29 0h1m8 0h1m4 0h2m1 0h1m1 0h3m4 0h1m3 0h2m20 0h1m2 0h6m3 0h2m1 0h2m51 0h1m1 0h5m39 0h5m7 0h1m47 0h2m2 0h1M23 56.5h1m13 0h3m1 0h2m7 0h1m1 0h1m34 0h1m3 0h1m6 0h6m47 0h1m3 0h1m35 0h2m2 0h3m1 0h4m2 0h1m2 0h1m1 0h1m7 0h1m1 0h1m14 0h1m1 0h1m5 0h1m2 0h1m1 0h3m1 0h2m1 0h1m1 0h1m19 0h1m2 0h1m16 0h1m4 0h4m1 0h1m32 0h1m19 0h1m2 0h1M11 57.5h1m15 0h1m8 0h1m1 0h4m2 0h1m1 0h2m2 0h2m28 0h1m8 0h2m6 0h6m3 0h1m31 0h1m11 0h2m1 0h1m1 0h2m3 0h1m25 0h1m4 0h1m2 0h2m1 0h7m1 0h1m2 0h2m1 0h1m4 0h1m10 0h1m2 0h2m2 0h1m1 0h1m10 0h3m1 0h1m3 0h7m36 0h1m4 0h1m3 0h4m20 0h1m21 0h1m1 0h1m1 0h1m1 0h2M6 58.5h1m4 0h1m2 0h2m1 0h1m1 0h1m9 0h5m2 0h1m2 0h1m1 0h4m1 0h6m11 0h1m26 0h1m4 0h1m1 0h2m1 0h1m1 0h1m1 0h1m29 0h1m4 0h1m13 0h3m18 0h1m8 0h1m5 0h1m1 0h1m2 0h1m1 0h1m2 0h5m2 0h1m1 0h1m1 0h1m4 0h1m8 0h1m12 0h3m3 0h11m4 0h1m22 0h1m19 0h1m5 0h1m1 0h4m1 0h1m22 0h1m12 0h1m2 0h1m1 0h1m1 0h4m2 0h1m48 0h1m2 0h1M0 59.5h1m5 0h1m3 0h1m2 0h3m7 0h1m5 0h1m3 0h3m1 0h1m1 0h2m3 0h1m2 0h3m1 0h1m2 0h1m5 0h1m15 0h1m9 0h1m10 0h6m1 0h1m23 0h1m14 0h1m2 0h1m5 0h1m2 0h1m5 0h1m11 0h1m3 0h1m2 0h1m9 0h1m4 0h1m3 0h1m1 0h3m6 0h1m1 0h2m4 0h1m2 0h1m11 0h2m3 0h4m1 0h1m2 0h1m1 0h1m2 0h2m1 0h6m7 0h1m4 0h1m25 0h2m2 0h1m5 0h3m32 0h1m2 0h1m7 0h1m6 0h1m9 0h1M0 60.5h1m3 0h1m4 0h1m2 0h2m1 0h1m1 0h2m1 0h1m3 0h2m1 0h2m1 0h3m1 0h1m1 0h6m1 0h1m2 0h2m1 0h2m1 0h1m6 0h1m3 0h1m1 0h1m5 0h1m8 0h1m1 0h1m7 0h3m1 0h8m1 0h2m5 0h1m6 0h1m10 0h2m1 0h1m2 0h2m6 0h1m5 0h2m1 0h1m2 0h1m1 0h1m3 0h1m13 0h1m3 0h1m2 0h1m2 0h1m1 0h1m2 0h1m1 0h1m4 0h5m2 0h1m1 0h2m1 0h1m1 0h1m1 0h1m1 0h1m13 0h2m4 0h1m2 0h2m1 0h4m2 0h2m1 0h1m1 0h2m1 0h1m1 0h5m2 0h1m6 0h1m5 0h1m11 0h1m1 0h1m1 0h1m1 0h1m1 0h2m2 0h1m1 0h1m1 0h5m1 0h1m9 0h1m4 0h1m11 0h1m4 0h1m3 0h1m6 0h1m2 0h6m1 0h1m11 0h1m1 0h1m26 0h1m5 0h1m3 0h2M2 61.5h10m3 0h4m1 0h2m1 0h7m1 0h1m1 0h2m1 0h2m1 0h3m2 0h3m2 0h1m2 0h1m1 0h3m1 0h1m6 0h1m1 0h1m1 0h2m3 0h1m1 0h1m4 0h1m1 0h1m1 0h1m2 0h13m3 0h1m2 0h1m1 0h2m5 0h1m1 0h2m3 0h2m1 0h1m1 0h1m2 0h5m1 0h1m1 0h2m1 0h1m1 0h1m2 0h3m1 0h2m1 0h1m1 0h2m2 0h3m2 0h2m6 0h1m4 0h1m3 0h3m1 0h3m1 0h1m1 0h5m2 0h3m2 0h1m5 0h1m2 0h1m2 0h1m1 0h3m1 0h1m1 0h3m2 0h3m2 0h4m1 0h4m1 0h4m1 0h2m1 0h2m2 0h1m3 0h2m1 0h4m1 0h2m1 0h1m2 0h1m1 0h3m4 0h2m4 0h4m1 0h1m1 0h4m2 0h5m1 0h1m4 0h1m2 0h2m6 0h2m2 0h1m1 0h1m1 0h3m1 0h1m1 0h4m1 0h1m1 0h1m3 0h1m2 0h3m1 0h1m2 0h3m2 0h1m2 0h1m3 0h3m1 0h1m1 0h1m5 0h1m2 0h1m9 0h1m1 0h1m1 0h2m7 0h1m3 0h2M0 62.5h3m1 0h3m1 0h3m1 0h1m3 0h1m2 0h1m22 0h1m3 0h1m4 0h1m1 0h4m1 0h1m1 0h2m2 0h1m1 0h1m1 0h3m1 0h2m7 0h1m6 0h1m11 0h1m2 0h1m2 0h8m2 0h1m4 0h1m1 0h1m1 0h2m1 0h1m1 0h3m2 0h2m2 0h2m11 0h1m2 0h1m3 0h1m1 0h7m1 0h3m1 0h1m3 0h1m1 0h1m1 0h2m1 0h1m1 0h1m20 0h3m2 0h1m1 0h1m25 0h1m19 0h1m2 0h2m2 0h1m1 0h3m1 0h1m1 0h2m4 0h1m32 0h6m1 0h3m2 0h8m1 0h5m1 0h1m3 0h1m5 0h6m2 0h3m3 0h1m1 0h2m1 0h2m1 0h2m1 0h1m1 0h1m2 0h2m4 0h2m4 0h1m4 0h1m1 0h2m1 0h1m1 0h2m2 0h3m1 0h1m1 0h1M0 63.5h3m6 0h1m42 0h5m1 0h2m8 0h1m3 0h1m31 0h1m1 0h1m1 0h2m1 0h1m1 0h1m3 0h1m1 0h1m7 0h1m26 0h1m1 0h1m3 0h1m1 0h1m47 0h2m5 0h1m29 0h1m13 0h2m2 0h2m1 0h1m2 0h1m1 0h2m1 0h1m1 0h1m33 0h3m2 0h1m1 0h2m4 0h1m7 0h1m1 0h3m1 0h1m4 0h1m2 0h1m1 0h3m1 0h1m3 0h1m2 0h1m2 0h1m4 0h5m2 0h2m2 0h1m1 0h1m1 0h2m2 0h2m1 0h1m2 0h1m4 0h1m4 0h1m11 0h1M0 64.5h1m2 0h1m3 0h2m43 0h1m3 0h3m3 0h1m1 0h2m1 0h1m1 0h1m3 0h1m31 0h3m1 0h1m22 0h1m3 0h1m22 0h1m2 0h1m8 0h1m37 0h1m51 0h3m1 0h2m4 0h1m40 0h5m8 0h2m4 0h1m8 0h1m2 0h1m3 0h1m15 0h1m1 0h1m2 0h2m5 0h1m8 0h2m3 0h1m3 0h1m7 0h1m3 0h1m4 0h1M0 65.5h1m51 0h1m3 0h4m2 0h1m1 0h2m1 0h1m37 0h3m2 0h1m1 0h1m42 0h1m1 0h1m3 0h1m6 0h1m39 0h1m51 0h2m2 0h2m48 0h1m1 0h1m9 0h1m12 0h2m4 0h3m9 0h1m2 0h1m2 0h1m2 0h2m1 0h2m4 0h1m6 0h2m9 0h1m7 0h1m1 0h1m5 0h1m5 0h1M11 66.5h1m40 0h1m1 0h1m6 0h2m41 0h2m2 0h1m1 0h2m23 0h1m20 0h2m50 0h3m49 0h1m1 0h2m53 0h1m14 0h1m9 0h1m11 0h1m3 0h2m3 0h1m1 0h2m2 0h1m2 0h1m9 0h1m7 0h1m24 0h1M0 67.5h1m56 0h1m6 0h1m26 0h1m13 0h3m33 0h1m10 0h1m3 0h1m1 0h1m101 0h4m50 0h1m6 0h1m43 0h8m3 0h1m1 0h2m1 0h2m6 0h1m11 0h1m1 0h1M0 68.5h1m2 0h1m48 0h1m2 0h1m2 0h1m6 0h1m38 0h2m1 0h1m8 0h2m37 0h2m16 0h1m34 0h2m50 0h4m48 0h1m7 0h1m4 0h2m2 0h1m18 0h1m7 0h1m13 0h1m9 0h1m12 0h1m3 0h2m8 0h1m7 0h1M6 69.5h1m47 0h2m48 0h2m50 0h1m1 0h1m49 0h1m1 0h1m52 0h1m48 0h1m10 0h1m3 0h1m25 0h1m14 0h1m1 0h1m5 0h1m30 0h1m4 0h1M54 70.5h1m3 0h1m48 0h2m50 0h1m100 0h2m1 0h1m49 0h1m5 0h1m2 0h1m30 0h1m9 0h4m1 0h3m4 0h1m1 0h1m2 0h1m1 0h1M52 71.5h2m17 0h1m32 0h1m1 0h1m49 0h1m158 0h2m36 0h1m7 0h1m1 0h1m1 0h4m1 0h1m1 0h1m2 0h1m7 0h1m6 0h1M55 72.5h1m49 0h2m1 0h1m6 0h1m40 0h1m104 0h1m6 0h1m44 0h1m10 0h1m39 0h4m1 0h1m4 0h1m2 0h1m12 0h1M11 73.5h1m43 0h1m7 0h1m42 0h1m2 0h1m47 0h1m103 0h1m1 0h1m48 0h1m2 0h1m1 0h1m2 0h1m43 0h1m2 0h3m3 0h1M52 74.5h1m18 0h1m32 0h1m6 0h1m148 0h1m2 0h1m48 0h1m7 0h1m1 0h1m8 0h1m32 0h1m1 0h1m4 0h2m8 0h1M0 75.5h1m51 0h1m51 0h2m2 0h1m99 0h1m51 0h2m52 0h1m1 0h1m2 0h3m42 0h1m1 0h3m4 0h1m8 0h1M0 76.5h1m51 0h1m51 0h1m1 0h1m1 0h1m151 0h1m1 0h2m48 0h2m50 0h1m1 0h1m6 0h1M104 77.5h2m1 0h1m2 0h1m16 0h1m184 0h1m2 0h1m6 0h1m41 0h1m2 0h1m1 0h1m1 0h2m2 0h1m16 0h1M52 78.5h1m51 0h2m5 0h1m96 0h1m51 0h1m63 0h1m43 0h3m5 0h1M52 79.5h1m51 0h1m158 0h1m2 0h1m45 0h1m3 0h1m47 0h2m1 0h1m7 0h1m6 0h1M52 80.5h1m53 0h1m153 0h1m65 0h1m38 0h1m1 0h1m1 0h1M104 81.5h1m1 0h1m153 0h1m1 0h1m57 0h1m1 0h1m41 0h1m1 0h1m6 0h1M0 82.5h1m103 0h1m1 0h1m15 0h1m137 0h1m2 0h2m100 0h2m10 0h1m1 0h1M104 83.5h1m8 0h1m146 0h1m51 0h1m1 0h1m12 0h1m36 0h1m4 0h1M52 84.5h1m53 0h1m220 0h1m34 0h1m4 0h1m3 0h1M52 85.5h1m51 0h2m1 0h1m100 0h1m51 0h1m5 0h1m45 0h1m2 0h2m50 0h1M104 86.5h1m6 0h1m1 0h1m146 0h1m54 0h1m49 0h1m7 0h1m2 0h1m7 0h1M104 87.5h1m259 0h1m6 0h2M104 88.5h1m32 0h1m228 0h1M104 89.5h2m25 0h1m128 0h1m104 0h2m47 0h1M104 90.5h1m2 0h1m155 0h1m48 0h1m51 0h3m44 0h1M208 91.5h1m1 0h1m49 0h1m51 0h1m42 0h1M104 92.5h1m2 0h1m204 0h1m1 0h1m49 0h1M104 93.5h2m154 0h1m103 0h2M105 94.5h1m102 0h1m51 0h1m51 0h1m18 0h1m32 0h1m1 0h1m29 0h1M107 95.5h2m47 0h1m57 0h1m45 0h1m103 0h1M260 96.5h1m52 0h2m56 0h1M52 97.5h1m55 0h1m204 0h1m50 0h2m36 0h1M104 98.5h2m6 0h1m147 0h1m51 0h1m2 0h1m48 0h2M0 99.5h1m103 0h4m204 0h1m51 0h1m2 0h1M105 100.5h1m154 0h1m51 0h1m4 0h1m3 0h1m45 0h1m1 0h1M104 101.5h1m155 0h1m103 0h1m4 0h1m21 0h1M105 102.5h2m1 0h1m203 0h1m10 0h2m39 0h2m1 0h1M104 103.5h1m1 0h1m1 0h1m214 0h1m40 0h1m1 0h1M104 104.5h1m10 0h1m196 0h1m4 0h1m50 0h1M104 105.5h1m155 0h1m55 0h1m47 0h1m2 0h1m4 0h1M0 106.5h1m103 0h1m1 0h1m153 0h1m54 0h1m8 0h1m39 0h1m3 0h1m5 0h1m40 0h1M52 107.5h1m55 0h1m203 0h1m52 0h1m2 0h1M0 108.5h1m148 0h1m6 0h1m163 0h1m1 0h1m41 0h4m2 0h1M104 109.5h1m259 0h2M104 110.5h1m259 0h3M104 111.5h1m259 0h1M108 112.5h1m151 0h1m103 0h1m3 0h1M104 113.5h1m1 0h1m101 0h1m127 0h1m27 0h2M104 114.5h2m154 0h1m51 0h1m8 0h1m42 0h1M104 115.5h1m221 0h1m37 0h2m18 0h1M106 116.5h1m2 0h1m150 0h1m103 0h1M104 117.5h1m4 0h1m257 0h1m2 0h1M104 118.5h3m257 0h1m1 0h1M104 119.5h1m4 0h1m202 0h1m8 0h1m43 0h2m5 0h1M52 120.5h1m51 0h1m2 0h1m204 0h1m51 0h1m3 0h1M148 121.5h1m111 0h1m51 0h1m51 0h1M104 122.5h1m207 0h1M104 123.5h1m3 0h1m203 0h1m53 0h1m1 0h1m1 0h1"/>
<path stroke="#FF3000" d="M311 1.5h1M311 4.5h1M311 5.5h1M311 6.5h1M311 7.5h1M311 9.5h1M103 10.5h1M207 14.5h1M311 17.5h1M207 18.5h1M311 19.5h1M205 20.5h1m104 0h2M311 21.5h1M103 22.5h1m205 0h1m1 0h1M311 23.5h1M311 24.5h1M306 25.5h1M311 26.5h1M207 27.5h1M207 28.5h1m103 0h1M311 32.5h1M306 33.5h1m4 0h1M207 34.5h1m99 0h2M207 35.5h1M311 37.5h1M207 38.5h1M259 39.5h1m50 0h2M311 43.5h1M200 44.5h1M259 45.5h1m51 0h1M207 46.5h1M207 47.5h1m103 0h1M103 48.5h1m103 0h1m98 0h1m4 0h1M103 50.5h1m207 0h1M204 51.5h1M311 52.5h1m51 0h1M205 53.5h1m104 0h1M205 54.5h1m53 0h1m51 0h1M207 55.5h1m51 0h1M51 56.5h1m101 0h1m52 0h2m51 0h1m50 0h2M103 57.5h1m100 0h1m1 0h2m36 0h1M103 58.5h1m100 0h2m1 0h1m48 0h1m2 0h1m96 0h1M103 59.5h1m96 0h1m3 0h3m42 0h2m2 0h1m53 0h1M35 60.5h1m12 0h1m2 0h1m50 0h1m49 0h2m1 0h1m46 0h1m1 0h1m104 0h1m2 0h1m49 0h1M0 61.5h1m34 0h1m2 0h1m3 0h2m3 0h2m1 0h1m50 0h3m1 0h1m15 0h1m5 0h1m10 0h1m11 0h1m2 0h1m1 0h1m21 0h1m7 0h1m12 0h1m3 0h2m1 0h2m1 0h2m28 0h1m4 0h1m4 0h1m2 0h1m2 0h2m1 0h3m40 0h1m6 0h1m1 0h2m15 0h1m20 0h1m2 0h2m3 0h1m1 0h2m3 0h2m31 0h1m19 0h1M52 62.5h1m6 0h1m44 0h2m50 0h1m1 0h1m102 0h2m2 0h2m45 0h2m10 0h1m17 0h1m19 0h2m2 0h1m2 0h1m2 0h1m2 0h1m1 0h1m5 0h1m8 0h1m1 0h1m1 0h2M57 63.5h1m47 0h1m1 0h1m152 0h1m103 0h4m5 0h1M104 64.5h1m51 0h1m103 0h1m3 0h1m99 0h1m1 0h1m5 0h2M104 65.5h1m51 0h1m155 0h1m51 0h2M367 66.5h1M104 67.5h1m259 0h1M364 68.5h1m2 0h1M260 69.5h1m52 0h1m49 0h3M104 70.5h1m207 0h1M364 71.5h1M104 72.5h1M104 73.5h1m2 0h1m152 0h1m104 0h1M365 74.5h1M260 77.5h1M364 78.5h1M260 79.5h1M364 80.5h1M52 81.5h1M364 82.5h1M364 84.5h1M364 85.5h1M364 86.5h1M364 88.5h1M364 89.5h1M364 91.5h1M104 94.5h1M367 96.5h1M104 97.5h1M364 100.5h1M364 104.5h1M364 107.5h1M104 108.5h1M364 117.5h1"/>
<path stroke="#FF0000" d="M311 27.5h1M207 44.5h1M311 46.5h1M207 49.5h1M207 52.5h1M207 54.5h1M311 57.5h1M207 59.5h1m103 0h1M207 60.5h1m103 0h1M51 61.5h1m155 0h1m103 0h1M364 62.5h1M364 66.5h1"/>
</g></g>
<path class="k" d="M95.5 21V146M95 145.5H799M798.5 21V146M95 21.5H117M95 36.5H117M95 52.5H117M95 67.5H117M95 83.5H117M95 98.5H117M95 114.5H117M95 129.5H117M179.5 141V145M264.5 141V145M348.5 141V145M433.5 141V145M517.5 141V145M602.5 141V145M686.5 141V145M771.5 141V145"/>
<text class="ax" x="90.5" y="25.2" text-anchor="end">160</text>
<text class="ax" x="90.5" y="40.7" text-anchor="end">140</text>
<text class="ax" x="90.5" y="56.2" text-anchor="end">120</text>
<text class="ax" x="90.5" y="71.7" text-anchor="end">100</text>
<text class="ax" x="90.5" y="87.2" text-anchor="end">80</text>
<text class="ax" x="90.5" y="102.7" text-anchor="end">60</text>
<text class="ax" x="90.5" y="118.2" text-anchor="end">40</text>
<text class="ax" x="90.5" y="133.7" text-anchor="end">20</text>
<text class="ax" x="90.5" y="149.2" text-anchor="end">0</text>
<text class="ax" x="94.9" y="154.8" text-anchor="middle">0</text>
<text class="ax" x="179.4" y="154.8" text-anchor="middle">50</text>
<text class="ax" x="263.9" y="154.8" text-anchor="middle">100</text>
<text class="ax" x="348.4" y="154.8" text-anchor="middle">150</text>
<text class="ax" x="432.9" y="154.8" text-anchor="middle">200</text>
<text class="ax" x="517.4" y="154.8" text-anchor="middle">250</text>
<text class="ax" x="601.9" y="154.8" text-anchor="middle">300</text>
<text class="ax" x="686.4" y="154.8" text-anchor="middle">350</text>
<text class="ax" x="770.9" y="154.8" text-anchor="middle">400</text>
<text class="t14" x="95.2" y="18">Vcal threshold</text>
<text class="t14" x="666" y="18">M0134-070107.14:19T-10a</text>
<g shape-rendering="crispEdges">
<rect x="802" y="139" width="40" height="6" fill="#6300FF"/>
<rect x="802" y="133" width="40" height="6" fill="#3300FF"/>
<rect x="802" y="126" width="40" height="7" fill="#0014FF"/>
<rect x="802" y="120" width="40" height="6" fill="#0044FF"/>
<rect x="802" y="114" width="40" height="6" fill="#008BFF"/>
<rect x="802" y="108" width="40" height="6" fill="#00BBFF"/>
<rect x="802" y="102" width="40" height="6" fill="#00FFFC"/>
<rect x="802" y="95" width="40" height="7" fill="#00FFCC"/>
<rect x="802" y="89" width="40" height="6" fill="#00FF85"/>
<rect x="802" y="83" width="40" height="6" fill="#00FF55"/>
<rect x="802" y="77" width="40" height="6" fill="#00FF0E"/>
<rect x="802" y="71" width="40" height="6" fill="#22FF00"/>
<rect x="802" y="64" width="40" height="7" fill="#69FF00"/>
<rect x="802" y="58" width="40" height="6" fill="#99FF00"/>
<rect x="802" y="52" width="40" height="6" fill="#E0FF00"/>
<rect x="802" y="46" width="40" height="6" fill="#FFEE00"/>
<rect x="802" y="40" width="40" height="6" fill="#FFA700"/>
<rect x="802" y="33" width="40" height="7" fill="#FF7700"/>
<rect x="802" y="27" width="40" height="6" fill="#FF3000"/>
<rect x="802" y="21" width="40" height="6" fill="#FF0000"/>
</g>
<path class="k" d="M842.5 21V146M821 145.5H843M821 126.5H843M821 107.5H843M821 88.5H843M821 70.5H843M821 51.5H843M821 32.5H843"/>
<text class="pl" x="846" y="145.8">0</text>
<text class="pl" x="846" y="128.0">20</text>
<text class="pl" x="846" y="109.0">40</text>
<text class="pl" x="846" y="90.0">60</text>
<text class="pl" x="846" y="72.0">80</text>
<text class="pl" x="846" y="53.0">100</text>
<text class="pl" x="846" y="34.0">120</text>
<path class="k" d="M95.5 189V314M95 313.5H799M798.5 189V314M95 189.5H799M95 204.5H117M95 220.5H117M95 235.5H117M95 251.5H117M95 266.5H117M95 282.5H117M95 297.5H117M179.5 309V313M264.5 309V313M348.5 309V313M433.5 309V313M517.5 309V313M602.5 309V313M686.5 309V313M771.5 309V313"/>
<text class="ax" x="90.5" y="193.2" text-anchor="end">160</text>
<text class="ax" x="90.5" y="208.7" text-anchor="end">140</text>
<text class="ax" x="90.5" y="224.2" text-anchor="end">120</text>
<text class="ax" x="90.5" y="239.7" text-anchor="end">100</text>
<text class="ax" x="90.5" y="255.2" text-anchor="end">80</text>
<text class="ax" x="90.5" y="270.7" text-anchor="end">60</text>
<text class="ax" x="90.5" y="286.2" text-anchor="end">40</text>
<text class="ax" x="90.5" y="301.7" text-anchor="end">20</text>
<text class="ax" x="90.5" y="317.2" text-anchor="end">0</text>
<text class="ax" x="94.9" y="322.8" text-anchor="middle">0</text>
<text class="ax" x="179.4" y="322.8" text-anchor="middle">50</text>
<text class="ax" x="263.9" y="322.8" text-anchor="middle">100</text>
<text class="ax" x="348.4" y="322.8" text-anchor="middle">150</text>
<text class="ax" x="432.9" y="322.8" text-anchor="middle">200</text>
<text class="ax" x="517.4" y="322.8" text-anchor="middle">250</text>
<text class="ax" x="601.9" y="322.8" text-anchor="middle">300</text>
<text class="ax" x="686.4" y="322.8" text-anchor="middle">350</text>
<text class="ax" x="770.9" y="322.8" text-anchor="middle">400</text>
<text class="t14" x="95.2" y="186">Bump bonding map</text>
<g shape-rendering="crispEdges">
<rect x="802" y="307" width="40" height="6" fill="#6300FF"/>
<rect x="802" y="301" width="40" height="6" fill="#3300FF"/>
<rect x="802" y="294" width="40" height="7" fill="#0014FF"/>
<rect x="802" y="288" width="40" height="6" fill="#0044FF"/>
<rect x="802" y="282" width="40" height="6" fill="#008BFF"/>
<rect x="802" y="276" width="40" height="6" fill="#00BBFF"/>
<rect x="802" y="270" width="40" height="6" fill="#00FFFC"/>
<rect x="802" y="263" width="40" height="7" fill="#00FFCC"/>
<rect x="802" y="257" width="40" height="6" fill="#00FF85"/>
<rect x="802" y="251" width="40" height="6" fill="#00FF55"/>
<rect x="802" y="245" width="40" height="6" fill="#00FF0E"/>
<rect x="802" y="239" width="40" height="6" fill="#22FF00"/>
<rect x="802" y="232" width="40" height="7" fill="#69FF00"/>
<rect x="802" y="226" width="40" height="6" fill="#99FF00"/>
<rect x="802" y="220" width="40" height="6" fill="#E0FF00"/>
<rect x="802" y="214" width="40" height="6" fill="#FFEE00"/>
<rect x="802" y="208" width="40" height="6" fill="#FFA700"/>
<rect x="802" y="201" width="40" height="7" fill="#FF7700"/>
<rect x="802" y="195" width="40" height="6" fill="#FF3000"/>
<rect x="802" y="189" width="40" height="6" fill="#FF0000"/>
</g>
<path class="k" d="M842.5 189V314M821 313.5H843M821 297.5H843M821 282.5H843M821 266.5H843M821 251.5H843M821 235.5H843M821 220.5H843M821 204.5H843M821 189.5H843"/>
<text class="pl" x="846" y="315.0">-2</text>
<text class="pl" x="846" y="299.0">-1.5</text>
<text class="pl" x="846" y="284.0">-1</text>
<text class="pl" x="846" y="268.0">-0.5</text>
<text class="pl" x="846" y="253.0">0</text>
<text class="pl" x="846" y="237.0">0.5</text>
<text class="pl" x="846" y="222.0">1</text>
<text class="pl" x="846" y="206.0">1.5</text>
<text class="pl" x="846" y="191.0">2</text>
<g shape-rendering="crispEdges" fill="#fff"><rect x="739" y="65" width="1" height="1"/><rect x="556" y="80" width="2" height="1"/></g>
<g shape-rendering="crispEdges"><rect x="710" y="189" width="2" height="1" fill="#00DDDD"/><rect x="739" y="233" width="1" height="1" fill="#22FF00"/><rect x="557" y="248" width="1" height="1" fill="#22FF00"/></g>
<text class="t13 b" x="312.5" y="354.5">Test Summary of M0134</text>
<text class="t13 b" x="465.5" y="354.5">T-10a</text>
<text class="t13 b" x="767.5" y="354.5" xml:space="preserve">GRADE:  A</text>
<text class="t13" x="312.5" y="378.6">ROCs &gt; 1% defects:</text><text class="t13" x="447.3" y="378.6">0</text>
<text class="t13" x="312.5" y="396.3">Dead Pixel:</text><text class="t13" x="447.3" y="396.3">2</text>
<text class="t13" x="312.5" y="413.3">Mask Defects:</text><text class="t13" x="447.3" y="413.3">0</text>
<text class="t13" x="312.5" y="430.2">Dead Bumps:</text><text class="t13" x="447.3" y="430.2">3</text>
<text class="t13" x="312.5" y="446.9">Dead Trimbits:</text><text class="t13" x="447.3" y="446.9">0</text>
<text class="t13" x="312.5" y="463.7">Address Probl:</text><text class="t13" x="447.3" y="463.7">0</text>
<text class="t13" x="507.5" y="379.1">Tested on:</text><text class="t13" x="604" y="379.1">Jan 7</text>
<text class="t13" x="507.5" y="395.6">Temp. [<tspan font-size="8" dy="-4">o</tspan><tspan dy="4">C]:</tspan></text><text class="t13" x="604" y="395.6">-10.0 +- 0.0</text>
<text class="t13" x="507.5" y="412.1">Trim / phCal:</text><text class="t13" x="604" y="412.1">yes / yes</text>
<text class="t13" x="507.5" y="428.6">Therm. cycl.:</text><text class="t13" x="604" y="428.6">yes</text>
<text class="t13" x="507.5" y="445.1">TBM1:</text><text class="t13" x="604" y="445.1">ok</text>
<text class="t13" x="507.5" y="461.6">TBM2:</text><text class="t13" x="604" y="461.6">ok</text>
<text class="t13" x="669.7" y="379.1">Noise [e]</text><text class="t13" x="800.2" y="379.1">157.3</text>
<text class="t13" x="669.7" y="395.6">Vcal Thr. Width [e]</text><text class="t13" x="800.2" y="395.6">85.6</text>
<text class="t13" x="669.7" y="412.1">Rel. Gain Width [%]</text><text class="t13" x="800.2" y="412.1">3.2</text>
<text class="t13" x="669.7" y="428.6">Pedestal Spread [e]</text><text class="t13" x="800.2" y="428.6">1399.2</text>
<path class="k" d="M47.5 527.5H198.5V648.5H47.5ZM47 527.5H53M47 547.5H53M47 567.5H53M47 587.5H53M47 607.5H53M47 628.5H53M47 648.5H53M66.5 644V648M85.5 644V648M104.5 644V648M123.5 644V648M141.5 644V648M160.5 644V648M179.5 644V648"/>
<text class="ax" x="45.55" y="530.2" text-anchor="end">600</text>
<text class="ax" x="45.55" y="550.2" text-anchor="end">500</text>
<text class="ax" x="45.55" y="570.2" text-anchor="end">400</text>
<text class="ax" x="45.55" y="590.2" text-anchor="end">300</text>
<text class="ax" x="45.55" y="610.2" text-anchor="end">200</text>
<text class="ax" x="45.55" y="631.2" text-anchor="end">100</text>
<text class="ax" x="45.55" y="651.2" text-anchor="end">0</text>
<text class="ax" x="46.4" y="657.6" text-anchor="middle">0</text>
<text class="ax" x="65.3" y="657.6" text-anchor="middle">2</text>
<text class="ax" x="84.2" y="657.6" text-anchor="middle">4</text>
<text class="ax" x="103.0" y="657.6" text-anchor="middle">6</text>
<text class="ax" x="121.9" y="657.6" text-anchor="middle">8</text>
<text class="ax" x="140.8" y="657.6" text-anchor="middle">10</text>
<text class="ax" x="159.7" y="657.6" text-anchor="middle">12</text>
<text class="ax" x="178.5" y="657.6" text-anchor="middle">14</text>
<text class="ax" x="197.4" y="657.6" text-anchor="middle">16</text>
<text class="t13" x="56.8" y="521">Noise</text>
<path d="M47 547.5H199" stroke="#FF0000" stroke-width="1" stroke-dasharray="3 3" fill="none" shape-rendering="crispEdges"/>
<path d="M48 614.5H50M55 614.5H57M52.5 610V612M52.5 617V619M57 614.5H59M64 614.5H66M61.5 609V612M61.5 617V620M66 615.5H68M73 615.5H75M70.5 611V613M70.5 618V620M75 616.5H78M83 616.5H85M80.5 611V614M80.5 619V622M85 618.5H87M92 618.5H94M89.5 614V616M89.5 621V623M94 618.5H97M102 618.5H104M99.5 613V616M99.5 621V624M104 617.5H106M111 617.5H113M108.5 613V615M108.5 620V622M113 617.5H116M121 617.5H123M118.5 613V615M118.5 620V622M123 617.5H125M130 617.5H132M127.5 613V615M127.5 620V622M132 616.5H135M140 616.5H142M137.5 612V614M137.5 619V621M142 616.5H144M149 616.5H151M146.5 612V614M146.5 619V621M151 618.5H154M159 618.5H161M156.5 614V616M156.5 621V623M161 615.5H163M168 615.5H170M165.5 611V613M165.5 618V620M170 615.5H173M178 615.5H180M175.5 610V613M175.5 618V621M180 615.5H182M187 615.5H189M184.5 612V613M184.5 618V619M189 616.5H192M197 616.5H198M194.5 612V614M194.5 619V621" stroke="#0000FF" stroke-width="1" fill="none" shape-rendering="crispEdges"/>
<g stroke="#0000FF" stroke-width="1.15" fill="none"><circle cx="52.5" cy="614.5" r="2"/><circle cx="61.5" cy="614.5" r="2"/><circle cx="70.5" cy="615.5" r="2"/><circle cx="80.5" cy="616.5" r="2"/><circle cx="89.5" cy="618.5" r="2"/><circle cx="99.5" cy="618.5" r="2"/><circle cx="108.5" cy="617.5" r="2"/><circle cx="118.5" cy="617.5" r="2"/><circle cx="127.5" cy="617.5" r="2"/><circle cx="137.5" cy="616.5" r="2"/><circle cx="146.5" cy="616.5" r="2"/><circle cx="156.5" cy="618.5" r="2"/><circle cx="165.5" cy="615.5" r="2"/><circle cx="175.5" cy="615.5" r="2"/><circle cx="184.5" cy="615.5" r="2"/><circle cx="194.5" cy="616.5" r="2"/></g>
<path class="k" d="M267.5 527.5H418.5V648.5H267.5ZM267 527.5H273M267 547.5H273M267 567.5H273M267 587.5H273M267 607.5H273M267 628.5H273M267 648.5H273M286.5 644V648M305.5 644V648M324.5 644V648M343.5 644V648M361.5 644V648M380.5 644V648M399.5 644V648"/>
<text class="ax" x="264.55" y="530.2" text-anchor="end">300</text>
<text class="ax" x="264.55" y="550.2" text-anchor="end">250</text>
<text class="ax" x="264.55" y="570.2" text-anchor="end">200</text>
<text class="ax" x="264.55" y="590.2" text-anchor="end">150</text>
<text class="ax" x="264.55" y="610.2" text-anchor="end">100</text>
<text class="ax" x="264.55" y="631.2" text-anchor="end">50</text>
<text class="ax" x="264.55" y="651.2" text-anchor="end">0</text>
<text class="ax" x="266.4" y="657.6" text-anchor="middle">0</text>
<text class="ax" x="285.3" y="657.6" text-anchor="middle">2</text>
<text class="ax" x="304.1" y="657.6" text-anchor="middle">4</text>
<text class="ax" x="323.0" y="657.6" text-anchor="middle">6</text>
<text class="ax" x="341.9" y="657.6" text-anchor="middle">8</text>
<text class="ax" x="360.8" y="657.6" text-anchor="middle">10</text>
<text class="ax" x="379.6" y="657.6" text-anchor="middle">12</text>
<text class="ax" x="398.5" y="657.6" text-anchor="middle">14</text>
<text class="ax" x="417.4" y="657.6" text-anchor="middle">16</text>
<text class="t13" x="276.5" y="521">Vcal Thr. Width</text>
<path d="M267 567.5H419" stroke="#FF0000" stroke-width="1" stroke-dasharray="3 3" fill="none" shape-rendering="crispEdges"/>
<path d="M272.5 612.5L281.5 613.5L290.5 612.5L300.5 613.5L309.5 614.5L319.5 615.5L328.5 614.5L338.5 615.5L347.5 616.5L357.5 612.5L366.5 613.5L376.5 615.5L385.5 613.5L395.5 610.5L404.5 612.5L414.5 613.5" stroke="#50D04A" stroke-width="1" fill="none" shape-rendering="crispEdges"/>
<g fill="none" stroke="#50D04A" stroke-width="1" shape-rendering="crispEdges"><rect x="270.5" y="610.5" width="4" height="4"/><rect x="279.5" y="611.5" width="4" height="4"/><rect x="288.5" y="610.5" width="4" height="4"/><rect x="298.5" y="611.5" width="4" height="4"/><rect x="307.5" y="612.5" width="4" height="4"/><rect x="317.5" y="613.5" width="4" height="4"/><rect x="326.5" y="612.5" width="4" height="4"/><rect x="336.5" y="613.5" width="4" height="4"/><rect x="345.5" y="614.5" width="4" height="4"/><rect x="355.5" y="610.5" width="4" height="4"/><rect x="364.5" y="611.5" width="4" height="4"/><rect x="374.5" y="613.5" width="4" height="4"/><rect x="383.5" y="611.5" width="4" height="4"/><rect x="393.5" y="608.5" width="4" height="4"/><rect x="402.5" y="610.5" width="4" height="4"/><rect x="412.5" y="611.5" width="4" height="4"/></g>
<path class="k" d="M486.5 527.5H637.5V648.5H486.5ZM486 535.5H492M486 551.5H492M486 567.5H492M486 583.5H492M486 599.5H492M486 616.5H492M486 632.5H492M486 648.5H492M505.5 644V648M524.5 644V648M543.5 644V648M562.5 644V648M580.5 644V648M599.5 644V648M618.5 644V648"/>
<text class="ax" x="484.75" y="538.2" text-anchor="end">0.14</text>
<text class="ax" x="484.75" y="554.2" text-anchor="end">0.12</text>
<text class="ax" x="484.75" y="570.2" text-anchor="end">0.1</text>
<text class="ax" x="484.75" y="586.2" text-anchor="end">0.08</text>
<text class="ax" x="484.75" y="602.2" text-anchor="end">0.06</text>
<text class="ax" x="484.75" y="619.2" text-anchor="end">0.04</text>
<text class="ax" x="484.75" y="635.2" text-anchor="end">0.02</text>
<text class="ax" x="484.75" y="651.2" text-anchor="end">0</text>
<text class="ax" x="485.4" y="657.6" text-anchor="middle">0</text>
<text class="ax" x="504.3" y="657.6" text-anchor="middle">2</text>
<text class="ax" x="523.1" y="657.6" text-anchor="middle">4</text>
<text class="ax" x="542.0" y="657.6" text-anchor="middle">6</text>
<text class="ax" x="560.9" y="657.6" text-anchor="middle">8</text>
<text class="ax" x="579.8" y="657.6" text-anchor="middle">10</text>
<text class="ax" x="598.6" y="657.6" text-anchor="middle">12</text>
<text class="ax" x="617.5" y="657.6" text-anchor="middle">14</text>
<text class="ax" x="636.4" y="657.6" text-anchor="middle">16</text>
<text class="t13" x="496.6" y="521">Rel. Gain Width</text>
<path d="M486 567.5H638" stroke="#FF0000" stroke-width="1" stroke-dasharray="3 3" fill="none" shape-rendering="crispEdges"/>
<path d="M491.5 622.5L500.5 626.5L509.5 614.5L519.5 619.5L528.5 622.5L538.5 625.5L547.5 630.5L557.5 627.5L566.5 622.5L576.5 622.5L585.5 627.5L595.5 626.5L604.5 601.5L614.5 621.5L623.5 622.5L633.5 627.5" stroke="#FF00FF" stroke-width="1" fill="none" shape-rendering="crispEdges"/>
<g fill="none" stroke="#FF00FF" stroke-width="1"><path d="M489.5 624.5L491.5 620.5L493.5 624.5Z"/><path d="M498.5 628.5L500.5 624.5L502.5 628.5Z"/><path d="M507.5 616.5L509.5 612.5L511.5 616.5Z"/><path d="M517.5 621.5L519.5 617.5L521.5 621.5Z"/><path d="M526.5 624.5L528.5 620.5L530.5 624.5Z"/><path d="M536.5 627.5L538.5 623.5L540.5 627.5Z"/><path d="M545.5 632.5L547.5 628.5L549.5 632.5Z"/><path d="M555.5 629.5L557.5 625.5L559.5 629.5Z"/><path d="M564.5 624.5L566.5 620.5L568.5 624.5Z"/><path d="M574.5 624.5L576.5 620.5L578.5 624.5Z"/><path d="M583.5 629.5L585.5 625.5L587.5 629.5Z"/><path d="M593.5 628.5L595.5 624.5L597.5 628.5Z"/><path d="M602.5 603.5L604.5 599.5L606.5 603.5Z"/><path d="M612.5 623.5L614.5 619.5L616.5 623.5Z"/><path d="M621.5 624.5L623.5 620.5L625.5 624.5Z"/><path d="M631.5 629.5L633.5 625.5L635.5 629.5Z"/></g>
<path class="k" d="M706.5 527.5H857.5V648.5H706.5ZM706 527.5H712M706 544.5H712M706 561.5H712M706 579.5H712M706 596.5H712M706 613.5H712M706 631.5H712M706 648.5H712M725.5 644V648M744.5 644V648M763.5 644V648M782.5 644V648M800.5 644V648M819.5 644V648M838.5 644V648"/>
<text class="ax" x="703.65" y="530.2" text-anchor="end">3500</text>
<text class="ax" x="703.65" y="547.2" text-anchor="end">3000</text>
<text class="ax" x="703.65" y="564.2" text-anchor="end">2500</text>
<text class="ax" x="703.65" y="582.2" text-anchor="end">2000</text>
<text class="ax" x="703.65" y="599.2" text-anchor="end">1500</text>
<text class="ax" x="703.65" y="616.2" text-anchor="end">1000</text>
<text class="ax" x="703.65" y="634.2" text-anchor="end">500</text>
<text class="ax" x="703.65" y="651.2" text-anchor="end">0</text>
<text class="ax" x="705.4" y="657.6" text-anchor="middle">0</text>
<text class="ax" x="724.3" y="657.6" text-anchor="middle">2</text>
<text class="ax" x="743.1" y="657.6" text-anchor="middle">4</text>
<text class="ax" x="762.0" y="657.6" text-anchor="middle">6</text>
<text class="ax" x="780.9" y="657.6" text-anchor="middle">8</text>
<text class="ax" x="799.8" y="657.6" text-anchor="middle">10</text>
<text class="ax" x="818.6" y="657.6" text-anchor="middle">12</text>
<text class="ax" x="837.5" y="657.6" text-anchor="middle">14</text>
<text class="ax" x="856.4" y="657.6" text-anchor="middle">16</text>
<text class="t13" x="715.5" y="521">Pedestal Spread</text>
<path d="M706 561.5H858" stroke="#FF0000" stroke-width="1" stroke-dasharray="3 3" fill="none" shape-rendering="crispEdges"/>
<path d="M711.5 600.9L720.5 591.9L729.5 602.9L739.5 599.8L748.5 601.9L758.5 597.8L767.5 599.8L777.5 599.8L786.5 601.9L796.5 595.2L805.5 605.7L815.5 601.6L824.5 598.8L834.5 601.6L843.5 590.6L853.5 595.7" stroke="#000" stroke-width="1" fill="none"/>
<g fill="#000" stroke="none"><path d="M709.1 599.0L713.9 599.0L711.5 603.3Z"/><path d="M718.1 590.0L722.9 590.0L720.5 594.3Z"/><path d="M727.1 601.0L731.9 601.0L729.5 605.3Z"/><path d="M737.1 597.9L741.9 597.9L739.5 602.2Z"/><path d="M746.1 600.0L750.9 600.0L748.5 604.3Z"/><path d="M756.1 595.9L760.9 595.9L758.5 600.2Z"/><path d="M765.1 597.9L769.9 597.9L767.5 602.2Z"/><path d="M775.1 597.9L779.9 597.9L777.5 602.2Z"/><path d="M784.1 600.0L788.9 600.0L786.5 604.3Z"/><path d="M794.1 593.3L798.9 593.3L796.5 597.6Z"/><path d="M803.1 603.8L807.9 603.8L805.5 608.1Z"/><path d="M813.1 599.7L817.9 599.7L815.5 604.0Z"/><path d="M822.1 596.9L826.9 596.9L824.5 601.2Z"/><path d="M832.1 599.7L836.9 599.7L834.5 604.0Z"/><path d="M841.1 588.7L845.9 588.7L843.5 593.0Z"/><path d="M851.1 593.8L855.9 593.8L853.5 598.1Z"/></g>
</svg></body></html>
